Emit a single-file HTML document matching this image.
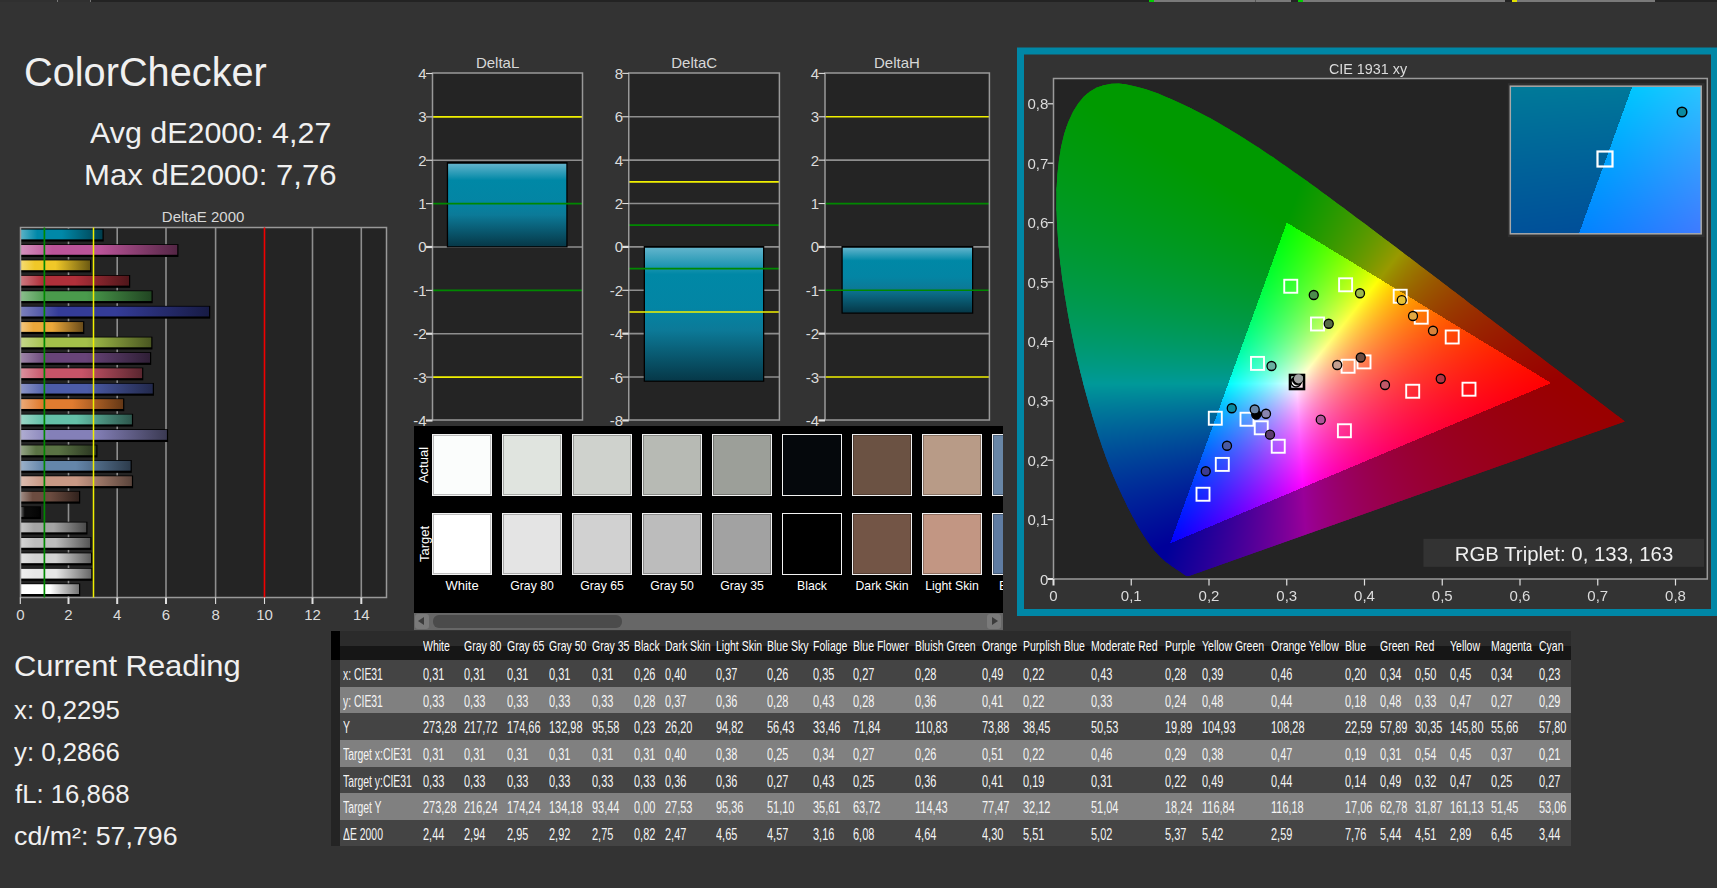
<!DOCTYPE html><html><head><meta charset="utf-8"><style>
html,body{margin:0;padding:0;}body{width:1717px;height:888px;background:#333333;position:relative;overflow:hidden;font-family:"Liberation Sans", sans-serif;}
.t{position:absolute;white-space:nowrap;}
svg{position:absolute;left:0;top:0;}
</style></head><body>
<div style="position:absolute;left:0;top:0;width:1717px;height:2px;background:#232323"></div>
<div style="position:absolute;left:0;top:0;width:90px;height:2px;background:#303030"></div>
<div style="position:absolute;left:57px;top:0;width:1px;height:2px;background:#777"></div>
<div style="position:absolute;left:90px;top:0;width:1px;height:2px;background:#777"></div>
<div style="position:absolute;left:1149px;top:0;width:142px;height:2px;background:#7a7a7a"></div>
<div style="position:absolute;left:1149px;top:0;width:5px;height:2px;background:#00d000"></div>
<div style="position:absolute;left:1255px;top:0;width:1px;height:2px;background:#555"></div>
<div style="position:absolute;left:1298px;top:0;width:207px;height:2px;background:#7a7a7a"></div>
<div style="position:absolute;left:1298px;top:0;width:5px;height:2px;background:#00d000"></div>
<div style="position:absolute;left:1512px;top:0;width:143px;height:2px;background:#7a7a7a"></div>
<div style="position:absolute;left:1512px;top:0;width:5px;height:2px;background:#e0e000"></div>
<div class="t" style="left:23.60px;top:51.80px;font-size:40px;line-height:40px;color:#f0f0f0;transform:scaleX(0.993);transform-origin:left 0;">ColorChecker</div>
<div class="t" style="left:89.70px;top:118.35px;font-size:30px;line-height:30px;color:#f0f0f0;transform:scaleX(1.014);transform-origin:left 0;">Avg dE2000: 4,27</div>
<div class="t" style="left:84.20px;top:160.35px;font-size:30px;line-height:30px;color:#f0f0f0;transform:scaleX(1.037);transform-origin:left 0;">Max dE2000: 7,76</div>
<div class="t" style="left:161.80px;top:209.18px;font-size:15px;line-height:15px;color:#d8d8d8;">DeltaE 2000</div>
<svg width="1717" height="888"><defs><linearGradient id="eb0" x1="0" y1="0" x2="1" y2="0"><stop offset="0" stop-color="#59b2c6"/><stop offset="0.2" stop-color="#0088a8"/><stop offset="0.5" stop-color="#0088a8"/><stop offset="1" stop-color="#003d4c"/></linearGradient><linearGradient id="eb1" x1="0" y1="0" x2="1" y2="0"><stop offset="0" stop-color="#d390bd"/><stop offset="0.2" stop-color="#bb5499"/><stop offset="0.5" stop-color="#bb5499"/><stop offset="1" stop-color="#542645"/></linearGradient><linearGradient id="eb2" x1="0" y1="0" x2="1" y2="0"><stop offset="0" stop-color="#f5db73"/><stop offset="0.2" stop-color="#f0c828"/><stop offset="0.5" stop-color="#f0c828"/><stop offset="1" stop-color="#6c5a12"/></linearGradient><linearGradient id="eb3" x1="0" y1="0" x2="1" y2="0"><stop offset="0" stop-color="#cc787f"/><stop offset="0.2" stop-color="#b0303a"/><stop offset="0.5" stop-color="#b0303a"/><stop offset="1" stop-color="#4f161a"/></linearGradient><linearGradient id="eb4" x1="0" y1="0" x2="1" y2="0"><stop offset="0" stop-color="#89bd8b"/><stop offset="0.2" stop-color="#4a9a4c"/><stop offset="0.5" stop-color="#4a9a4c"/><stop offset="1" stop-color="#214522"/></linearGradient><linearGradient id="eb5" x1="0" y1="0" x2="1" y2="0"><stop offset="0" stop-color="#7b80bc"/><stop offset="0.2" stop-color="#343c98"/><stop offset="0.5" stop-color="#343c98"/><stop offset="1" stop-color="#171b44"/></linearGradient><linearGradient id="eb6" x1="0" y1="0" x2="1" y2="0"><stop offset="0" stop-color="#f2c67f"/><stop offset="0.2" stop-color="#eba83a"/><stop offset="0.5" stop-color="#eba83a"/><stop offset="1" stop-color="#6a4c1a"/></linearGradient><linearGradient id="eb7" x1="0" y1="0" x2="1" y2="0"><stop offset="0" stop-color="#c4d689"/><stop offset="0.2" stop-color="#a4c04a"/><stop offset="0.5" stop-color="#a4c04a"/><stop offset="1" stop-color="#4a5621"/></linearGradient><linearGradient id="eb8" x1="0" y1="0" x2="1" y2="0"><stop offset="0" stop-color="#9d85a7"/><stop offset="0.2" stop-color="#684478"/><stop offset="0.5" stop-color="#684478"/><stop offset="1" stop-color="#2f1f36"/></linearGradient><linearGradient id="eb9" x1="0" y1="0" x2="1" y2="0"><stop offset="0" stop-color="#db909d"/><stop offset="0.2" stop-color="#c85468"/><stop offset="0.5" stop-color="#c85468"/><stop offset="1" stop-color="#5a262f"/></linearGradient><linearGradient id="eb10" x1="0" y1="0" x2="1" y2="0"><stop offset="0" stop-color="#8b95c6"/><stop offset="0.2" stop-color="#4c5ca8"/><stop offset="0.5" stop-color="#4c5ca8"/><stop offset="1" stop-color="#22294c"/></linearGradient><linearGradient id="eb11" x1="0" y1="0" x2="1" y2="0"><stop offset="0" stop-color="#ebaa78"/><stop offset="0.2" stop-color="#e07c30"/><stop offset="0.5" stop-color="#e07c30"/><stop offset="1" stop-color="#653816"/></linearGradient><linearGradient id="eb12" x1="0" y1="0" x2="1" y2="0"><stop offset="0" stop-color="#9ad6c6"/><stop offset="0.2" stop-color="#64c0a8"/><stop offset="0.5" stop-color="#64c0a8"/><stop offset="1" stop-color="#2d564c"/></linearGradient><linearGradient id="eb13" x1="0" y1="0" x2="1" y2="0"><stop offset="0" stop-color="#afacd1"/><stop offset="0.2" stop-color="#8480b8"/><stop offset="0.5" stop-color="#8480b8"/><stop offset="1" stop-color="#3b3a53"/></linearGradient><linearGradient id="eb14" x1="0" y1="0" x2="1" y2="0"><stop offset="0" stop-color="#94a385"/><stop offset="0.2" stop-color="#5a7244"/><stop offset="0.5" stop-color="#5a7244"/><stop offset="1" stop-color="#28331f"/></linearGradient><linearGradient id="eb15" x1="0" y1="0" x2="1" y2="0"><stop offset="0" stop-color="#9ab0c8"/><stop offset="0.2" stop-color="#6486aa"/><stop offset="0.5" stop-color="#6486aa"/><stop offset="1" stop-color="#2d3c4c"/></linearGradient><linearGradient id="eb16" x1="0" y1="0" x2="1" y2="0"><stop offset="0" stop-color="#dbbcaf"/><stop offset="0.2" stop-color="#c89884"/><stop offset="0.5" stop-color="#c89884"/><stop offset="1" stop-color="#5a443b"/></linearGradient><linearGradient id="eb17" x1="0" y1="0" x2="1" y2="0"><stop offset="0" stop-color="#9f8b83"/><stop offset="0.2" stop-color="#6c4c40"/><stop offset="0.5" stop-color="#6c4c40"/><stop offset="1" stop-color="#31221d"/></linearGradient><linearGradient id="eb18" x1="0" y1="0" x2="1" y2="0"><stop offset="0" stop-color="#606060"/><stop offset="0.2" stop-color="#0a0a0a"/><stop offset="0.5" stop-color="#0a0a0a"/><stop offset="1" stop-color="#040404"/></linearGradient><linearGradient id="eb19" x1="0" y1="0" x2="1" y2="0"><stop offset="0" stop-color="#c4c4c4"/><stop offset="0.2" stop-color="#a4a4a4"/><stop offset="0.5" stop-color="#a4a4a4"/><stop offset="1" stop-color="#4a4a4a"/></linearGradient><linearGradient id="eb20" x1="0" y1="0" x2="1" y2="0"><stop offset="0" stop-color="#d4d4d4"/><stop offset="0.2" stop-color="#bdbdbd"/><stop offset="0.5" stop-color="#bdbdbd"/><stop offset="1" stop-color="#555555"/></linearGradient><linearGradient id="eb21" x1="0" y1="0" x2="1" y2="0"><stop offset="0" stop-color="#e2e2e2"/><stop offset="0.2" stop-color="#d2d2d2"/><stop offset="0.5" stop-color="#d2d2d2"/><stop offset="1" stop-color="#5e5e5e"/></linearGradient><linearGradient id="eb22" x1="0" y1="0" x2="1" y2="0"><stop offset="0" stop-color="#efefef"/><stop offset="0.2" stop-color="#e6e6e6"/><stop offset="0.5" stop-color="#e6e6e6"/><stop offset="1" stop-color="#676767"/></linearGradient><linearGradient id="eb23" x1="0" y1="0" x2="1" y2="0"><stop offset="0" stop-color="#ffffff"/><stop offset="0.2" stop-color="#ffffff"/><stop offset="0.5" stop-color="#ffffff"/><stop offset="1" stop-color="#737373"/></linearGradient><linearGradient id="db432" x1="0" y1="0" x2="0" y2="1"><stop offset="0" stop-color="#62b4cc"/><stop offset="0.2" stop-color="#0088a6"/><stop offset="0.45" stop-color="#0385a4"/><stop offset="0.62" stop-color="#0c7a98"/><stop offset="1" stop-color="#063848"/></linearGradient><linearGradient id="db628" x1="0" y1="0" x2="0" y2="1"><stop offset="0" stop-color="#62b4cc"/><stop offset="0.2" stop-color="#0088a6"/><stop offset="0.45" stop-color="#0385a4"/><stop offset="0.62" stop-color="#0c7a98"/><stop offset="1" stop-color="#063848"/></linearGradient><linearGradient id="db825" x1="0" y1="0" x2="0" y2="1"><stop offset="0" stop-color="#62b4cc"/><stop offset="0.2" stop-color="#0088a6"/><stop offset="0.45" stop-color="#0385a4"/><stop offset="0.62" stop-color="#0c7a98"/><stop offset="1" stop-color="#063848"/></linearGradient></defs><rect x="20.5" y="227.5" width="366.0" height="370.0" fill="#242424"/><line x1="68.50" y1="227.5" x2="68.50" y2="597.5" stroke="#8e8e8e" stroke-width="1.6"/><line x1="117.20" y1="227.5" x2="117.20" y2="597.5" stroke="#8e8e8e" stroke-width="1.6"/><line x1="166.00" y1="227.5" x2="166.00" y2="597.5" stroke="#8e8e8e" stroke-width="1.6"/><line x1="215.60" y1="227.5" x2="215.60" y2="597.5" stroke="#8e8e8e" stroke-width="1.6"/><line x1="312.50" y1="227.5" x2="312.50" y2="597.5" stroke="#8e8e8e" stroke-width="1.6"/><line x1="361.30" y1="227.5" x2="361.30" y2="597.5" stroke="#8e8e8e" stroke-width="1.6"/><rect x="21" y="228.75" width="82.70" height="12.8" fill="#000"/><rect x="21" y="229.55" width="81.50" height="9.8" fill="url(#eb0)"/><rect x="21" y="244.17" width="157.45" height="12.8" fill="#000"/><rect x="21" y="244.97" width="156.25" height="9.8" fill="url(#eb1)"/><rect x="21" y="259.59" width="70.20" height="12.8" fill="#000"/><rect x="21" y="260.39" width="69.00" height="9.8" fill="url(#eb2)"/><rect x="21" y="275.01" width="109.20" height="12.8" fill="#000"/><rect x="21" y="275.81" width="108.00" height="9.8" fill="url(#eb3)"/><rect x="21" y="290.43" width="131.70" height="12.8" fill="#000"/><rect x="21" y="291.23" width="130.50" height="9.8" fill="url(#eb4)"/><rect x="21" y="305.85" width="189.20" height="12.8" fill="#000"/><rect x="21" y="306.65" width="188.00" height="9.8" fill="url(#eb5)"/><rect x="21" y="321.27" width="63.30" height="12.8" fill="#000"/><rect x="21" y="322.07" width="62.10" height="9.8" fill="url(#eb6)"/><rect x="21" y="336.69" width="131.45" height="12.8" fill="#000"/><rect x="21" y="337.49" width="130.25" height="9.8" fill="url(#eb7)"/><rect x="21" y="352.11" width="130.20" height="12.8" fill="#000"/><rect x="21" y="352.91" width="129.00" height="9.8" fill="url(#eb8)"/><rect x="21" y="367.53" width="122.30" height="12.8" fill="#000"/><rect x="21" y="368.33" width="121.10" height="9.8" fill="url(#eb9)"/><rect x="21" y="382.95" width="132.95" height="12.8" fill="#000"/><rect x="21" y="383.75" width="131.75" height="9.8" fill="url(#eb10)"/><rect x="21" y="398.37" width="103.30" height="12.8" fill="#000"/><rect x="21" y="399.17" width="102.10" height="9.8" fill="url(#eb11)"/><rect x="21" y="413.79" width="112.10" height="12.8" fill="#000"/><rect x="21" y="414.59" width="110.90" height="9.8" fill="url(#eb12)"/><rect x="21" y="429.21" width="147.10" height="12.8" fill="#000"/><rect x="21" y="430.01" width="145.90" height="9.8" fill="url(#eb13)"/><rect x="21" y="444.63" width="76.45" height="12.8" fill="#000"/><rect x="21" y="445.43" width="75.25" height="9.8" fill="url(#eb14)"/><rect x="21" y="460.05" width="110.80" height="12.8" fill="#000"/><rect x="21" y="460.85" width="109.60" height="9.8" fill="url(#eb15)"/><rect x="21" y="475.47" width="112.10" height="12.8" fill="#000"/><rect x="21" y="476.27" width="110.90" height="9.8" fill="url(#eb16)"/><rect x="21" y="490.89" width="59.20" height="12.8" fill="#000"/><rect x="21" y="491.69" width="58.00" height="9.8" fill="url(#eb17)"/><rect x="21" y="506.31" width="19.95" height="12.8" fill="#000"/><rect x="21" y="507.11" width="18.75" height="9.8" fill="url(#eb18)"/><rect x="21" y="521.73" width="66.45" height="12.8" fill="#000"/><rect x="21" y="522.53" width="65.25" height="9.8" fill="url(#eb19)"/><rect x="21" y="537.15" width="70.45" height="12.8" fill="#000"/><rect x="21" y="537.95" width="69.25" height="9.8" fill="url(#eb20)"/><rect x="21" y="552.57" width="71.20" height="12.8" fill="#000"/><rect x="21" y="553.37" width="70.00" height="9.8" fill="url(#eb21)"/><rect x="21" y="567.99" width="71.45" height="12.8" fill="#000"/><rect x="21" y="568.79" width="70.25" height="9.8" fill="url(#eb22)"/><rect x="21" y="583.41" width="59.20" height="12.8" fill="#000"/><rect x="21" y="584.21" width="58.00" height="9.8" fill="url(#eb23)"/><rect x="20.5" y="227.5" width="366.0" height="370.0" fill="none" stroke="#999" stroke-width="1.5"/><line x1="44.4" y1="227.5" x2="44.4" y2="597.5" stroke="#008800" stroke-width="1.7"/><line x1="93.5" y1="227.5" x2="93.5" y2="597.5" stroke="#f0f000" stroke-width="1.5"/><line x1="264.5" y1="227.5" x2="264.5" y2="597.5" stroke="#f00000" stroke-width="1.6"/><line x1="20.30" y1="597.5" x2="20.30" y2="604" stroke="#e0e0e0" stroke-width="1.1"/><line x1="68.50" y1="597.5" x2="68.50" y2="604" stroke="#e0e0e0" stroke-width="2.0"/><line x1="117.20" y1="597.5" x2="117.20" y2="604" stroke="#e0e0e0" stroke-width="2.0"/><line x1="166.00" y1="597.5" x2="166.00" y2="604" stroke="#e0e0e0" stroke-width="2.0"/><line x1="215.60" y1="597.5" x2="215.60" y2="604" stroke="#e0e0e0" stroke-width="1.1"/><line x1="264.50" y1="597.5" x2="264.50" y2="604" stroke="#e0e0e0" stroke-width="1.1"/><line x1="312.50" y1="597.5" x2="312.50" y2="604" stroke="#e0e0e0" stroke-width="2.0"/><line x1="361.30" y1="597.5" x2="361.30" y2="604" stroke="#e0e0e0" stroke-width="2.0"/><rect x="432.5" y="73.0" width="150.0" height="347.0" fill="#242424"/><line x1="432.5" y1="160.25" x2="582.5" y2="160.25" stroke="#8e8e8e" stroke-width="1.6"/><line x1="432.5" y1="247.00" x2="582.5" y2="247.00" stroke="#8e8e8e" stroke-width="1.6"/><line x1="432.5" y1="333.75" x2="582.5" y2="333.75" stroke="#8e8e8e" stroke-width="1.6"/><rect x="446.80" y="161.95" width="120.80" height="85.50" fill="#000"/><rect x="448.10" y="163.75" width="118.20" height="82.50" fill="url(#db432)"/><line x1="432.5" y1="116.88" x2="582.5" y2="116.88" stroke="#f0f000" stroke-width="1.6"/><line x1="432.5" y1="377.12" x2="582.5" y2="377.12" stroke="#f0f000" stroke-width="1.6"/><line x1="432.5" y1="203.62" x2="582.5" y2="203.62" stroke="#008800" stroke-width="1.7"/><line x1="432.5" y1="290.38" x2="582.5" y2="290.38" stroke="#008800" stroke-width="1.7"/><rect x="432.5" y="73.0" width="150.0" height="347.0" fill="none" stroke="#999" stroke-width="1.5"/><line x1="426.00" y1="73.50" x2="432.5" y2="73.50" stroke="#e0e0e0" stroke-width="1.1"/><line x1="426.00" y1="116.88" x2="432.5" y2="116.88" stroke="#e0e0e0" stroke-width="1.1"/><line x1="426.00" y1="160.25" x2="432.5" y2="160.25" stroke="#e0e0e0" stroke-width="1.1"/><line x1="426.00" y1="203.62" x2="432.5" y2="203.62" stroke="#e0e0e0" stroke-width="1.1"/><line x1="426.00" y1="247.00" x2="432.5" y2="247.00" stroke="#e0e0e0" stroke-width="2.2"/><line x1="426.00" y1="290.38" x2="432.5" y2="290.38" stroke="#e0e0e0" stroke-width="1.1"/><line x1="426.00" y1="333.75" x2="432.5" y2="333.75" stroke="#e0e0e0" stroke-width="2.2"/><line x1="426.00" y1="377.12" x2="432.5" y2="377.12" stroke="#e0e0e0" stroke-width="1.1"/><line x1="426.00" y1="420.50" x2="432.5" y2="420.50" stroke="#e0e0e0" stroke-width="2.2"/><rect x="628.75" y="73.0" width="150.64999999999998" height="347.0" fill="#242424"/><line x1="628.75" y1="116.76" x2="779.4" y2="116.76" stroke="#8e8e8e" stroke-width="1.6"/><line x1="628.75" y1="160.14" x2="779.4" y2="160.14" stroke="#8e8e8e" stroke-width="1.6"/><line x1="628.75" y1="203.52" x2="779.4" y2="203.52" stroke="#8e8e8e" stroke-width="1.6"/><line x1="628.75" y1="246.90" x2="779.4" y2="246.90" stroke="#8e8e8e" stroke-width="1.6"/><line x1="628.75" y1="290.28" x2="779.4" y2="290.28" stroke="#8e8e8e" stroke-width="1.6"/><line x1="628.75" y1="333.66" x2="779.4" y2="333.66" stroke="#8e8e8e" stroke-width="1.6"/><line x1="628.75" y1="377.04" x2="779.4" y2="377.04" stroke="#8e8e8e" stroke-width="1.6"/><rect x="643.70" y="245.95" width="120.60" height="135.85" fill="#000"/><rect x="645.00" y="247.75" width="118.00" height="132.85" fill="url(#db628)"/><line x1="628.75" y1="181.83" x2="779.4" y2="181.83" stroke="#f0f000" stroke-width="1.6"/><line x1="628.75" y1="311.97" x2="779.4" y2="311.97" stroke="#f0f000" stroke-width="1.6"/><line x1="628.75" y1="225.21" x2="779.4" y2="225.21" stroke="#008800" stroke-width="1.7"/><line x1="628.75" y1="268.59" x2="779.4" y2="268.59" stroke="#008800" stroke-width="1.7"/><rect x="628.75" y="73.0" width="150.64999999999998" height="347.0" fill="none" stroke="#999" stroke-width="1.5"/><line x1="622.25" y1="73.38" x2="628.75" y2="73.38" stroke="#e0e0e0" stroke-width="1.1"/><line x1="622.25" y1="116.76" x2="628.75" y2="116.76" stroke="#e0e0e0" stroke-width="1.1"/><line x1="622.25" y1="160.14" x2="628.75" y2="160.14" stroke="#e0e0e0" stroke-width="1.1"/><line x1="622.25" y1="203.52" x2="628.75" y2="203.52" stroke="#e0e0e0" stroke-width="1.1"/><line x1="622.25" y1="246.90" x2="628.75" y2="246.90" stroke="#e0e0e0" stroke-width="2.2"/><line x1="622.25" y1="290.28" x2="628.75" y2="290.28" stroke="#e0e0e0" stroke-width="1.1"/><line x1="622.25" y1="333.66" x2="628.75" y2="333.66" stroke="#e0e0e0" stroke-width="2.2"/><line x1="622.25" y1="377.04" x2="628.75" y2="377.04" stroke="#e0e0e0" stroke-width="1.1"/><line x1="622.25" y1="420.42" x2="628.75" y2="420.42" stroke="#e0e0e0" stroke-width="2.2"/><rect x="825.0" y="73.0" width="164.39999999999998" height="347.0" fill="#242424"/><line x1="825.0" y1="160.15" x2="989.4" y2="160.15" stroke="#8e8e8e" stroke-width="1.6"/><line x1="825.0" y1="246.90" x2="989.4" y2="246.90" stroke="#8e8e8e" stroke-width="1.6"/><line x1="825.0" y1="333.65" x2="989.4" y2="333.65" stroke="#8e8e8e" stroke-width="1.6"/><rect x="841.45" y="245.95" width="131.85" height="67.75" fill="#000"/><rect x="842.75" y="247.75" width="129.25" height="64.75" fill="url(#db825)"/><line x1="825.0" y1="116.78" x2="989.4" y2="116.78" stroke="#f0f000" stroke-width="1.6"/><line x1="825.0" y1="377.02" x2="989.4" y2="377.02" stroke="#f0f000" stroke-width="1.6"/><line x1="825.0" y1="203.53" x2="989.4" y2="203.53" stroke="#008800" stroke-width="1.7"/><line x1="825.0" y1="290.27" x2="989.4" y2="290.27" stroke="#008800" stroke-width="1.7"/><rect x="825.0" y="73.0" width="164.39999999999998" height="347.0" fill="none" stroke="#999" stroke-width="1.5"/><line x1="818.50" y1="73.40" x2="825.0" y2="73.40" stroke="#e0e0e0" stroke-width="1.1"/><line x1="818.50" y1="116.78" x2="825.0" y2="116.78" stroke="#e0e0e0" stroke-width="1.1"/><line x1="818.50" y1="160.15" x2="825.0" y2="160.15" stroke="#e0e0e0" stroke-width="1.1"/><line x1="818.50" y1="203.53" x2="825.0" y2="203.53" stroke="#e0e0e0" stroke-width="1.1"/><line x1="818.50" y1="246.90" x2="825.0" y2="246.90" stroke="#e0e0e0" stroke-width="2.2"/><line x1="818.50" y1="290.27" x2="825.0" y2="290.27" stroke="#e0e0e0" stroke-width="1.1"/><line x1="818.50" y1="333.65" x2="825.0" y2="333.65" stroke="#e0e0e0" stroke-width="2.2"/><line x1="818.50" y1="377.02" x2="825.0" y2="377.02" stroke="#e0e0e0" stroke-width="1.1"/><line x1="818.50" y1="420.40" x2="825.0" y2="420.40" stroke="#e0e0e0" stroke-width="2.2"/><rect x="1020.5" y="51" width="694" height="561.5" fill="none" stroke="#0087a6" stroke-width="7"/><rect x="1053.5" y="78.5" width="653.8" height="500.5" fill="#242424"/></svg>
<div class="t" style="left:475.90px;top:55.27px;font-size:15px;line-height:15px;color:#d8d8d8;">DeltaL</div>
<div class="t" style="left:671.25px;top:55.27px;font-size:15px;line-height:15px;color:#d8d8d8;">DeltaC</div>
<div class="t" style="left:874.00px;top:55.27px;font-size:15px;line-height:15px;color:#d8d8d8;">DeltaH</div>
<div class="t" style="left:20.30px;top:607.17px;font-size:15px;line-height:15px;color:#dcdcdc;transform:translateX(-50%) ;transform-origin:center 0;">0</div>
<div class="t" style="left:68.50px;top:607.17px;font-size:15px;line-height:15px;color:#dcdcdc;transform:translateX(-50%) ;transform-origin:center 0;">2</div>
<div class="t" style="left:117.20px;top:607.17px;font-size:15px;line-height:15px;color:#dcdcdc;transform:translateX(-50%) ;transform-origin:center 0;">4</div>
<div class="t" style="left:166.00px;top:607.17px;font-size:15px;line-height:15px;color:#dcdcdc;transform:translateX(-50%) ;transform-origin:center 0;">6</div>
<div class="t" style="left:215.60px;top:607.17px;font-size:15px;line-height:15px;color:#dcdcdc;transform:translateX(-50%) ;transform-origin:center 0;">8</div>
<div class="t" style="left:264.50px;top:607.17px;font-size:15px;line-height:15px;color:#dcdcdc;transform:translateX(-50%) ;transform-origin:center 0;">10</div>
<div class="t" style="left:312.50px;top:607.17px;font-size:15px;line-height:15px;color:#dcdcdc;transform:translateX(-50%) ;transform-origin:center 0;">12</div>
<div class="t" style="left:361.30px;top:607.17px;font-size:15px;line-height:15px;color:#dcdcdc;transform:translateX(-50%) ;transform-origin:center 0;">14</div>
<div class="t" style="left:426.50px;top:65.97px;font-size:15px;line-height:15px;color:#dcdcdc;transform:translateX(-100%) ;transform-origin:right 0;">4</div>
<div class="t" style="left:426.50px;top:109.35px;font-size:15px;line-height:15px;color:#dcdcdc;transform:translateX(-100%) ;transform-origin:right 0;">3</div>
<div class="t" style="left:426.50px;top:152.73px;font-size:15px;line-height:15px;color:#dcdcdc;transform:translateX(-100%) ;transform-origin:right 0;">2</div>
<div class="t" style="left:426.50px;top:196.10px;font-size:15px;line-height:15px;color:#dcdcdc;transform:translateX(-100%) ;transform-origin:right 0;">1</div>
<div class="t" style="left:426.50px;top:239.48px;font-size:15px;line-height:15px;color:#dcdcdc;transform:translateX(-100%) ;transform-origin:right 0;">0</div>
<div class="t" style="left:426.50px;top:282.85px;font-size:15px;line-height:15px;color:#dcdcdc;transform:translateX(-100%) ;transform-origin:right 0;">-1</div>
<div class="t" style="left:426.50px;top:326.23px;font-size:15px;line-height:15px;color:#dcdcdc;transform:translateX(-100%) ;transform-origin:right 0;">-2</div>
<div class="t" style="left:426.50px;top:369.60px;font-size:15px;line-height:15px;color:#dcdcdc;transform:translateX(-100%) ;transform-origin:right 0;">-3</div>
<div class="t" style="left:426.50px;top:412.98px;font-size:15px;line-height:15px;color:#dcdcdc;transform:translateX(-100%) ;transform-origin:right 0;">-4</div>
<div class="t" style="left:623.00px;top:65.85px;font-size:15px;line-height:15px;color:#dcdcdc;transform:translateX(-100%) ;transform-origin:right 0;">8</div>
<div class="t" style="left:623.00px;top:109.23px;font-size:15px;line-height:15px;color:#dcdcdc;transform:translateX(-100%) ;transform-origin:right 0;">6</div>
<div class="t" style="left:623.00px;top:152.62px;font-size:15px;line-height:15px;color:#dcdcdc;transform:translateX(-100%) ;transform-origin:right 0;">4</div>
<div class="t" style="left:623.00px;top:196.00px;font-size:15px;line-height:15px;color:#dcdcdc;transform:translateX(-100%) ;transform-origin:right 0;">2</div>
<div class="t" style="left:623.00px;top:239.38px;font-size:15px;line-height:15px;color:#dcdcdc;transform:translateX(-100%) ;transform-origin:right 0;">0</div>
<div class="t" style="left:623.00px;top:282.76px;font-size:15px;line-height:15px;color:#dcdcdc;transform:translateX(-100%) ;transform-origin:right 0;">-2</div>
<div class="t" style="left:623.00px;top:326.14px;font-size:15px;line-height:15px;color:#dcdcdc;transform:translateX(-100%) ;transform-origin:right 0;">-4</div>
<div class="t" style="left:623.00px;top:369.52px;font-size:15px;line-height:15px;color:#dcdcdc;transform:translateX(-100%) ;transform-origin:right 0;">-6</div>
<div class="t" style="left:623.00px;top:412.90px;font-size:15px;line-height:15px;color:#dcdcdc;transform:translateX(-100%) ;transform-origin:right 0;">-8</div>
<div class="t" style="left:819.00px;top:65.88px;font-size:15px;line-height:15px;color:#dcdcdc;transform:translateX(-100%) ;transform-origin:right 0;">4</div>
<div class="t" style="left:819.00px;top:109.25px;font-size:15px;line-height:15px;color:#dcdcdc;transform:translateX(-100%) ;transform-origin:right 0;">3</div>
<div class="t" style="left:819.00px;top:152.63px;font-size:15px;line-height:15px;color:#dcdcdc;transform:translateX(-100%) ;transform-origin:right 0;">2</div>
<div class="t" style="left:819.00px;top:196.00px;font-size:15px;line-height:15px;color:#dcdcdc;transform:translateX(-100%) ;transform-origin:right 0;">1</div>
<div class="t" style="left:819.00px;top:239.38px;font-size:15px;line-height:15px;color:#dcdcdc;transform:translateX(-100%) ;transform-origin:right 0;">0</div>
<div class="t" style="left:819.00px;top:282.75px;font-size:15px;line-height:15px;color:#dcdcdc;transform:translateX(-100%) ;transform-origin:right 0;">-1</div>
<div class="t" style="left:819.00px;top:326.12px;font-size:15px;line-height:15px;color:#dcdcdc;transform:translateX(-100%) ;transform-origin:right 0;">-2</div>
<div class="t" style="left:819.00px;top:369.50px;font-size:15px;line-height:15px;color:#dcdcdc;transform:translateX(-100%) ;transform-origin:right 0;">-3</div>
<div class="t" style="left:819.00px;top:412.88px;font-size:15px;line-height:15px;color:#dcdcdc;transform:translateX(-100%) ;transform-origin:right 0;">-4</div>
<div style="position:absolute;left:414px;top:426px;width:589px;height:187px;background:#000;overflow:hidden">
<div style="position:absolute;left:18px;top:8px;width:58px;height:60px;border:1px solid #f2f2f2;box-shadow:inset 0 0 0 1px rgba(0,0,0,0.25);background:#fbfdfc"></div>
<div style="position:absolute;left:18px;top:87px;width:58px;height:60px;border:1px solid #f2f2f2;box-shadow:inset 0 0 0 1px rgba(0,0,0,0.25);background:#ffffff"></div>
<div style="position:absolute;left:88px;top:8px;width:58px;height:60px;border:1px solid #f2f2f2;box-shadow:inset 0 0 0 1px rgba(0,0,0,0.25);background:#e0e4df"></div>
<div style="position:absolute;left:88px;top:87px;width:58px;height:60px;border:1px solid #f2f2f2;box-shadow:inset 0 0 0 1px rgba(0,0,0,0.25);background:#e4e4e4"></div>
<div style="position:absolute;left:158px;top:8px;width:58px;height:60px;border:1px solid #f2f2f2;box-shadow:inset 0 0 0 1px rgba(0,0,0,0.25);background:#cfd2cd"></div>
<div style="position:absolute;left:158px;top:87px;width:58px;height:60px;border:1px solid #f2f2f2;box-shadow:inset 0 0 0 1px rgba(0,0,0,0.25);background:#d1d1d1"></div>
<div style="position:absolute;left:228px;top:8px;width:58px;height:60px;border:1px solid #f2f2f2;box-shadow:inset 0 0 0 1px rgba(0,0,0,0.25);background:#b7bab4"></div>
<div style="position:absolute;left:228px;top:87px;width:58px;height:60px;border:1px solid #f2f2f2;box-shadow:inset 0 0 0 1px rgba(0,0,0,0.25);background:#bcbcbc"></div>
<div style="position:absolute;left:298px;top:8px;width:58px;height:60px;border:1px solid #f2f2f2;box-shadow:inset 0 0 0 1px rgba(0,0,0,0.25);background:#9c9f99"></div>
<div style="position:absolute;left:298px;top:87px;width:58px;height:60px;border:1px solid #f2f2f2;box-shadow:inset 0 0 0 1px rgba(0,0,0,0.25);background:#a2a2a2"></div>
<div style="position:absolute;left:368px;top:8px;width:58px;height:60px;border:1px solid #f2f2f2;box-shadow:inset 0 0 0 1px rgba(0,0,0,0.25);background:#05080c"></div>
<div style="position:absolute;left:368px;top:87px;width:58px;height:60px;border:1px solid #f2f2f2;box-shadow:inset 0 0 0 1px rgba(0,0,0,0.25);background:#000000"></div>
<div style="position:absolute;left:438px;top:8px;width:58px;height:60px;border:1px solid #f2f2f2;box-shadow:inset 0 0 0 1px rgba(0,0,0,0.25);background:#6b5243"></div>
<div style="position:absolute;left:438px;top:87px;width:58px;height:60px;border:1px solid #f2f2f2;box-shadow:inset 0 0 0 1px rgba(0,0,0,0.25);background:#735546"></div>
<div style="position:absolute;left:508px;top:8px;width:58px;height:60px;border:1px solid #f2f2f2;box-shadow:inset 0 0 0 1px rgba(0,0,0,0.25);background:#b89b87"></div>
<div style="position:absolute;left:508px;top:87px;width:58px;height:60px;border:1px solid #f2f2f2;box-shadow:inset 0 0 0 1px rgba(0,0,0,0.25);background:#c29683"></div>
<div style="position:absolute;left:578px;top:8px;width:58px;height:60px;border:1px solid #f2f2f2;box-shadow:inset 0 0 0 1px rgba(0,0,0,0.25);background:#6886a6"></div>
<div style="position:absolute;left:578px;top:87px;width:58px;height:60px;border:1px solid #f2f2f2;box-shadow:inset 0 0 0 1px rgba(0,0,0,0.25);background:#5f7ca2"></div>
</div>
<div class="t" style="left:462.00px;top:578.63px;font-size:13px;line-height:13px;color:#ffffff;transform:translateX(-50%) ;transform-origin:center 0;">White</div>
<div class="t" style="left:532.00px;top:578.63px;font-size:13px;line-height:13px;color:#ffffff;transform:translateX(-50%) scaleX(0.94);transform-origin:center 0;">Gray 80</div>
<div class="t" style="left:602.00px;top:578.63px;font-size:13px;line-height:13px;color:#ffffff;transform:translateX(-50%) scaleX(0.94);transform-origin:center 0;">Gray 65</div>
<div class="t" style="left:672.00px;top:578.63px;font-size:13px;line-height:13px;color:#ffffff;transform:translateX(-50%) scaleX(0.94);transform-origin:center 0;">Gray 50</div>
<div class="t" style="left:742.00px;top:578.63px;font-size:13px;line-height:13px;color:#ffffff;transform:translateX(-50%) scaleX(0.94);transform-origin:center 0;">Gray 35</div>
<div class="t" style="left:812.00px;top:578.63px;font-size:13px;line-height:13px;color:#ffffff;transform:translateX(-50%) scaleX(0.94);transform-origin:center 0;">Black</div>
<div class="t" style="left:882.00px;top:578.63px;font-size:13px;line-height:13px;color:#ffffff;transform:translateX(-50%) scaleX(0.94);transform-origin:center 0;">Dark Skin</div>
<div class="t" style="left:952.00px;top:578.63px;font-size:13px;line-height:13px;color:#ffffff;transform:translateX(-50%) scaleX(0.94);transform-origin:center 0;">Light Skin</div>
<div style="position:absolute;left:992px;top:570px;width:11px;height:30px;overflow:hidden"><div class="t" style="left:7px;top:8.9px;font-size:13px;line-height:13px;color:#fff">Blue Sky</div></div>
<div class="t" style="left:423px;top:465px;font-size:13px;line-height:13px;color:#fff;transform:translate(-50%,-50%) rotate(-90deg)">Actual</div>
<div class="t" style="left:424px;top:544px;font-size:13px;line-height:13px;color:#fff;transform:translate(-50%,-50%) rotate(-90deg)">Target</div>
<div style="position:absolute;left:414px;top:613px;width:589px;height:17px;background:#676767"></div>
<div style="position:absolute;left:415px;top:614px;width:14px;height:15px;background:#7a7a7a;border-radius:3px"></div>
<div style="position:absolute;left:418px;top:617px;width:0;height:0;border-top:4.5px solid transparent;border-bottom:4.5px solid transparent;border-right:6px solid #3c3c3c"></div>
<div style="position:absolute;left:433px;top:615px;width:189px;height:13px;background:#4b4b4b;border-radius:6px"></div>
<div style="position:absolute;left:987px;top:614px;width:14px;height:15px;background:#7a7a7a;border-radius:3px"></div>
<div style="position:absolute;left:992px;top:617px;width:0;height:0;border-top:4.5px solid transparent;border-bottom:4.5px solid transparent;border-left:6px solid #3c3c3c"></div>
<div style="position:absolute;left:331px;top:631px;width:1240px;height:15px;background:#2b2b2b"></div>
<div style="position:absolute;left:331px;top:646px;width:1240px;height:14px;background:#161616"></div>
<div style="position:absolute;left:331px;top:631px;width:9px;height:29px;background:#000"></div>
<div style="position:absolute;left:340px;top:660px;width:1231px;height:27px;background:#444444"></div>
<div style="position:absolute;left:331px;top:660px;width:9px;height:27px;background:#242424"></div>
<div style="position:absolute;left:340px;top:687px;width:1231px;height:26px;background:#808080"></div>
<div style="position:absolute;left:331px;top:687px;width:9px;height:26px;background:#242424"></div>
<div style="position:absolute;left:340px;top:713px;width:1231px;height:27px;background:#444444"></div>
<div style="position:absolute;left:331px;top:713px;width:9px;height:27px;background:#242424"></div>
<div style="position:absolute;left:340px;top:740px;width:1231px;height:27px;background:#808080"></div>
<div style="position:absolute;left:331px;top:740px;width:9px;height:27px;background:#242424"></div>
<div style="position:absolute;left:340px;top:767px;width:1231px;height:26px;background:#444444"></div>
<div style="position:absolute;left:331px;top:767px;width:9px;height:26px;background:#242424"></div>
<div style="position:absolute;left:340px;top:793px;width:1231px;height:27px;background:#808080"></div>
<div style="position:absolute;left:331px;top:793px;width:9px;height:27px;background:#242424"></div>
<div style="position:absolute;left:340px;top:820px;width:1231px;height:26px;background:#444444"></div>
<div style="position:absolute;left:331px;top:820px;width:9px;height:26px;background:#242424"></div>
<div class="t" style="left:422.70px;top:637.77px;font-size:15px;line-height:15px;color:#ffffff;transform:scaleX(0.7);transform-origin:left 0;">White</div>
<div class="t" style="left:464.00px;top:637.77px;font-size:15px;line-height:15px;color:#ffffff;transform:scaleX(0.7);transform-origin:left 0;">Gray 80</div>
<div class="t" style="left:506.60px;top:637.77px;font-size:15px;line-height:15px;color:#ffffff;transform:scaleX(0.7);transform-origin:left 0;">Gray 65</div>
<div class="t" style="left:549.10px;top:637.77px;font-size:15px;line-height:15px;color:#ffffff;transform:scaleX(0.7);transform-origin:left 0;">Gray 50</div>
<div class="t" style="left:591.70px;top:637.77px;font-size:15px;line-height:15px;color:#ffffff;transform:scaleX(0.7);transform-origin:left 0;">Gray 35</div>
<div class="t" style="left:634.30px;top:637.77px;font-size:15px;line-height:15px;color:#ffffff;transform:scaleX(0.7);transform-origin:left 0;">Black</div>
<div class="t" style="left:665.10px;top:637.77px;font-size:15px;line-height:15px;color:#ffffff;transform:scaleX(0.7);transform-origin:left 0;">Dark Skin</div>
<div class="t" style="left:715.60px;top:637.77px;font-size:15px;line-height:15px;color:#ffffff;transform:scaleX(0.7);transform-origin:left 0;">Light Skin</div>
<div class="t" style="left:767.10px;top:637.77px;font-size:15px;line-height:15px;color:#ffffff;transform:scaleX(0.7);transform-origin:left 0;">Blue Sky</div>
<div class="t" style="left:813.20px;top:637.77px;font-size:15px;line-height:15px;color:#ffffff;transform:scaleX(0.7);transform-origin:left 0;">Foliage</div>
<div class="t" style="left:852.80px;top:637.77px;font-size:15px;line-height:15px;color:#ffffff;transform:scaleX(0.7);transform-origin:left 0;">Blue Flower</div>
<div class="t" style="left:915.40px;top:637.77px;font-size:15px;line-height:15px;color:#ffffff;transform:scaleX(0.7);transform-origin:left 0;">Bluish Green</div>
<div class="t" style="left:981.70px;top:637.77px;font-size:15px;line-height:15px;color:#ffffff;transform:scaleX(0.7);transform-origin:left 0;">Orange</div>
<div class="t" style="left:1022.60px;top:637.77px;font-size:15px;line-height:15px;color:#ffffff;transform:scaleX(0.7);transform-origin:left 0;">Purplish Blue</div>
<div class="t" style="left:1091.20px;top:637.77px;font-size:15px;line-height:15px;color:#ffffff;transform:scaleX(0.7);transform-origin:left 0;">Moderate Red</div>
<div class="t" style="left:1164.90px;top:637.77px;font-size:15px;line-height:15px;color:#ffffff;transform:scaleX(0.7);transform-origin:left 0;">Purple</div>
<div class="t" style="left:1202.00px;top:637.77px;font-size:15px;line-height:15px;color:#ffffff;transform:scaleX(0.7);transform-origin:left 0;">Yellow Green</div>
<div class="t" style="left:1270.70px;top:637.77px;font-size:15px;line-height:15px;color:#ffffff;transform:scaleX(0.7);transform-origin:left 0;">Orange Yellow</div>
<div class="t" style="left:1344.90px;top:637.77px;font-size:15px;line-height:15px;color:#ffffff;transform:scaleX(0.7);transform-origin:left 0;">Blue</div>
<div class="t" style="left:1379.50px;top:637.77px;font-size:15px;line-height:15px;color:#ffffff;transform:scaleX(0.7);transform-origin:left 0;">Green</div>
<div class="t" style="left:1414.90px;top:637.77px;font-size:15px;line-height:15px;color:#ffffff;transform:scaleX(0.7);transform-origin:left 0;">Red</div>
<div class="t" style="left:1449.70px;top:637.77px;font-size:15px;line-height:15px;color:#ffffff;transform:scaleX(0.7);transform-origin:left 0;">Yellow</div>
<div class="t" style="left:1490.80px;top:637.77px;font-size:15px;line-height:15px;color:#ffffff;transform:scaleX(0.7);transform-origin:left 0;">Magenta</div>
<div class="t" style="left:1539.30px;top:637.77px;font-size:15px;line-height:15px;color:#ffffff;transform:scaleX(0.7);transform-origin:left 0;">Cyan</div>
<div class="t" style="left:343.00px;top:666.92px;font-size:16px;line-height:16px;color:#f4f4f4;transform:scaleX(0.65);transform-origin:left 0;">x: CIE31</div>
<div class="t" style="left:422.70px;top:666.92px;font-size:16px;line-height:16px;color:#f4f4f4;transform:scaleX(0.685);transform-origin:left 0;">0,31</div>
<div class="t" style="left:464.00px;top:666.92px;font-size:16px;line-height:16px;color:#f4f4f4;transform:scaleX(0.685);transform-origin:left 0;">0,31</div>
<div class="t" style="left:506.60px;top:666.92px;font-size:16px;line-height:16px;color:#f4f4f4;transform:scaleX(0.685);transform-origin:left 0;">0,31</div>
<div class="t" style="left:549.10px;top:666.92px;font-size:16px;line-height:16px;color:#f4f4f4;transform:scaleX(0.685);transform-origin:left 0;">0,31</div>
<div class="t" style="left:591.70px;top:666.92px;font-size:16px;line-height:16px;color:#f4f4f4;transform:scaleX(0.685);transform-origin:left 0;">0,31</div>
<div class="t" style="left:634.30px;top:666.92px;font-size:16px;line-height:16px;color:#f4f4f4;transform:scaleX(0.685);transform-origin:left 0;">0,26</div>
<div class="t" style="left:665.10px;top:666.92px;font-size:16px;line-height:16px;color:#f4f4f4;transform:scaleX(0.685);transform-origin:left 0;">0,40</div>
<div class="t" style="left:715.60px;top:666.92px;font-size:16px;line-height:16px;color:#f4f4f4;transform:scaleX(0.685);transform-origin:left 0;">0,37</div>
<div class="t" style="left:767.10px;top:666.92px;font-size:16px;line-height:16px;color:#f4f4f4;transform:scaleX(0.685);transform-origin:left 0;">0,26</div>
<div class="t" style="left:813.20px;top:666.92px;font-size:16px;line-height:16px;color:#f4f4f4;transform:scaleX(0.685);transform-origin:left 0;">0,35</div>
<div class="t" style="left:852.80px;top:666.92px;font-size:16px;line-height:16px;color:#f4f4f4;transform:scaleX(0.685);transform-origin:left 0;">0,27</div>
<div class="t" style="left:915.40px;top:666.92px;font-size:16px;line-height:16px;color:#f4f4f4;transform:scaleX(0.685);transform-origin:left 0;">0,28</div>
<div class="t" style="left:981.70px;top:666.92px;font-size:16px;line-height:16px;color:#f4f4f4;transform:scaleX(0.685);transform-origin:left 0;">0,49</div>
<div class="t" style="left:1022.60px;top:666.92px;font-size:16px;line-height:16px;color:#f4f4f4;transform:scaleX(0.685);transform-origin:left 0;">0,22</div>
<div class="t" style="left:1091.20px;top:666.92px;font-size:16px;line-height:16px;color:#f4f4f4;transform:scaleX(0.685);transform-origin:left 0;">0,43</div>
<div class="t" style="left:1164.90px;top:666.92px;font-size:16px;line-height:16px;color:#f4f4f4;transform:scaleX(0.685);transform-origin:left 0;">0,28</div>
<div class="t" style="left:1202.00px;top:666.92px;font-size:16px;line-height:16px;color:#f4f4f4;transform:scaleX(0.685);transform-origin:left 0;">0,39</div>
<div class="t" style="left:1270.70px;top:666.92px;font-size:16px;line-height:16px;color:#f4f4f4;transform:scaleX(0.685);transform-origin:left 0;">0,46</div>
<div class="t" style="left:1344.90px;top:666.92px;font-size:16px;line-height:16px;color:#f4f4f4;transform:scaleX(0.685);transform-origin:left 0;">0,20</div>
<div class="t" style="left:1379.50px;top:666.92px;font-size:16px;line-height:16px;color:#f4f4f4;transform:scaleX(0.685);transform-origin:left 0;">0,34</div>
<div class="t" style="left:1414.90px;top:666.92px;font-size:16px;line-height:16px;color:#f4f4f4;transform:scaleX(0.685);transform-origin:left 0;">0,50</div>
<div class="t" style="left:1449.70px;top:666.92px;font-size:16px;line-height:16px;color:#f4f4f4;transform:scaleX(0.685);transform-origin:left 0;">0,45</div>
<div class="t" style="left:1490.80px;top:666.92px;font-size:16px;line-height:16px;color:#f4f4f4;transform:scaleX(0.685);transform-origin:left 0;">0,34</div>
<div class="t" style="left:1539.30px;top:666.92px;font-size:16px;line-height:16px;color:#f4f4f4;transform:scaleX(0.685);transform-origin:left 0;">0,23</div>
<div class="t" style="left:343.00px;top:693.92px;font-size:16px;line-height:16px;color:#f4f4f4;transform:scaleX(0.65);transform-origin:left 0;">y: CIE31</div>
<div class="t" style="left:422.70px;top:693.92px;font-size:16px;line-height:16px;color:#f4f4f4;transform:scaleX(0.685);transform-origin:left 0;">0,33</div>
<div class="t" style="left:464.00px;top:693.92px;font-size:16px;line-height:16px;color:#f4f4f4;transform:scaleX(0.685);transform-origin:left 0;">0,33</div>
<div class="t" style="left:506.60px;top:693.92px;font-size:16px;line-height:16px;color:#f4f4f4;transform:scaleX(0.685);transform-origin:left 0;">0,33</div>
<div class="t" style="left:549.10px;top:693.92px;font-size:16px;line-height:16px;color:#f4f4f4;transform:scaleX(0.685);transform-origin:left 0;">0,33</div>
<div class="t" style="left:591.70px;top:693.92px;font-size:16px;line-height:16px;color:#f4f4f4;transform:scaleX(0.685);transform-origin:left 0;">0,33</div>
<div class="t" style="left:634.30px;top:693.92px;font-size:16px;line-height:16px;color:#f4f4f4;transform:scaleX(0.685);transform-origin:left 0;">0,28</div>
<div class="t" style="left:665.10px;top:693.92px;font-size:16px;line-height:16px;color:#f4f4f4;transform:scaleX(0.685);transform-origin:left 0;">0,37</div>
<div class="t" style="left:715.60px;top:693.92px;font-size:16px;line-height:16px;color:#f4f4f4;transform:scaleX(0.685);transform-origin:left 0;">0,36</div>
<div class="t" style="left:767.10px;top:693.92px;font-size:16px;line-height:16px;color:#f4f4f4;transform:scaleX(0.685);transform-origin:left 0;">0,28</div>
<div class="t" style="left:813.20px;top:693.92px;font-size:16px;line-height:16px;color:#f4f4f4;transform:scaleX(0.685);transform-origin:left 0;">0,43</div>
<div class="t" style="left:852.80px;top:693.92px;font-size:16px;line-height:16px;color:#f4f4f4;transform:scaleX(0.685);transform-origin:left 0;">0,28</div>
<div class="t" style="left:915.40px;top:693.92px;font-size:16px;line-height:16px;color:#f4f4f4;transform:scaleX(0.685);transform-origin:left 0;">0,36</div>
<div class="t" style="left:981.70px;top:693.92px;font-size:16px;line-height:16px;color:#f4f4f4;transform:scaleX(0.685);transform-origin:left 0;">0,41</div>
<div class="t" style="left:1022.60px;top:693.92px;font-size:16px;line-height:16px;color:#f4f4f4;transform:scaleX(0.685);transform-origin:left 0;">0,22</div>
<div class="t" style="left:1091.20px;top:693.92px;font-size:16px;line-height:16px;color:#f4f4f4;transform:scaleX(0.685);transform-origin:left 0;">0,33</div>
<div class="t" style="left:1164.90px;top:693.92px;font-size:16px;line-height:16px;color:#f4f4f4;transform:scaleX(0.685);transform-origin:left 0;">0,24</div>
<div class="t" style="left:1202.00px;top:693.92px;font-size:16px;line-height:16px;color:#f4f4f4;transform:scaleX(0.685);transform-origin:left 0;">0,48</div>
<div class="t" style="left:1270.70px;top:693.92px;font-size:16px;line-height:16px;color:#f4f4f4;transform:scaleX(0.685);transform-origin:left 0;">0,44</div>
<div class="t" style="left:1344.90px;top:693.92px;font-size:16px;line-height:16px;color:#f4f4f4;transform:scaleX(0.685);transform-origin:left 0;">0,18</div>
<div class="t" style="left:1379.50px;top:693.92px;font-size:16px;line-height:16px;color:#f4f4f4;transform:scaleX(0.685);transform-origin:left 0;">0,48</div>
<div class="t" style="left:1414.90px;top:693.92px;font-size:16px;line-height:16px;color:#f4f4f4;transform:scaleX(0.685);transform-origin:left 0;">0,33</div>
<div class="t" style="left:1449.70px;top:693.92px;font-size:16px;line-height:16px;color:#f4f4f4;transform:scaleX(0.685);transform-origin:left 0;">0,47</div>
<div class="t" style="left:1490.80px;top:693.92px;font-size:16px;line-height:16px;color:#f4f4f4;transform:scaleX(0.685);transform-origin:left 0;">0,27</div>
<div class="t" style="left:1539.30px;top:693.92px;font-size:16px;line-height:16px;color:#f4f4f4;transform:scaleX(0.685);transform-origin:left 0;">0,29</div>
<div class="t" style="left:343.00px;top:719.92px;font-size:16px;line-height:16px;color:#f4f4f4;transform:scaleX(0.65);transform-origin:left 0;">Y</div>
<div class="t" style="left:422.70px;top:719.92px;font-size:16px;line-height:16px;color:#f4f4f4;transform:scaleX(0.685);transform-origin:left 0;">273,28</div>
<div class="t" style="left:464.00px;top:719.92px;font-size:16px;line-height:16px;color:#f4f4f4;transform:scaleX(0.685);transform-origin:left 0;">217,72</div>
<div class="t" style="left:506.60px;top:719.92px;font-size:16px;line-height:16px;color:#f4f4f4;transform:scaleX(0.685);transform-origin:left 0;">174,66</div>
<div class="t" style="left:549.10px;top:719.92px;font-size:16px;line-height:16px;color:#f4f4f4;transform:scaleX(0.685);transform-origin:left 0;">132,98</div>
<div class="t" style="left:591.70px;top:719.92px;font-size:16px;line-height:16px;color:#f4f4f4;transform:scaleX(0.685);transform-origin:left 0;">95,58</div>
<div class="t" style="left:634.30px;top:719.92px;font-size:16px;line-height:16px;color:#f4f4f4;transform:scaleX(0.685);transform-origin:left 0;">0,23</div>
<div class="t" style="left:665.10px;top:719.92px;font-size:16px;line-height:16px;color:#f4f4f4;transform:scaleX(0.685);transform-origin:left 0;">26,20</div>
<div class="t" style="left:715.60px;top:719.92px;font-size:16px;line-height:16px;color:#f4f4f4;transform:scaleX(0.685);transform-origin:left 0;">94,82</div>
<div class="t" style="left:767.10px;top:719.92px;font-size:16px;line-height:16px;color:#f4f4f4;transform:scaleX(0.685);transform-origin:left 0;">56,43</div>
<div class="t" style="left:813.20px;top:719.92px;font-size:16px;line-height:16px;color:#f4f4f4;transform:scaleX(0.685);transform-origin:left 0;">33,46</div>
<div class="t" style="left:852.80px;top:719.92px;font-size:16px;line-height:16px;color:#f4f4f4;transform:scaleX(0.685);transform-origin:left 0;">71,84</div>
<div class="t" style="left:915.40px;top:719.92px;font-size:16px;line-height:16px;color:#f4f4f4;transform:scaleX(0.685);transform-origin:left 0;">110,83</div>
<div class="t" style="left:981.70px;top:719.92px;font-size:16px;line-height:16px;color:#f4f4f4;transform:scaleX(0.685);transform-origin:left 0;">73,88</div>
<div class="t" style="left:1022.60px;top:719.92px;font-size:16px;line-height:16px;color:#f4f4f4;transform:scaleX(0.685);transform-origin:left 0;">38,45</div>
<div class="t" style="left:1091.20px;top:719.92px;font-size:16px;line-height:16px;color:#f4f4f4;transform:scaleX(0.685);transform-origin:left 0;">50,53</div>
<div class="t" style="left:1164.90px;top:719.92px;font-size:16px;line-height:16px;color:#f4f4f4;transform:scaleX(0.685);transform-origin:left 0;">19,89</div>
<div class="t" style="left:1202.00px;top:719.92px;font-size:16px;line-height:16px;color:#f4f4f4;transform:scaleX(0.685);transform-origin:left 0;">104,93</div>
<div class="t" style="left:1270.70px;top:719.92px;font-size:16px;line-height:16px;color:#f4f4f4;transform:scaleX(0.685);transform-origin:left 0;">108,28</div>
<div class="t" style="left:1344.90px;top:719.92px;font-size:16px;line-height:16px;color:#f4f4f4;transform:scaleX(0.685);transform-origin:left 0;">22,59</div>
<div class="t" style="left:1379.50px;top:719.92px;font-size:16px;line-height:16px;color:#f4f4f4;transform:scaleX(0.685);transform-origin:left 0;">57,89</div>
<div class="t" style="left:1414.90px;top:719.92px;font-size:16px;line-height:16px;color:#f4f4f4;transform:scaleX(0.685);transform-origin:left 0;">30,35</div>
<div class="t" style="left:1449.70px;top:719.92px;font-size:16px;line-height:16px;color:#f4f4f4;transform:scaleX(0.685);transform-origin:left 0;">145,80</div>
<div class="t" style="left:1490.80px;top:719.92px;font-size:16px;line-height:16px;color:#f4f4f4;transform:scaleX(0.685);transform-origin:left 0;">55,66</div>
<div class="t" style="left:1539.30px;top:719.92px;font-size:16px;line-height:16px;color:#f4f4f4;transform:scaleX(0.685);transform-origin:left 0;">57,80</div>
<div class="t" style="left:343.00px;top:746.92px;font-size:16px;line-height:16px;color:#f4f4f4;transform:scaleX(0.65);transform-origin:left 0;">Target x:CIE31</div>
<div class="t" style="left:422.70px;top:746.92px;font-size:16px;line-height:16px;color:#f4f4f4;transform:scaleX(0.685);transform-origin:left 0;">0,31</div>
<div class="t" style="left:464.00px;top:746.92px;font-size:16px;line-height:16px;color:#f4f4f4;transform:scaleX(0.685);transform-origin:left 0;">0,31</div>
<div class="t" style="left:506.60px;top:746.92px;font-size:16px;line-height:16px;color:#f4f4f4;transform:scaleX(0.685);transform-origin:left 0;">0,31</div>
<div class="t" style="left:549.10px;top:746.92px;font-size:16px;line-height:16px;color:#f4f4f4;transform:scaleX(0.685);transform-origin:left 0;">0,31</div>
<div class="t" style="left:591.70px;top:746.92px;font-size:16px;line-height:16px;color:#f4f4f4;transform:scaleX(0.685);transform-origin:left 0;">0,31</div>
<div class="t" style="left:634.30px;top:746.92px;font-size:16px;line-height:16px;color:#f4f4f4;transform:scaleX(0.685);transform-origin:left 0;">0,31</div>
<div class="t" style="left:665.10px;top:746.92px;font-size:16px;line-height:16px;color:#f4f4f4;transform:scaleX(0.685);transform-origin:left 0;">0,40</div>
<div class="t" style="left:715.60px;top:746.92px;font-size:16px;line-height:16px;color:#f4f4f4;transform:scaleX(0.685);transform-origin:left 0;">0,38</div>
<div class="t" style="left:767.10px;top:746.92px;font-size:16px;line-height:16px;color:#f4f4f4;transform:scaleX(0.685);transform-origin:left 0;">0,25</div>
<div class="t" style="left:813.20px;top:746.92px;font-size:16px;line-height:16px;color:#f4f4f4;transform:scaleX(0.685);transform-origin:left 0;">0,34</div>
<div class="t" style="left:852.80px;top:746.92px;font-size:16px;line-height:16px;color:#f4f4f4;transform:scaleX(0.685);transform-origin:left 0;">0,27</div>
<div class="t" style="left:915.40px;top:746.92px;font-size:16px;line-height:16px;color:#f4f4f4;transform:scaleX(0.685);transform-origin:left 0;">0,26</div>
<div class="t" style="left:981.70px;top:746.92px;font-size:16px;line-height:16px;color:#f4f4f4;transform:scaleX(0.685);transform-origin:left 0;">0,51</div>
<div class="t" style="left:1022.60px;top:746.92px;font-size:16px;line-height:16px;color:#f4f4f4;transform:scaleX(0.685);transform-origin:left 0;">0,22</div>
<div class="t" style="left:1091.20px;top:746.92px;font-size:16px;line-height:16px;color:#f4f4f4;transform:scaleX(0.685);transform-origin:left 0;">0,46</div>
<div class="t" style="left:1164.90px;top:746.92px;font-size:16px;line-height:16px;color:#f4f4f4;transform:scaleX(0.685);transform-origin:left 0;">0,29</div>
<div class="t" style="left:1202.00px;top:746.92px;font-size:16px;line-height:16px;color:#f4f4f4;transform:scaleX(0.685);transform-origin:left 0;">0,38</div>
<div class="t" style="left:1270.70px;top:746.92px;font-size:16px;line-height:16px;color:#f4f4f4;transform:scaleX(0.685);transform-origin:left 0;">0,47</div>
<div class="t" style="left:1344.90px;top:746.92px;font-size:16px;line-height:16px;color:#f4f4f4;transform:scaleX(0.685);transform-origin:left 0;">0,19</div>
<div class="t" style="left:1379.50px;top:746.92px;font-size:16px;line-height:16px;color:#f4f4f4;transform:scaleX(0.685);transform-origin:left 0;">0,31</div>
<div class="t" style="left:1414.90px;top:746.92px;font-size:16px;line-height:16px;color:#f4f4f4;transform:scaleX(0.685);transform-origin:left 0;">0,54</div>
<div class="t" style="left:1449.70px;top:746.92px;font-size:16px;line-height:16px;color:#f4f4f4;transform:scaleX(0.685);transform-origin:left 0;">0,45</div>
<div class="t" style="left:1490.80px;top:746.92px;font-size:16px;line-height:16px;color:#f4f4f4;transform:scaleX(0.685);transform-origin:left 0;">0,37</div>
<div class="t" style="left:1539.30px;top:746.92px;font-size:16px;line-height:16px;color:#f4f4f4;transform:scaleX(0.685);transform-origin:left 0;">0,21</div>
<div class="t" style="left:343.00px;top:773.92px;font-size:16px;line-height:16px;color:#f4f4f4;transform:scaleX(0.65);transform-origin:left 0;">Target y:CIE31</div>
<div class="t" style="left:422.70px;top:773.92px;font-size:16px;line-height:16px;color:#f4f4f4;transform:scaleX(0.685);transform-origin:left 0;">0,33</div>
<div class="t" style="left:464.00px;top:773.92px;font-size:16px;line-height:16px;color:#f4f4f4;transform:scaleX(0.685);transform-origin:left 0;">0,33</div>
<div class="t" style="left:506.60px;top:773.92px;font-size:16px;line-height:16px;color:#f4f4f4;transform:scaleX(0.685);transform-origin:left 0;">0,33</div>
<div class="t" style="left:549.10px;top:773.92px;font-size:16px;line-height:16px;color:#f4f4f4;transform:scaleX(0.685);transform-origin:left 0;">0,33</div>
<div class="t" style="left:591.70px;top:773.92px;font-size:16px;line-height:16px;color:#f4f4f4;transform:scaleX(0.685);transform-origin:left 0;">0,33</div>
<div class="t" style="left:634.30px;top:773.92px;font-size:16px;line-height:16px;color:#f4f4f4;transform:scaleX(0.685);transform-origin:left 0;">0,33</div>
<div class="t" style="left:665.10px;top:773.92px;font-size:16px;line-height:16px;color:#f4f4f4;transform:scaleX(0.685);transform-origin:left 0;">0,36</div>
<div class="t" style="left:715.60px;top:773.92px;font-size:16px;line-height:16px;color:#f4f4f4;transform:scaleX(0.685);transform-origin:left 0;">0,36</div>
<div class="t" style="left:767.10px;top:773.92px;font-size:16px;line-height:16px;color:#f4f4f4;transform:scaleX(0.685);transform-origin:left 0;">0,27</div>
<div class="t" style="left:813.20px;top:773.92px;font-size:16px;line-height:16px;color:#f4f4f4;transform:scaleX(0.685);transform-origin:left 0;">0,43</div>
<div class="t" style="left:852.80px;top:773.92px;font-size:16px;line-height:16px;color:#f4f4f4;transform:scaleX(0.685);transform-origin:left 0;">0,25</div>
<div class="t" style="left:915.40px;top:773.92px;font-size:16px;line-height:16px;color:#f4f4f4;transform:scaleX(0.685);transform-origin:left 0;">0,36</div>
<div class="t" style="left:981.70px;top:773.92px;font-size:16px;line-height:16px;color:#f4f4f4;transform:scaleX(0.685);transform-origin:left 0;">0,41</div>
<div class="t" style="left:1022.60px;top:773.92px;font-size:16px;line-height:16px;color:#f4f4f4;transform:scaleX(0.685);transform-origin:left 0;">0,19</div>
<div class="t" style="left:1091.20px;top:773.92px;font-size:16px;line-height:16px;color:#f4f4f4;transform:scaleX(0.685);transform-origin:left 0;">0,31</div>
<div class="t" style="left:1164.90px;top:773.92px;font-size:16px;line-height:16px;color:#f4f4f4;transform:scaleX(0.685);transform-origin:left 0;">0,22</div>
<div class="t" style="left:1202.00px;top:773.92px;font-size:16px;line-height:16px;color:#f4f4f4;transform:scaleX(0.685);transform-origin:left 0;">0,49</div>
<div class="t" style="left:1270.70px;top:773.92px;font-size:16px;line-height:16px;color:#f4f4f4;transform:scaleX(0.685);transform-origin:left 0;">0,44</div>
<div class="t" style="left:1344.90px;top:773.92px;font-size:16px;line-height:16px;color:#f4f4f4;transform:scaleX(0.685);transform-origin:left 0;">0,14</div>
<div class="t" style="left:1379.50px;top:773.92px;font-size:16px;line-height:16px;color:#f4f4f4;transform:scaleX(0.685);transform-origin:left 0;">0,49</div>
<div class="t" style="left:1414.90px;top:773.92px;font-size:16px;line-height:16px;color:#f4f4f4;transform:scaleX(0.685);transform-origin:left 0;">0,32</div>
<div class="t" style="left:1449.70px;top:773.92px;font-size:16px;line-height:16px;color:#f4f4f4;transform:scaleX(0.685);transform-origin:left 0;">0,47</div>
<div class="t" style="left:1490.80px;top:773.92px;font-size:16px;line-height:16px;color:#f4f4f4;transform:scaleX(0.685);transform-origin:left 0;">0,25</div>
<div class="t" style="left:1539.30px;top:773.92px;font-size:16px;line-height:16px;color:#f4f4f4;transform:scaleX(0.685);transform-origin:left 0;">0,27</div>
<div class="t" style="left:343.00px;top:799.92px;font-size:16px;line-height:16px;color:#f4f4f4;transform:scaleX(0.65);transform-origin:left 0;">Target Y</div>
<div class="t" style="left:422.70px;top:799.92px;font-size:16px;line-height:16px;color:#f4f4f4;transform:scaleX(0.685);transform-origin:left 0;">273,28</div>
<div class="t" style="left:464.00px;top:799.92px;font-size:16px;line-height:16px;color:#f4f4f4;transform:scaleX(0.685);transform-origin:left 0;">216,24</div>
<div class="t" style="left:506.60px;top:799.92px;font-size:16px;line-height:16px;color:#f4f4f4;transform:scaleX(0.685);transform-origin:left 0;">174,24</div>
<div class="t" style="left:549.10px;top:799.92px;font-size:16px;line-height:16px;color:#f4f4f4;transform:scaleX(0.685);transform-origin:left 0;">134,18</div>
<div class="t" style="left:591.70px;top:799.92px;font-size:16px;line-height:16px;color:#f4f4f4;transform:scaleX(0.685);transform-origin:left 0;">93,44</div>
<div class="t" style="left:634.30px;top:799.92px;font-size:16px;line-height:16px;color:#f4f4f4;transform:scaleX(0.685);transform-origin:left 0;">0,00</div>
<div class="t" style="left:665.10px;top:799.92px;font-size:16px;line-height:16px;color:#f4f4f4;transform:scaleX(0.685);transform-origin:left 0;">27,53</div>
<div class="t" style="left:715.60px;top:799.92px;font-size:16px;line-height:16px;color:#f4f4f4;transform:scaleX(0.685);transform-origin:left 0;">95,36</div>
<div class="t" style="left:767.10px;top:799.92px;font-size:16px;line-height:16px;color:#f4f4f4;transform:scaleX(0.685);transform-origin:left 0;">51,10</div>
<div class="t" style="left:813.20px;top:799.92px;font-size:16px;line-height:16px;color:#f4f4f4;transform:scaleX(0.685);transform-origin:left 0;">35,61</div>
<div class="t" style="left:852.80px;top:799.92px;font-size:16px;line-height:16px;color:#f4f4f4;transform:scaleX(0.685);transform-origin:left 0;">63,72</div>
<div class="t" style="left:915.40px;top:799.92px;font-size:16px;line-height:16px;color:#f4f4f4;transform:scaleX(0.685);transform-origin:left 0;">114,43</div>
<div class="t" style="left:981.70px;top:799.92px;font-size:16px;line-height:16px;color:#f4f4f4;transform:scaleX(0.685);transform-origin:left 0;">77,47</div>
<div class="t" style="left:1022.60px;top:799.92px;font-size:16px;line-height:16px;color:#f4f4f4;transform:scaleX(0.685);transform-origin:left 0;">32,12</div>
<div class="t" style="left:1091.20px;top:799.92px;font-size:16px;line-height:16px;color:#f4f4f4;transform:scaleX(0.685);transform-origin:left 0;">51,04</div>
<div class="t" style="left:1164.90px;top:799.92px;font-size:16px;line-height:16px;color:#f4f4f4;transform:scaleX(0.685);transform-origin:left 0;">18,24</div>
<div class="t" style="left:1202.00px;top:799.92px;font-size:16px;line-height:16px;color:#f4f4f4;transform:scaleX(0.685);transform-origin:left 0;">116,84</div>
<div class="t" style="left:1270.70px;top:799.92px;font-size:16px;line-height:16px;color:#f4f4f4;transform:scaleX(0.685);transform-origin:left 0;">116,18</div>
<div class="t" style="left:1344.90px;top:799.92px;font-size:16px;line-height:16px;color:#f4f4f4;transform:scaleX(0.685);transform-origin:left 0;">17,06</div>
<div class="t" style="left:1379.50px;top:799.92px;font-size:16px;line-height:16px;color:#f4f4f4;transform:scaleX(0.685);transform-origin:left 0;">62,78</div>
<div class="t" style="left:1414.90px;top:799.92px;font-size:16px;line-height:16px;color:#f4f4f4;transform:scaleX(0.685);transform-origin:left 0;">31,87</div>
<div class="t" style="left:1449.70px;top:799.92px;font-size:16px;line-height:16px;color:#f4f4f4;transform:scaleX(0.685);transform-origin:left 0;">161,13</div>
<div class="t" style="left:1490.80px;top:799.92px;font-size:16px;line-height:16px;color:#f4f4f4;transform:scaleX(0.685);transform-origin:left 0;">51,45</div>
<div class="t" style="left:1539.30px;top:799.92px;font-size:16px;line-height:16px;color:#f4f4f4;transform:scaleX(0.685);transform-origin:left 0;">53,06</div>
<div class="t" style="left:343.00px;top:826.92px;font-size:16px;line-height:16px;color:#f4f4f4;transform:scaleX(0.65);transform-origin:left 0;">ΔE 2000</div>
<div class="t" style="left:422.70px;top:826.92px;font-size:16px;line-height:16px;color:#f4f4f4;transform:scaleX(0.685);transform-origin:left 0;">2,44</div>
<div class="t" style="left:464.00px;top:826.92px;font-size:16px;line-height:16px;color:#f4f4f4;transform:scaleX(0.685);transform-origin:left 0;">2,94</div>
<div class="t" style="left:506.60px;top:826.92px;font-size:16px;line-height:16px;color:#f4f4f4;transform:scaleX(0.685);transform-origin:left 0;">2,95</div>
<div class="t" style="left:549.10px;top:826.92px;font-size:16px;line-height:16px;color:#f4f4f4;transform:scaleX(0.685);transform-origin:left 0;">2,92</div>
<div class="t" style="left:591.70px;top:826.92px;font-size:16px;line-height:16px;color:#f4f4f4;transform:scaleX(0.685);transform-origin:left 0;">2,75</div>
<div class="t" style="left:634.30px;top:826.92px;font-size:16px;line-height:16px;color:#f4f4f4;transform:scaleX(0.685);transform-origin:left 0;">0,82</div>
<div class="t" style="left:665.10px;top:826.92px;font-size:16px;line-height:16px;color:#f4f4f4;transform:scaleX(0.685);transform-origin:left 0;">2,47</div>
<div class="t" style="left:715.60px;top:826.92px;font-size:16px;line-height:16px;color:#f4f4f4;transform:scaleX(0.685);transform-origin:left 0;">4,65</div>
<div class="t" style="left:767.10px;top:826.92px;font-size:16px;line-height:16px;color:#f4f4f4;transform:scaleX(0.685);transform-origin:left 0;">4,57</div>
<div class="t" style="left:813.20px;top:826.92px;font-size:16px;line-height:16px;color:#f4f4f4;transform:scaleX(0.685);transform-origin:left 0;">3,16</div>
<div class="t" style="left:852.80px;top:826.92px;font-size:16px;line-height:16px;color:#f4f4f4;transform:scaleX(0.685);transform-origin:left 0;">6,08</div>
<div class="t" style="left:915.40px;top:826.92px;font-size:16px;line-height:16px;color:#f4f4f4;transform:scaleX(0.685);transform-origin:left 0;">4,64</div>
<div class="t" style="left:981.70px;top:826.92px;font-size:16px;line-height:16px;color:#f4f4f4;transform:scaleX(0.685);transform-origin:left 0;">4,30</div>
<div class="t" style="left:1022.60px;top:826.92px;font-size:16px;line-height:16px;color:#f4f4f4;transform:scaleX(0.685);transform-origin:left 0;">5,51</div>
<div class="t" style="left:1091.20px;top:826.92px;font-size:16px;line-height:16px;color:#f4f4f4;transform:scaleX(0.685);transform-origin:left 0;">5,02</div>
<div class="t" style="left:1164.90px;top:826.92px;font-size:16px;line-height:16px;color:#f4f4f4;transform:scaleX(0.685);transform-origin:left 0;">5,37</div>
<div class="t" style="left:1202.00px;top:826.92px;font-size:16px;line-height:16px;color:#f4f4f4;transform:scaleX(0.685);transform-origin:left 0;">5,42</div>
<div class="t" style="left:1270.70px;top:826.92px;font-size:16px;line-height:16px;color:#f4f4f4;transform:scaleX(0.685);transform-origin:left 0;">2,59</div>
<div class="t" style="left:1344.90px;top:826.92px;font-size:16px;line-height:16px;color:#f4f4f4;transform:scaleX(0.685);transform-origin:left 0;">7,76</div>
<div class="t" style="left:1379.50px;top:826.92px;font-size:16px;line-height:16px;color:#f4f4f4;transform:scaleX(0.685);transform-origin:left 0;">5,44</div>
<div class="t" style="left:1414.90px;top:826.92px;font-size:16px;line-height:16px;color:#f4f4f4;transform:scaleX(0.685);transform-origin:left 0;">4,51</div>
<div class="t" style="left:1449.70px;top:826.92px;font-size:16px;line-height:16px;color:#f4f4f4;transform:scaleX(0.685);transform-origin:left 0;">2,89</div>
<div class="t" style="left:1490.80px;top:826.92px;font-size:16px;line-height:16px;color:#f4f4f4;transform:scaleX(0.685);transform-origin:left 0;">6,45</div>
<div class="t" style="left:1539.30px;top:826.92px;font-size:16px;line-height:16px;color:#f4f4f4;transform:scaleX(0.685);transform-origin:left 0;">3,44</div>
<div class="t" style="left:14.30px;top:651.05px;font-size:30px;line-height:30px;color:#f0f0f0;transform:scaleX(1.03);transform-origin:left 0;">Current Reading</div>
<div class="t" style="left:14.00px;top:698.42px;font-size:25px;line-height:25px;color:#f0f0f0;transform:scaleX(1.03);transform-origin:left 0;">x: 0,2295</div>
<div class="t" style="left:14.00px;top:740.02px;font-size:25px;line-height:25px;color:#f0f0f0;transform:scaleX(1.03);transform-origin:left 0;">y: 0,2866</div>
<div class="t" style="left:15.00px;top:782.12px;font-size:25px;line-height:25px;color:#f0f0f0;transform:scaleX(1.03);transform-origin:left 0;">fL: 16,868</div>
<div class="t" style="left:14.00px;top:824.23px;font-size:25px;line-height:25px;color:#f0f0f0;transform:scaleX(1.07);transform-origin:left 0;">cd/m²: 57,796</div>
<svg width="1717" height="888"><defs><clipPath id="loc"><polygon points="1188.9,576.0 1188.9,576.0 1188.8,576.0 1188.8,576.0 1188.8,576.0 1188.8,576.0 1188.7,576.1 1188.7,576.1 1188.6,576.1 1188.6,576.1 1188.6,576.1 1188.5,576.1 1188.5,576.1 1188.4,576.1 1188.4,576.1 1188.3,576.1 1188.2,576.1 1188.2,576.2 1188.1,576.2 1188.1,576.2 1188.0,576.1 1187.9,576.1 1187.9,576.1 1187.8,576.1 1187.7,576.1 1187.6,576.2 1187.5,576.2 1187.4,576.2 1187.3,576.1 1187.2,576.1 1187.1,576.1 1186.9,576.0 1186.8,576.0 1186.6,575.9 1186.4,575.8 1186.1,575.7 1185.9,575.6 1185.7,575.4 1185.4,575.3 1185.1,575.1 1184.8,574.9 1184.5,574.7 1184.1,574.4 1183.7,574.2 1183.3,573.9 1182.8,573.6 1182.4,573.3 1181.9,572.9 1181.3,572.5 1180.7,572.1 1180.1,571.7 1179.5,571.3 1178.8,570.8 1178.0,570.3 1177.1,569.7 1176.2,569.1 1175.3,568.5 1174.3,567.8 1173.2,567.1 1172.1,566.4 1170.9,565.5 1169.6,564.6 1168.3,563.6 1166.9,562.6 1165.5,561.4 1163.9,560.1 1162.4,558.7 1160.7,557.2 1158.9,555.3 1156.9,553.1 1154.7,550.7 1152.4,547.9 1150.0,544.7 1147.4,541.1 1144.7,537.1 1141.8,532.6 1138.7,527.4 1135.4,521.6 1132.0,515.3 1128.3,508.2 1124.5,500.2 1120.3,491.4 1115.9,481.8 1111.4,471.3 1106.9,459.8 1102.4,447.2 1097.8,433.6 1093.3,419.1 1088.8,403.8 1084.3,387.4 1079.9,370.0 1075.6,352.0 1071.8,333.9 1068.2,315.4 1065.0,296.5 1062.1,277.6 1059.9,259.2 1058.2,241.2 1057.0,223.5 1056.4,206.3 1056.5,190.0 1057.4,174.5 1059.0,159.7 1061.3,145.9 1064.3,133.4 1068.2,122.2 1072.8,112.3 1078.0,103.7 1083.7,96.7 1090.0,91.4 1096.8,87.6 1104.0,85.2 1111.3,83.7 1118.8,83.4 1126.5,84.4 1134.4,86.2 1142.3,88.2 1150.2,90.7 1158.1,93.6 1166.0,96.9 1173.8,100.3 1181.4,103.7 1188.8,107.3 1196.2,110.9 1203.5,114.7 1210.7,118.6 1217.8,122.6 1224.9,126.7 1232.0,130.9 1239.1,135.3 1246.1,139.7 1253.2,144.2 1260.2,148.8 1267.1,153.4 1274.1,158.1 1281.0,162.9 1288.0,167.8 1294.9,172.7 1301.9,177.6 1308.8,182.6 1315.8,187.6 1322.7,192.7 1329.7,197.8 1336.6,202.9 1343.6,208.0 1350.5,213.2 1357.4,218.4 1364.4,223.6 1371.3,228.8 1378.2,234.0 1385.1,239.2 1391.9,244.3 1398.8,249.5 1405.6,254.7 1412.4,259.8 1419.1,264.9 1425.8,270.0 1432.4,275.0 1439.0,280.1 1445.5,285.0 1452.0,290.0 1458.4,294.8 1464.7,299.6 1470.9,304.4 1477.1,309.1 1483.1,313.7 1489.1,318.2 1495.0,322.7 1500.7,327.0 1506.3,331.3 1511.8,335.5 1517.1,339.6 1522.3,343.5 1527.2,347.2 1531.9,350.9 1536.5,354.3 1541.0,357.7 1545.3,361.0 1549.5,364.2 1553.6,367.3 1557.5,370.3 1561.2,373.0 1564.7,375.7 1568.0,378.2 1571.2,380.6 1574.2,382.9 1577.0,385.1 1579.7,387.1 1582.3,389.1 1584.7,390.9 1587.0,392.7 1589.1,394.3 1591.1,395.9 1593.1,397.3 1594.9,398.7 1596.6,400.0 1598.2,401.2 1599.8,402.4 1601.2,403.5 1602.6,404.5 1603.9,405.6 1605.2,406.5 1606.4,407.4 1607.5,408.3 1608.6,409.2 1609.7,410.0 1610.7,410.7 1611.6,411.5 1612.5,412.1 1613.4,412.8 1614.2,413.4 1614.9,413.9 1615.6,414.5 1616.3,414.9 1616.8,415.3 1617.3,415.8 1618.0,416.2 1618.7,416.8 1619.5,417.4 1620.3,418.0 1621.1,418.6 1621.8,419.2 1622.5,419.7 1623.2,420.2 1623.7,420.6 1624.1,420.9 1624.4,421.2 1624.6,421.3 1624.7,421.4"/></clipPath><radialGradient id="i0" gradientUnits="userSpaceOnUse" cx="1296.6" cy="383.6" r="380"><stop offset="0.0008" stop-color="#fffefe"/><stop offset="0.0753" stop-color="#ff9ea0"/><stop offset="0.1882" stop-color="#ff575b"/><stop offset="0.3137" stop-color="#ff2e33"/><stop offset="0.4706" stop-color="#ff1217"/><stop offset="0.6274" stop-color="#ff0006"/></radialGradient><radialGradient id="o0" gradientUnits="userSpaceOnUse" cx="1296.6" cy="383.6" r="380"><stop offset="0.6275" stop-color="#990004"/><stop offset="0.6722" stop-color="#990001"/><stop offset="0.7392" stop-color="#990000"/><stop offset="0.8324" stop-color="#990000"/><stop offset="1.0000" stop-color="#990000"/></radialGradient><radialGradient id="i1" gradientUnits="userSpaceOnUse" cx="1296.6" cy="383.6" r="380"><stop offset="0.0008" stop-color="#fffefe"/><stop offset="0.0676" stop-color="#ffa2a8"/><stop offset="0.1689" stop-color="#ff5b66"/><stop offset="0.2815" stop-color="#ff313e"/><stop offset="0.4223" stop-color="#ff1322"/><stop offset="0.5630" stop-color="#ff0011"/></radialGradient><radialGradient id="o1" gradientUnits="userSpaceOnUse" cx="1296.6" cy="383.6" r="380"><stop offset="0.5631" stop-color="#99000a"/><stop offset="0.6155" stop-color="#990007"/><stop offset="0.6941" stop-color="#990003"/><stop offset="0.8034" stop-color="#990000"/><stop offset="1.0000" stop-color="#990000"/></radialGradient><radialGradient id="i2" gradientUnits="userSpaceOnUse" cx="1296.6" cy="383.6" r="380"><stop offset="0.0008" stop-color="#fffefe"/><stop offset="0.0614" stop-color="#ffa6af"/><stop offset="0.1536" stop-color="#ff5f6f"/><stop offset="0.2559" stop-color="#ff3349"/><stop offset="0.3839" stop-color="#ff142c"/><stop offset="0.5118" stop-color="#ff001a"/></radialGradient><radialGradient id="o2" gradientUnits="userSpaceOnUse" cx="1296.6" cy="383.6" r="380"><stop offset="0.5119" stop-color="#990010"/><stop offset="0.5705" stop-color="#99000c"/><stop offset="0.6583" stop-color="#990008"/><stop offset="0.7804" stop-color="#990003"/><stop offset="1.0000" stop-color="#990000"/></radialGradient><radialGradient id="i3" gradientUnits="userSpaceOnUse" cx="1296.6" cy="383.6" r="380"><stop offset="0.0008" stop-color="#fffdfe"/><stop offset="0.0565" stop-color="#ffa9b5"/><stop offset="0.1411" stop-color="#ff6278"/><stop offset="0.2352" stop-color="#ff3652"/><stop offset="0.3528" stop-color="#ff1536"/><stop offset="0.4704" stop-color="#ff0024"/></radialGradient><radialGradient id="o3" gradientUnits="userSpaceOnUse" cx="1296.6" cy="383.6" r="380"><stop offset="0.4705" stop-color="#990015"/><stop offset="0.5340" stop-color="#990011"/><stop offset="0.6293" stop-color="#99000c"/><stop offset="0.7617" stop-color="#990006"/><stop offset="1.0000" stop-color="#990000"/></radialGradient><radialGradient id="i4" gradientUnits="userSpaceOnUse" cx="1296.6" cy="383.6" r="380"><stop offset="0.0008" stop-color="#fffdfe"/><stop offset="0.0524" stop-color="#ffacba"/><stop offset="0.1309" stop-color="#ff6580"/><stop offset="0.2182" stop-color="#ff385a"/><stop offset="0.3272" stop-color="#ff163e"/><stop offset="0.4363" stop-color="#ff002c"/></radialGradient><radialGradient id="o4" gradientUnits="userSpaceOnUse" cx="1296.6" cy="383.6" r="380"><stop offset="0.4364" stop-color="#99001b"/><stop offset="0.5040" stop-color="#990016"/><stop offset="0.6054" stop-color="#990010"/><stop offset="0.7463" stop-color="#99000a"/><stop offset="1.0000" stop-color="#990003"/></radialGradient><radialGradient id="i5" gradientUnits="userSpaceOnUse" cx="1296.6" cy="383.6" r="380"><stop offset="0.0008" stop-color="#fffdfe"/><stop offset="0.0489" stop-color="#ffaebf"/><stop offset="0.1224" stop-color="#ff6887"/><stop offset="0.2039" stop-color="#ff3a63"/><stop offset="0.3059" stop-color="#ff1747"/><stop offset="0.4078" stop-color="#ff0035"/></radialGradient><radialGradient id="o5" gradientUnits="userSpaceOnUse" cx="1296.6" cy="383.6" r="380"><stop offset="0.4079" stop-color="#990020"/><stop offset="0.4789" stop-color="#99001a"/><stop offset="0.5855" stop-color="#990014"/><stop offset="0.7335" stop-color="#99000d"/><stop offset="1.0000" stop-color="#990006"/></radialGradient><radialGradient id="i6" gradientUnits="userSpaceOnUse" cx="1296.6" cy="383.6" r="380"><stop offset="0.0008" stop-color="#fffdfe"/><stop offset="0.0461" stop-color="#ffb0c3"/><stop offset="0.1152" stop-color="#ff6a8e"/><stop offset="0.1919" stop-color="#ff3c6a"/><stop offset="0.2879" stop-color="#ff184f"/><stop offset="0.3838" stop-color="#ff003d"/></radialGradient><radialGradient id="o6" gradientUnits="userSpaceOnUse" cx="1296.6" cy="383.6" r="380"><stop offset="0.3839" stop-color="#990024"/><stop offset="0.4578" stop-color="#99001e"/><stop offset="0.5687" stop-color="#990017"/><stop offset="0.7227" stop-color="#990011"/><stop offset="1.0000" stop-color="#990009"/></radialGradient><radialGradient id="i7" gradientUnits="userSpaceOnUse" cx="1296.6" cy="383.6" r="380"><stop offset="0.0008" stop-color="#fffdfe"/><stop offset="0.0436" stop-color="#ffb2c7"/><stop offset="0.1090" stop-color="#ff6d94"/><stop offset="0.1817" stop-color="#ff3e71"/><stop offset="0.2726" stop-color="#ff1856"/><stop offset="0.3634" stop-color="#ff0044"/></radialGradient><radialGradient id="o7" gradientUnits="userSpaceOnUse" cx="1296.6" cy="383.6" r="380"><stop offset="0.3635" stop-color="#990029"/><stop offset="0.4398" stop-color="#990022"/><stop offset="0.5544" stop-color="#99001b"/><stop offset="0.7136" stop-color="#990014"/><stop offset="1.0000" stop-color="#99000d"/></radialGradient><radialGradient id="i8" gradientUnits="userSpaceOnUse" cx="1296.6" cy="383.6" r="380"><stop offset="0.0008" stop-color="#fffdfe"/><stop offset="0.0415" stop-color="#ffb4cb"/><stop offset="0.1038" stop-color="#ff6f9a"/><stop offset="0.1730" stop-color="#ff3f78"/><stop offset="0.2595" stop-color="#ff195d"/><stop offset="0.3460" stop-color="#ff004c"/></radialGradient><radialGradient id="o8" gradientUnits="userSpaceOnUse" cx="1296.6" cy="383.6" r="380"><stop offset="0.3461" stop-color="#99002d"/><stop offset="0.4245" stop-color="#990026"/><stop offset="0.5422" stop-color="#99001f"/><stop offset="0.7057" stop-color="#990018"/><stop offset="1.0000" stop-color="#990010"/></radialGradient><radialGradient id="i9" gradientUnits="userSpaceOnUse" cx="1296.6" cy="383.6" r="380"><stop offset="0.0008" stop-color="#fffdfe"/><stop offset="0.0397" stop-color="#ffb6ce"/><stop offset="0.0993" stop-color="#ff719f"/><stop offset="0.1655" stop-color="#ff417f"/><stop offset="0.2483" stop-color="#ff1a64"/><stop offset="0.3310" stop-color="#ff0053"/></radialGradient><radialGradient id="o9" gradientUnits="userSpaceOnUse" cx="1296.6" cy="383.6" r="380"><stop offset="0.3311" stop-color="#990032"/><stop offset="0.4113" stop-color="#99002a"/><stop offset="0.5317" stop-color="#990023"/><stop offset="0.6990" stop-color="#99001b"/><stop offset="1.0000" stop-color="#990013"/></radialGradient><radialGradient id="i10" gradientUnits="userSpaceOnUse" cx="1296.6" cy="383.6" r="380"><stop offset="0.0008" stop-color="#fffdfe"/><stop offset="0.0382" stop-color="#ffb8d1"/><stop offset="0.0954" stop-color="#ff73a4"/><stop offset="0.1591" stop-color="#ff4285"/><stop offset="0.2386" stop-color="#ff1b6b"/><stop offset="0.3181" stop-color="#ff005a"/></radialGradient><radialGradient id="o10" gradientUnits="userSpaceOnUse" cx="1296.6" cy="383.6" r="380"><stop offset="0.3182" stop-color="#990036"/><stop offset="0.4000" stop-color="#99002e"/><stop offset="0.5227" stop-color="#990026"/><stop offset="0.6932" stop-color="#99001f"/><stop offset="1.0000" stop-color="#990016"/></radialGradient><radialGradient id="i11" gradientUnits="userSpaceOnUse" cx="1296.6" cy="383.6" r="380"><stop offset="0.0008" stop-color="#fffdfe"/><stop offset="0.0368" stop-color="#ffb9d4"/><stop offset="0.0921" stop-color="#ff75aa"/><stop offset="0.1535" stop-color="#ff448b"/><stop offset="0.2303" stop-color="#ff1c72"/><stop offset="0.3070" stop-color="#ff0061"/></radialGradient><radialGradient id="o11" gradientUnits="userSpaceOnUse" cx="1296.6" cy="383.6" r="380"><stop offset="0.3071" stop-color="#99003a"/><stop offset="0.3902" stop-color="#990032"/><stop offset="0.5149" stop-color="#99002a"/><stop offset="0.6882" stop-color="#990022"/><stop offset="1.0000" stop-color="#990018"/></radialGradient><radialGradient id="i12" gradientUnits="userSpaceOnUse" cx="1296.6" cy="383.6" r="380"><stop offset="0.0008" stop-color="#fffdfe"/><stop offset="0.0357" stop-color="#ffbbd7"/><stop offset="0.0892" stop-color="#ff77ae"/><stop offset="0.1487" stop-color="#ff4591"/><stop offset="0.2231" stop-color="#ff1c79"/><stop offset="0.2974" stop-color="#ff0068"/></radialGradient><radialGradient id="o12" gradientUnits="userSpaceOnUse" cx="1296.6" cy="383.6" r="380"><stop offset="0.2975" stop-color="#99003e"/><stop offset="0.3818" stop-color="#990036"/><stop offset="0.5082" stop-color="#99002e"/><stop offset="0.6839" stop-color="#990026"/><stop offset="1.0000" stop-color="#99001a"/></radialGradient><radialGradient id="i13" gradientUnits="userSpaceOnUse" cx="1296.6" cy="383.6" r="380"><stop offset="0.0008" stop-color="#fffdfe"/><stop offset="0.0347" stop-color="#ffbcd9"/><stop offset="0.0868" stop-color="#ff79b3"/><stop offset="0.1446" stop-color="#ff4797"/><stop offset="0.2169" stop-color="#ff1d7f"/><stop offset="0.2892" stop-color="#ff006f"/></radialGradient><radialGradient id="o13" gradientUnits="userSpaceOnUse" cx="1296.6" cy="383.6" r="380"><stop offset="0.2893" stop-color="#990043"/><stop offset="0.3745" stop-color="#99003a"/><stop offset="0.5025" stop-color="#990032"/><stop offset="0.6802" stop-color="#99002a"/><stop offset="1.0000" stop-color="#99001c"/></radialGradient><radialGradient id="i14" gradientUnits="userSpaceOnUse" cx="1296.6" cy="383.6" r="380"><stop offset="0.0008" stop-color="#fffdfe"/><stop offset="0.0339" stop-color="#ffbedc"/><stop offset="0.0847" stop-color="#ff7ab8"/><stop offset="0.1411" stop-color="#ff489d"/><stop offset="0.2116" stop-color="#ff1e86"/><stop offset="0.2821" stop-color="#ff0076"/></radialGradient><radialGradient id="o14" gradientUnits="userSpaceOnUse" cx="1296.6" cy="383.6" r="380"><stop offset="0.2823" stop-color="#990047"/><stop offset="0.3683" stop-color="#99003f"/><stop offset="0.4975" stop-color="#990036"/><stop offset="0.6770" stop-color="#99002e"/><stop offset="1.0000" stop-color="#99001e"/></radialGradient><radialGradient id="i15" gradientUnits="userSpaceOnUse" cx="1296.6" cy="383.6" r="380"><stop offset="0.0008" stop-color="#fffdfe"/><stop offset="0.0331" stop-color="#ffbfde"/><stop offset="0.0829" stop-color="#ff7cbc"/><stop offset="0.1381" stop-color="#ff4aa3"/><stop offset="0.2072" stop-color="#ff1e8d"/><stop offset="0.2762" stop-color="#ff007d"/></radialGradient><radialGradient id="o15" gradientUnits="userSpaceOnUse" cx="1296.6" cy="383.6" r="380"><stop offset="0.2763" stop-color="#99004b"/><stop offset="0.3631" stop-color="#990043"/><stop offset="0.4934" stop-color="#99003a"/><stop offset="0.6743" stop-color="#990033"/><stop offset="1.0000" stop-color="#990020"/></radialGradient><radialGradient id="i16" gradientUnits="userSpaceOnUse" cx="1296.6" cy="383.6" r="380"><stop offset="0.0008" stop-color="#fffdfe"/><stop offset="0.0326" stop-color="#ffc0e1"/><stop offset="0.0814" stop-color="#ff7ec1"/><stop offset="0.1356" stop-color="#ff4ba9"/><stop offset="0.2034" stop-color="#ff1f93"/><stop offset="0.2712" stop-color="#ff0084"/></radialGradient><radialGradient id="o16" gradientUnits="userSpaceOnUse" cx="1296.6" cy="383.6" r="380"><stop offset="0.2713" stop-color="#99004f"/><stop offset="0.3587" stop-color="#990047"/><stop offset="0.4899" stop-color="#99003f"/><stop offset="0.6721" stop-color="#990037"/><stop offset="1.0000" stop-color="#990023"/></radialGradient><radialGradient id="i17" gradientUnits="userSpaceOnUse" cx="1296.6" cy="383.6" r="380"><stop offset="0.0008" stop-color="#fffdfe"/><stop offset="0.0321" stop-color="#ffc2e3"/><stop offset="0.0801" stop-color="#ff80c5"/><stop offset="0.1336" stop-color="#ff4dae"/><stop offset="0.2004" stop-color="#ff209a"/><stop offset="0.2671" stop-color="#ff008c"/></radialGradient><radialGradient id="o17" gradientUnits="userSpaceOnUse" cx="1296.6" cy="383.6" r="380"><stop offset="0.2672" stop-color="#990054"/><stop offset="0.3551" stop-color="#99004c"/><stop offset="0.4870" stop-color="#990043"/><stop offset="0.6702" stop-color="#99003b"/><stop offset="1.0000" stop-color="#990026"/></radialGradient><radialGradient id="i18" gradientUnits="userSpaceOnUse" cx="1296.6" cy="383.6" r="380"><stop offset="0.0008" stop-color="#fffdfe"/><stop offset="0.0317" stop-color="#ffc3e6"/><stop offset="0.0792" stop-color="#ff81ca"/><stop offset="0.1320" stop-color="#ff4eb4"/><stop offset="0.1979" stop-color="#ff21a1"/><stop offset="0.2639" stop-color="#ff0093"/></radialGradient><radialGradient id="o18" gradientUnits="userSpaceOnUse" cx="1296.6" cy="383.6" r="380"><stop offset="0.2640" stop-color="#990058"/><stop offset="0.3522" stop-color="#990050"/><stop offset="0.4847" stop-color="#990048"/><stop offset="0.6688" stop-color="#99003f"/><stop offset="1.0000" stop-color="#99002a"/></radialGradient><radialGradient id="i19" gradientUnits="userSpaceOnUse" cx="1296.6" cy="383.6" r="380"><stop offset="0.0008" stop-color="#fffdfe"/><stop offset="0.0314" stop-color="#ffc4e8"/><stop offset="0.0784" stop-color="#ff83ce"/><stop offset="0.1307" stop-color="#ff4fba"/><stop offset="0.1961" stop-color="#ff21a8"/><stop offset="0.2614" stop-color="#ff009b"/></radialGradient><radialGradient id="o19" gradientUnits="userSpaceOnUse" cx="1296.6" cy="383.6" r="380"><stop offset="0.2615" stop-color="#99005d"/><stop offset="0.3501" stop-color="#990055"/><stop offset="0.4830" stop-color="#99004d"/><stop offset="0.6676" stop-color="#990043"/><stop offset="1.0000" stop-color="#99002e"/></radialGradient><radialGradient id="i20" gradientUnits="userSpaceOnUse" cx="1296.6" cy="383.6" r="380"><stop offset="0.0008" stop-color="#fffdfe"/><stop offset="0.0312" stop-color="#ffc5ea"/><stop offset="0.0779" stop-color="#ff85d3"/><stop offset="0.1299" stop-color="#ff51c0"/><stop offset="0.1948" stop-color="#ff22b0"/><stop offset="0.2597" stop-color="#ff00a3"/></radialGradient><radialGradient id="o20" gradientUnits="userSpaceOnUse" cx="1296.6" cy="383.6" r="380"><stop offset="0.2598" stop-color="#990062"/><stop offset="0.3486" stop-color="#99005a"/><stop offset="0.4818" stop-color="#990053"/><stop offset="0.6669" stop-color="#990048"/><stop offset="1.0000" stop-color="#990033"/></radialGradient><radialGradient id="i21" gradientUnits="userSpaceOnUse" cx="1296.6" cy="383.6" r="380"><stop offset="0.0008" stop-color="#fffdff"/><stop offset="0.0310" stop-color="#ffc6ed"/><stop offset="0.0776" stop-color="#ff87d8"/><stop offset="0.1294" stop-color="#ff53c7"/><stop offset="0.1940" stop-color="#ff23b7"/><stop offset="0.2587" stop-color="#ff00ac"/></radialGradient><radialGradient id="o21" gradientUnits="userSpaceOnUse" cx="1296.6" cy="383.6" r="380"><stop offset="0.2588" stop-color="#990067"/><stop offset="0.3477" stop-color="#990060"/><stop offset="0.4811" stop-color="#990059"/><stop offset="0.6664" stop-color="#99004d"/><stop offset="1.0000" stop-color="#990038"/></radialGradient><radialGradient id="i22" gradientUnits="userSpaceOnUse" cx="1296.6" cy="383.6" r="380"><stop offset="0.0008" stop-color="#fffdff"/><stop offset="0.0310" stop-color="#ffc8ef"/><stop offset="0.0775" stop-color="#ff88dc"/><stop offset="0.1292" stop-color="#ff54cd"/><stop offset="0.1938" stop-color="#ff24bf"/><stop offset="0.2584" stop-color="#ff00b5"/></radialGradient><radialGradient id="o22" gradientUnits="userSpaceOnUse" cx="1296.6" cy="383.6" r="380"><stop offset="0.2585" stop-color="#99006c"/><stop offset="0.3474" stop-color="#990066"/><stop offset="0.4809" stop-color="#99005f"/><stop offset="0.6663" stop-color="#990053"/><stop offset="1.0000" stop-color="#99003e"/></radialGradient><radialGradient id="i23" gradientUnits="userSpaceOnUse" cx="1296.6" cy="383.6" r="380"><stop offset="0.0008" stop-color="#fffeff"/><stop offset="0.0311" stop-color="#ffc9f1"/><stop offset="0.0777" stop-color="#ff8ae1"/><stop offset="0.1294" stop-color="#ff56d4"/><stop offset="0.1942" stop-color="#ff25c7"/><stop offset="0.2588" stop-color="#ff00be"/></radialGradient><radialGradient id="o23" gradientUnits="userSpaceOnUse" cx="1296.6" cy="383.6" r="380"><stop offset="0.2589" stop-color="#990072"/><stop offset="0.3478" stop-color="#99006c"/><stop offset="0.4812" stop-color="#990066"/><stop offset="0.6665" stop-color="#99005a"/><stop offset="1.0000" stop-color="#990045"/></radialGradient><radialGradient id="i24" gradientUnits="userSpaceOnUse" cx="1296.6" cy="383.6" r="380"><stop offset="0.0008" stop-color="#fffeff"/><stop offset="0.0312" stop-color="#ffcaf4"/><stop offset="0.0780" stop-color="#ff8ce6"/><stop offset="0.1300" stop-color="#ff58db"/><stop offset="0.1950" stop-color="#ff26d0"/><stop offset="0.2600" stop-color="#ff00c8"/></radialGradient><radialGradient id="o24" gradientUnits="userSpaceOnUse" cx="1296.6" cy="383.6" r="380"><stop offset="0.2601" stop-color="#990078"/><stop offset="0.3488" stop-color="#990073"/><stop offset="0.4820" stop-color="#99006e"/><stop offset="0.6670" stop-color="#990062"/><stop offset="1.0000" stop-color="#99004e"/></radialGradient><radialGradient id="i25" gradientUnits="userSpaceOnUse" cx="1296.6" cy="383.6" r="380"><stop offset="0.0008" stop-color="#fffeff"/><stop offset="0.0314" stop-color="#ffccf6"/><stop offset="0.0786" stop-color="#ff8eec"/><stop offset="0.1310" stop-color="#ff59e2"/><stop offset="0.1964" stop-color="#ff27da"/><stop offset="0.2618" stop-color="#ff00d3"/></radialGradient><radialGradient id="o25" gradientUnits="userSpaceOnUse" cx="1296.6" cy="383.6" r="380"><stop offset="0.2620" stop-color="#99007f"/><stop offset="0.3505" stop-color="#99007a"/><stop offset="0.4833" stop-color="#990076"/><stop offset="0.6679" stop-color="#99006b"/><stop offset="1.0000" stop-color="#990058"/></radialGradient><radialGradient id="i26" gradientUnits="userSpaceOnUse" cx="1296.6" cy="383.6" r="380"><stop offset="0.0008" stop-color="#fffeff"/><stop offset="0.0317" stop-color="#ffcdf9"/><stop offset="0.0794" stop-color="#ff90f1"/><stop offset="0.1323" stop-color="#ff5bea"/><stop offset="0.1984" stop-color="#ff28e4"/><stop offset="0.2645" stop-color="#ff00df"/></radialGradient><radialGradient id="o26" gradientUnits="userSpaceOnUse" cx="1296.6" cy="383.6" r="380"><stop offset="0.2646" stop-color="#990086"/><stop offset="0.3528" stop-color="#990083"/><stop offset="0.4852" stop-color="#99007f"/><stop offset="0.6690" stop-color="#990075"/><stop offset="1.0000" stop-color="#990064"/></radialGradient><radialGradient id="i27" gradientUnits="userSpaceOnUse" cx="1296.6" cy="383.6" r="380"><stop offset="0.0008" stop-color="#fffeff"/><stop offset="0.0322" stop-color="#ffcefb"/><stop offset="0.0804" stop-color="#ff92f7"/><stop offset="0.1340" stop-color="#ff5df3"/><stop offset="0.2010" stop-color="#ff29ef"/><stop offset="0.2679" stop-color="#ff00ec"/></radialGradient><radialGradient id="o27" gradientUnits="userSpaceOnUse" cx="1296.6" cy="383.6" r="380"><stop offset="0.2680" stop-color="#99008d"/><stop offset="0.3558" stop-color="#99008b"/><stop offset="0.4876" stop-color="#990089"/><stop offset="0.6706" stop-color="#990081"/><stop offset="1.0000" stop-color="#990072"/></radialGradient><radialGradient id="i28" gradientUnits="userSpaceOnUse" cx="1296.6" cy="383.6" r="380"><stop offset="0.0008" stop-color="#fffeff"/><stop offset="0.0327" stop-color="#ffd0fe"/><stop offset="0.0817" stop-color="#ff95fd"/><stop offset="0.1361" stop-color="#ff60fc"/><stop offset="0.2042" stop-color="#ff2bfb"/><stop offset="0.2722" stop-color="#ff00fa"/></radialGradient><radialGradient id="o28" gradientUnits="userSpaceOnUse" cx="1296.6" cy="383.6" r="380"><stop offset="0.2723" stop-color="#990096"/><stop offset="0.3596" stop-color="#990095"/><stop offset="0.4906" stop-color="#990095"/><stop offset="0.6725" stop-color="#99008f"/><stop offset="1.0000" stop-color="#990085"/></radialGradient><radialGradient id="i29" gradientUnits="userSpaceOnUse" cx="1296.6" cy="383.6" r="380"><stop offset="0.0008" stop-color="#fffeff"/><stop offset="0.0333" stop-color="#fdd0ff"/><stop offset="0.0832" stop-color="#fb95ff"/><stop offset="0.1387" stop-color="#f860ff"/><stop offset="0.2081" stop-color="#f62aff"/><stop offset="0.2774" stop-color="#f400ff"/></radialGradient><radialGradient id="o29" gradientUnits="userSpaceOnUse" cx="1296.6" cy="383.6" r="380"><stop offset="0.2775" stop-color="#930099"/><stop offset="0.3641" stop-color="#920099"/><stop offset="0.4942" stop-color="#900099"/><stop offset="0.6748" stop-color="#920099"/><stop offset="1.0000" stop-color="#960099"/></radialGradient><radialGradient id="i30" gradientUnits="userSpaceOnUse" cx="1296.6" cy="383.6" r="380"><stop offset="0.0008" stop-color="#fffeff"/><stop offset="0.0340" stop-color="#facfff"/><stop offset="0.0851" stop-color="#f493ff"/><stop offset="0.1418" stop-color="#ee5eff"/><stop offset="0.2127" stop-color="#e92aff"/><stop offset="0.2836" stop-color="#e500ff"/></radialGradient><radialGradient id="o30" gradientUnits="userSpaceOnUse" cx="1296.6" cy="383.6" r="380"><stop offset="0.2837" stop-color="#890099"/><stop offset="0.3696" stop-color="#870099"/><stop offset="0.4985" stop-color="#840099"/><stop offset="0.6776" stop-color="#820099"/><stop offset="1.0000" stop-color="#7e0099"/></radialGradient><radialGradient id="i31" gradientUnits="userSpaceOnUse" cx="1296.6" cy="383.6" r="380"><stop offset="0.0008" stop-color="#fffeff"/><stop offset="0.0349" stop-color="#f7ceff"/><stop offset="0.0873" stop-color="#ed92ff"/><stop offset="0.1454" stop-color="#e45dff"/><stop offset="0.2182" stop-color="#dc29ff"/><stop offset="0.2908" stop-color="#d500ff"/></radialGradient><radialGradient id="o31" gradientUnits="userSpaceOnUse" cx="1296.6" cy="383.6" r="380"><stop offset="0.2910" stop-color="#800099"/><stop offset="0.3760" stop-color="#7c0099"/><stop offset="0.5036" stop-color="#780099"/><stop offset="0.6809" stop-color="#720099"/><stop offset="1.0000" stop-color="#670099"/></radialGradient><radialGradient id="i32" gradientUnits="userSpaceOnUse" cx="1296.6" cy="383.6" r="380"><stop offset="0.0008" stop-color="#fffeff"/><stop offset="0.0359" stop-color="#f4cdff"/><stop offset="0.0898" stop-color="#e690ff"/><stop offset="0.1497" stop-color="#da5cff"/><stop offset="0.2246" stop-color="#ce28ff"/><stop offset="0.2994" stop-color="#c500ff"/></radialGradient><radialGradient id="o32" gradientUnits="userSpaceOnUse" cx="1296.6" cy="383.6" r="380"><stop offset="0.2995" stop-color="#760099"/><stop offset="0.3835" stop-color="#720099"/><stop offset="0.5096" stop-color="#6c0099"/><stop offset="0.6847" stop-color="#630099"/><stop offset="1.0000" stop-color="#520099"/></radialGradient><radialGradient id="i33" gradientUnits="userSpaceOnUse" cx="1296.6" cy="383.6" r="380"><stop offset="0.0008" stop-color="#fffeff"/><stop offset="0.0371" stop-color="#f0ccff"/><stop offset="0.0928" stop-color="#df8fff"/><stop offset="0.1546" stop-color="#cf5aff"/><stop offset="0.2320" stop-color="#c127ff"/><stop offset="0.3092" stop-color="#b500ff"/></radialGradient><radialGradient id="o33" gradientUnits="userSpaceOnUse" cx="1296.6" cy="383.6" r="380"><stop offset="0.3093" stop-color="#6d0099"/><stop offset="0.3922" stop-color="#670099"/><stop offset="0.5165" stop-color="#600099"/><stop offset="0.6892" stop-color="#540099"/><stop offset="1.0000" stop-color="#3e0099"/></radialGradient><radialGradient id="i34" gradientUnits="userSpaceOnUse" cx="1296.6" cy="383.6" r="380"><stop offset="0.0008" stop-color="#fffeff"/><stop offset="0.0385" stop-color="#edcbff"/><stop offset="0.0962" stop-color="#d78dff"/><stop offset="0.1604" stop-color="#c459ff"/><stop offset="0.2406" stop-color="#b326ff"/><stop offset="0.3207" stop-color="#a500ff"/></radialGradient><radialGradient id="o34" gradientUnits="userSpaceOnUse" cx="1296.6" cy="383.6" r="380"><stop offset="0.3208" stop-color="#630099"/><stop offset="0.4023" stop-color="#5c0099"/><stop offset="0.5245" stop-color="#550099"/><stop offset="0.6943" stop-color="#460099"/><stop offset="1.0000" stop-color="#2b0099"/></radialGradient><radialGradient id="i35" gradientUnits="userSpaceOnUse" cx="1296.6" cy="383.6" r="380"><stop offset="0.0008" stop-color="#fefeff"/><stop offset="0.0401" stop-color="#e9caff"/><stop offset="0.1002" stop-color="#cf8cff"/><stop offset="0.1670" stop-color="#b957ff"/><stop offset="0.2506" stop-color="#a426ff"/><stop offset="0.3340" stop-color="#9400ff"/></radialGradient><radialGradient id="o35" gradientUnits="userSpaceOnUse" cx="1296.6" cy="383.6" r="380"><stop offset="0.3341" stop-color="#590099"/><stop offset="0.4140" stop-color="#520099"/><stop offset="0.5339" stop-color="#490099"/><stop offset="0.7003" stop-color="#380099"/><stop offset="1.0000" stop-color="#1a0099"/></radialGradient><radialGradient id="i36" gradientUnits="userSpaceOnUse" cx="1296.6" cy="383.6" r="380"><stop offset="0.0008" stop-color="#fefeff"/><stop offset="0.0419" stop-color="#e5c9ff"/><stop offset="0.1049" stop-color="#c68aff"/><stop offset="0.1748" stop-color="#ac56ff"/><stop offset="0.2622" stop-color="#9525ff"/><stop offset="0.3495" stop-color="#8300ff"/></radialGradient><radialGradient id="o36" gradientUnits="userSpaceOnUse" cx="1296.6" cy="383.6" r="380"><stop offset="0.3496" stop-color="#4f0099"/><stop offset="0.4276" stop-color="#470099"/><stop offset="0.5447" stop-color="#3e0099"/><stop offset="0.7073" stop-color="#2b0099"/><stop offset="1.0000" stop-color="#0a0099"/></radialGradient><radialGradient id="i37" gradientUnits="userSpaceOnUse" cx="1296.6" cy="383.6" r="380"><stop offset="0.0008" stop-color="#fefeff"/><stop offset="0.0441" stop-color="#e0c7ff"/><stop offset="0.1103" stop-color="#bd88ff"/><stop offset="0.1838" stop-color="#a054ff"/><stop offset="0.2757" stop-color="#8524ff"/><stop offset="0.3675" stop-color="#7100ff"/></radialGradient><radialGradient id="o37" gradientUnits="userSpaceOnUse" cx="1296.6" cy="383.6" r="380"><stop offset="0.3676" stop-color="#440099"/><stop offset="0.4435" stop-color="#3c0099"/><stop offset="0.5573" stop-color="#330099"/><stop offset="0.7154" stop-color="#1e0099"/><stop offset="1.0000" stop-color="#000099"/></radialGradient><radialGradient id="i38" gradientUnits="userSpaceOnUse" cx="1296.6" cy="383.6" r="380"><stop offset="0.0008" stop-color="#fefeff"/><stop offset="0.0466" stop-color="#dbc6ff"/><stop offset="0.1166" stop-color="#b386ff"/><stop offset="0.1943" stop-color="#9252ff"/><stop offset="0.2915" stop-color="#7423ff"/><stop offset="0.3886" stop-color="#5e00ff"/></radialGradient><radialGradient id="o38" gradientUnits="userSpaceOnUse" cx="1296.6" cy="383.6" r="380"><stop offset="0.3887" stop-color="#380099"/><stop offset="0.4620" stop-color="#310099"/><stop offset="0.5721" stop-color="#270099"/><stop offset="0.7249" stop-color="#110099"/><stop offset="1.0000" stop-color="#000099"/></radialGradient><radialGradient id="i39" gradientUnits="userSpaceOnUse" cx="1296.6" cy="383.6" r="380"><stop offset="0.0008" stop-color="#fefeff"/><stop offset="0.0496" stop-color="#d6c4ff"/><stop offset="0.1241" stop-color="#a884ff"/><stop offset="0.2068" stop-color="#8350ff"/><stop offset="0.3102" stop-color="#6222ff"/><stop offset="0.4135" stop-color="#4a00ff"/></radialGradient><radialGradient id="o39" gradientUnits="userSpaceOnUse" cx="1296.6" cy="383.6" r="380"><stop offset="0.4136" stop-color="#2d0099"/><stop offset="0.4839" stop-color="#250099"/><stop offset="0.5895" stop-color="#1b0099"/><stop offset="0.7361" stop-color="#050099"/><stop offset="1.0000" stop-color="#000099"/></radialGradient><radialGradient id="i40" gradientUnits="userSpaceOnUse" cx="1296.6" cy="383.6" r="380"><stop offset="0.0008" stop-color="#fefeff"/><stop offset="0.0532" stop-color="#cfc3ff"/><stop offset="0.1329" stop-color="#9c81ff"/><stop offset="0.2216" stop-color="#734eff"/><stop offset="0.3324" stop-color="#4f21ff"/><stop offset="0.4431" stop-color="#3600ff"/></radialGradient><radialGradient id="o40" gradientUnits="userSpaceOnUse" cx="1296.6" cy="383.6" r="380"><stop offset="0.4432" stop-color="#200099"/><stop offset="0.5100" stop-color="#190099"/><stop offset="0.6102" stop-color="#0f0099"/><stop offset="0.7494" stop-color="#000099"/><stop offset="1.0000" stop-color="#000099"/></radialGradient><radialGradient id="i41" gradientUnits="userSpaceOnUse" cx="1296.6" cy="383.6" r="380"><stop offset="0.0008" stop-color="#fefeff"/><stop offset="0.0574" stop-color="#c8c1ff"/><stop offset="0.1436" stop-color="#8e7eff"/><stop offset="0.2393" stop-color="#624cff"/><stop offset="0.3590" stop-color="#3b1fff"/><stop offset="0.4786" stop-color="#1f00ff"/></radialGradient><radialGradient id="o41" gradientUnits="userSpaceOnUse" cx="1296.6" cy="383.6" r="380"><stop offset="0.4787" stop-color="#130099"/><stop offset="0.5412" stop-color="#0c0099"/><stop offset="0.6351" stop-color="#020099"/><stop offset="0.7654" stop-color="#000099"/><stop offset="1.0000" stop-color="#000199"/></radialGradient><radialGradient id="i42" gradientUnits="userSpaceOnUse" cx="1296.6" cy="383.6" r="380"><stop offset="0.0008" stop-color="#fefeff"/><stop offset="0.0626" stop-color="#c0beff"/><stop offset="0.1566" stop-color="#7f7bff"/><stop offset="0.2610" stop-color="#4e49ff"/><stop offset="0.3915" stop-color="#251eff"/><stop offset="0.5219" stop-color="#0700ff"/></radialGradient><radialGradient id="o42" gradientUnits="userSpaceOnUse" cx="1296.6" cy="383.6" r="380"><stop offset="0.5220" stop-color="#040099"/><stop offset="0.5794" stop-color="#000099"/><stop offset="0.6654" stop-color="#000099"/><stop offset="0.7849" stop-color="#000099"/><stop offset="1.0000" stop-color="#000499"/></radialGradient><radialGradient id="i43" gradientUnits="userSpaceOnUse" cx="1296.6" cy="383.6" r="380"><stop offset="0.0008" stop-color="#fefeff"/><stop offset="0.0579" stop-color="#c1c5ff"/><stop offset="0.1448" stop-color="#7f87ff"/><stop offset="0.2413" stop-color="#4c58ff"/><stop offset="0.3619" stop-color="#1f2fff"/><stop offset="0.4825" stop-color="#0011ff"/></radialGradient><radialGradient id="o43" gradientUnits="userSpaceOnUse" cx="1296.6" cy="383.6" r="380"><stop offset="0.4826" stop-color="#000a99"/><stop offset="0.5447" stop-color="#000399"/><stop offset="0.6378" stop-color="#000099"/><stop offset="0.7672" stop-color="#000099"/><stop offset="1.0000" stop-color="#000799"/></radialGradient><radialGradient id="i44" gradientUnits="userSpaceOnUse" cx="1296.6" cy="383.6" r="380"><stop offset="0.0008" stop-color="#fefeff"/><stop offset="0.0509" stop-color="#c4ceff"/><stop offset="0.1272" stop-color="#8497ff"/><stop offset="0.2119" stop-color="#506bff"/><stop offset="0.3179" stop-color="#2244ff"/><stop offset="0.4238" stop-color="#0028ff"/></radialGradient><radialGradient id="o44" gradientUnits="userSpaceOnUse" cx="1296.6" cy="383.6" r="380"><stop offset="0.4239" stop-color="#001899"/><stop offset="0.4930" stop-color="#000f99"/><stop offset="0.5967" stop-color="#000499"/><stop offset="0.7408" stop-color="#000099"/><stop offset="1.0000" stop-color="#000999"/></radialGradient><radialGradient id="i45" gradientUnits="userSpaceOnUse" cx="1296.6" cy="383.6" r="380"><stop offset="0.0008" stop-color="#fefeff"/><stop offset="0.0455" stop-color="#c7d4ff"/><stop offset="0.1137" stop-color="#88a4ff"/><stop offset="0.1894" stop-color="#547cff"/><stop offset="0.2841" stop-color="#2457ff"/><stop offset="0.3788" stop-color="#003cff"/></radialGradient><radialGradient id="o45" gradientUnits="userSpaceOnUse" cx="1296.6" cy="383.6" r="380"><stop offset="0.3789" stop-color="#002499"/><stop offset="0.4534" stop-color="#001a99"/><stop offset="0.5652" stop-color="#000e99"/><stop offset="0.7205" stop-color="#000199"/><stop offset="1.0000" stop-color="#000c99"/></radialGradient><radialGradient id="i46" gradientUnits="userSpaceOnUse" cx="1296.6" cy="383.6" r="380"><stop offset="0.0008" stop-color="#fefeff"/><stop offset="0.0412" stop-color="#cadaff"/><stop offset="0.1030" stop-color="#8bafff"/><stop offset="0.1717" stop-color="#578bff"/><stop offset="0.2575" stop-color="#2569ff"/><stop offset="0.3433" stop-color="#004fff"/></radialGradient><radialGradient id="o46" gradientUnits="userSpaceOnUse" cx="1296.6" cy="383.6" r="380"><stop offset="0.3434" stop-color="#002f99"/><stop offset="0.4221" stop-color="#002499"/><stop offset="0.5403" stop-color="#001799"/><stop offset="0.7045" stop-color="#000999"/><stop offset="1.0000" stop-color="#000e99"/></radialGradient><radialGradient id="i47" gradientUnits="userSpaceOnUse" cx="1296.6" cy="383.6" r="380"><stop offset="0.0008" stop-color="#fefeff"/><stop offset="0.0378" stop-color="#ccdfff"/><stop offset="0.0944" stop-color="#8fb9ff"/><stop offset="0.1573" stop-color="#5a98ff"/><stop offset="0.2360" stop-color="#2778ff"/><stop offset="0.3146" stop-color="#0060ff"/></radialGradient><radialGradient id="o47" gradientUnits="userSpaceOnUse" cx="1296.6" cy="383.6" r="380"><stop offset="0.3147" stop-color="#003999"/><stop offset="0.3969" stop-color="#002d99"/><stop offset="0.5203" stop-color="#001f99"/><stop offset="0.6916" stop-color="#001199"/><stop offset="1.0000" stop-color="#001099"/></radialGradient><radialGradient id="i48" gradientUnits="userSpaceOnUse" cx="1296.6" cy="383.6" r="380"><stop offset="0.0008" stop-color="#fefeff"/><stop offset="0.0349" stop-color="#cee3ff"/><stop offset="0.0873" stop-color="#91c1ff"/><stop offset="0.1456" stop-color="#5ca4ff"/><stop offset="0.2184" stop-color="#2987ff"/><stop offset="0.2911" stop-color="#0070ff"/></radialGradient><radialGradient id="o48" gradientUnits="userSpaceOnUse" cx="1296.6" cy="383.6" r="380"><stop offset="0.2912" stop-color="#004399"/><stop offset="0.3762" stop-color="#003699"/><stop offset="0.5038" stop-color="#002899"/><stop offset="0.6810" stop-color="#001a99"/><stop offset="1.0000" stop-color="#001299"/></radialGradient><radialGradient id="i49" gradientUnits="userSpaceOnUse" cx="1296.6" cy="383.6" r="380"><stop offset="0.0008" stop-color="#fefeff"/><stop offset="0.0326" stop-color="#cfe7ff"/><stop offset="0.0815" stop-color="#94c9ff"/><stop offset="0.1358" stop-color="#5faeff"/><stop offset="0.2037" stop-color="#2a94ff"/><stop offset="0.2716" stop-color="#007fff"/></radialGradient><radialGradient id="o49" gradientUnits="userSpaceOnUse" cx="1296.6" cy="383.6" r="380"><stop offset="0.2717" stop-color="#004c99"/><stop offset="0.3590" stop-color="#003f99"/><stop offset="0.4901" stop-color="#003199"/><stop offset="0.6722" stop-color="#002299"/><stop offset="1.0000" stop-color="#001399"/></radialGradient><radialGradient id="i50" gradientUnits="userSpaceOnUse" cx="1296.6" cy="383.6" r="380"><stop offset="0.0008" stop-color="#fefeff"/><stop offset="0.0306" stop-color="#d1eaff"/><stop offset="0.0766" stop-color="#96d0ff"/><stop offset="0.1276" stop-color="#61b8ff"/><stop offset="0.1914" stop-color="#2ba0ff"/><stop offset="0.2551" stop-color="#008dff"/></radialGradient><radialGradient id="o50" gradientUnits="userSpaceOnUse" cx="1296.6" cy="383.6" r="380"><stop offset="0.2552" stop-color="#005599"/><stop offset="0.3446" stop-color="#004899"/><stop offset="0.4786" stop-color="#003999"/><stop offset="0.6648" stop-color="#002b99"/><stop offset="1.0000" stop-color="#001b99"/></radialGradient><radialGradient id="i51" gradientUnits="userSpaceOnUse" cx="1296.6" cy="383.6" r="380"><stop offset="0.0008" stop-color="#fefeff"/><stop offset="0.0290" stop-color="#d2edff"/><stop offset="0.0724" stop-color="#98d6ff"/><stop offset="0.1206" stop-color="#63c1ff"/><stop offset="0.1809" stop-color="#2cacff"/><stop offset="0.2412" stop-color="#009bff"/></radialGradient><radialGradient id="o51" gradientUnits="userSpaceOnUse" cx="1296.6" cy="383.6" r="380"><stop offset="0.2413" stop-color="#005d99"/><stop offset="0.3323" stop-color="#005099"/><stop offset="0.4689" stop-color="#004299"/><stop offset="0.6586" stop-color="#003499"/><stop offset="1.0000" stop-color="#002599"/></radialGradient><radialGradient id="i52" gradientUnits="userSpaceOnUse" cx="1296.6" cy="383.6" r="380"><stop offset="0.0008" stop-color="#feffff"/><stop offset="0.0275" stop-color="#d3f0ff"/><stop offset="0.0688" stop-color="#9adcff"/><stop offset="0.1147" stop-color="#65caff"/><stop offset="0.1720" stop-color="#2eb7ff"/><stop offset="0.2293" stop-color="#00a7ff"/></radialGradient><radialGradient id="o52" gradientUnits="userSpaceOnUse" cx="1296.6" cy="383.6" r="380"><stop offset="0.2294" stop-color="#006499"/><stop offset="0.3218" stop-color="#005899"/><stop offset="0.4606" stop-color="#004b99"/><stop offset="0.6532" stop-color="#003e99"/><stop offset="1.0000" stop-color="#002f99"/></radialGradient><radialGradient id="i53" gradientUnits="userSpaceOnUse" cx="1296.6" cy="383.6" r="380"><stop offset="0.0008" stop-color="#feffff"/><stop offset="0.0263" stop-color="#d4f2ff"/><stop offset="0.0657" stop-color="#9ce2ff"/><stop offset="0.1096" stop-color="#67d2ff"/><stop offset="0.1644" stop-color="#2fc2ff"/><stop offset="0.2191" stop-color="#00b4ff"/></radialGradient><radialGradient id="o53" gradientUnits="userSpaceOnUse" cx="1296.6" cy="383.6" r="380"><stop offset="0.2192" stop-color="#006c99"/><stop offset="0.3129" stop-color="#006199"/><stop offset="0.4534" stop-color="#005499"/><stop offset="0.6486" stop-color="#004899"/><stop offset="1.0000" stop-color="#003a99"/></radialGradient><radialGradient id="i54" gradientUnits="userSpaceOnUse" cx="1296.6" cy="383.6" r="380"><stop offset="0.0008" stop-color="#feffff"/><stop offset="0.0252" stop-color="#d5f5ff"/><stop offset="0.0631" stop-color="#9de7ff"/><stop offset="0.1052" stop-color="#68daff"/><stop offset="0.1578" stop-color="#30ccff"/><stop offset="0.2103" stop-color="#00c0ff"/></radialGradient><radialGradient id="o54" gradientUnits="userSpaceOnUse" cx="1296.6" cy="383.6" r="380"><stop offset="0.2104" stop-color="#007399"/><stop offset="0.3051" stop-color="#006999"/><stop offset="0.4473" stop-color="#005d99"/><stop offset="0.6447" stop-color="#005299"/><stop offset="1.0000" stop-color="#004699"/></radialGradient><radialGradient id="i55" gradientUnits="userSpaceOnUse" cx="1296.6" cy="383.6" r="380"><stop offset="0.0008" stop-color="#feffff"/><stop offset="0.0243" stop-color="#d6f7ff"/><stop offset="0.0608" stop-color="#9fecff"/><stop offset="0.1014" stop-color="#6ae1ff"/><stop offset="0.1521" stop-color="#31d6ff"/><stop offset="0.2028" stop-color="#00ccff"/></radialGradient><radialGradient id="o55" gradientUnits="userSpaceOnUse" cx="1296.6" cy="383.6" r="380"><stop offset="0.2029" stop-color="#007a99"/><stop offset="0.2985" stop-color="#007199"/><stop offset="0.4420" stop-color="#006799"/><stop offset="0.6413" stop-color="#005d99"/><stop offset="1.0000" stop-color="#005299"/></radialGradient><radialGradient id="i56" gradientUnits="userSpaceOnUse" cx="1296.6" cy="383.6" r="380"><stop offset="0.0008" stop-color="#feffff"/><stop offset="0.0236" stop-color="#d7f9ff"/><stop offset="0.0589" stop-color="#a0f0ff"/><stop offset="0.0981" stop-color="#6be8ff"/><stop offset="0.1472" stop-color="#32dfff"/><stop offset="0.1962" stop-color="#00d8ff"/></radialGradient><radialGradient id="o56" gradientUnits="userSpaceOnUse" cx="1296.6" cy="383.6" r="380"><stop offset="0.1963" stop-color="#008199"/><stop offset="0.2927" stop-color="#007a99"/><stop offset="0.4374" stop-color="#007199"/><stop offset="0.6383" stop-color="#006999"/><stop offset="1.0000" stop-color="#006099"/></radialGradient><radialGradient id="i57" gradientUnits="userSpaceOnUse" cx="1296.6" cy="383.6" r="380"><stop offset="0.0008" stop-color="#feffff"/><stop offset="0.0229" stop-color="#d7fbff"/><stop offset="0.0572" stop-color="#a2f5ff"/><stop offset="0.0953" stop-color="#6defff"/><stop offset="0.1430" stop-color="#33e9ff"/><stop offset="0.1906" stop-color="#00e3ff"/></radialGradient><radialGradient id="o57" gradientUnits="userSpaceOnUse" cx="1296.6" cy="383.6" r="380"><stop offset="0.1907" stop-color="#008899"/><stop offset="0.2878" stop-color="#008399"/><stop offset="0.4335" stop-color="#007c99"/><stop offset="0.6358" stop-color="#007699"/><stop offset="1.0000" stop-color="#006f99"/></radialGradient><radialGradient id="i58" gradientUnits="userSpaceOnUse" cx="1296.6" cy="383.6" r="380"><stop offset="0.0008" stop-color="#feffff"/><stop offset="0.0223" stop-color="#d8fcff"/><stop offset="0.0558" stop-color="#a3f9ff"/><stop offset="0.0929" stop-color="#6ef6ff"/><stop offset="0.1394" stop-color="#34f2ff"/><stop offset="0.1858" stop-color="#00eeff"/></radialGradient><radialGradient id="o58" gradientUnits="userSpaceOnUse" cx="1296.6" cy="383.6" r="380"><stop offset="0.1859" stop-color="#008f99"/><stop offset="0.2836" stop-color="#008c99"/><stop offset="0.4301" stop-color="#008799"/><stop offset="0.6336" stop-color="#008399"/><stop offset="1.0000" stop-color="#007f99"/></radialGradient><radialGradient id="i59" gradientUnits="userSpaceOnUse" cx="1296.6" cy="383.6" r="380"><stop offset="0.0008" stop-color="#feffff"/><stop offset="0.0218" stop-color="#d9feff"/><stop offset="0.0545" stop-color="#a5fdff"/><stop offset="0.0909" stop-color="#70fcff"/><stop offset="0.1363" stop-color="#35fbff"/><stop offset="0.1817" stop-color="#00faff"/></radialGradient><radialGradient id="o59" gradientUnits="userSpaceOnUse" cx="1296.6" cy="383.6" r="380"><stop offset="0.1818" stop-color="#009699"/><stop offset="0.2800" stop-color="#009599"/><stop offset="0.4273" stop-color="#009399"/><stop offset="0.6318" stop-color="#009299"/><stop offset="1.0000" stop-color="#009099"/></radialGradient><radialGradient id="i60" gradientUnits="userSpaceOnUse" cx="1296.6" cy="383.6" r="380"><stop offset="0.0008" stop-color="#fdffff"/><stop offset="0.0214" stop-color="#d9fffe"/><stop offset="0.0535" stop-color="#a4fffd"/><stop offset="0.0892" stop-color="#70fffc"/><stop offset="0.1338" stop-color="#35fffa"/><stop offset="0.1783" stop-color="#00fff9"/></radialGradient><radialGradient id="o60" gradientUnits="userSpaceOnUse" cx="1296.6" cy="383.6" r="380"><stop offset="0.1784" stop-color="#009995"/><stop offset="0.2770" stop-color="#009994"/><stop offset="0.4249" stop-color="#009992"/><stop offset="0.6303" stop-color="#009991"/><stop offset="1.0000" stop-color="#00998f"/></radialGradient><radialGradient id="i61" gradientUnits="userSpaceOnUse" cx="1296.6" cy="383.6" r="380"><stop offset="0.0008" stop-color="#fdffff"/><stop offset="0.0211" stop-color="#d8fffc"/><stop offset="0.0527" stop-color="#a3fff9"/><stop offset="0.0878" stop-color="#6efff6"/><stop offset="0.1316" stop-color="#34fff2"/><stop offset="0.1755" stop-color="#00ffee"/></radialGradient><radialGradient id="o61" gradientUnits="userSpaceOnUse" cx="1296.6" cy="383.6" r="380"><stop offset="0.1756" stop-color="#00998f"/><stop offset="0.2745" stop-color="#00998b"/><stop offset="0.4229" stop-color="#009987"/><stop offset="0.6290" stop-color="#009983"/><stop offset="1.0000" stop-color="#00997e"/></radialGradient><radialGradient id="i62" gradientUnits="userSpaceOnUse" cx="1296.6" cy="383.6" r="380"><stop offset="0.0008" stop-color="#fdffff"/><stop offset="0.0208" stop-color="#d8fffb"/><stop offset="0.0520" stop-color="#a2fff5"/><stop offset="0.0866" stop-color="#6dfff0"/><stop offset="0.1299" stop-color="#33ffea"/><stop offset="0.1732" stop-color="#00ffe5"/></radialGradient><radialGradient id="o62" gradientUnits="userSpaceOnUse" cx="1296.6" cy="383.6" r="380"><stop offset="0.1733" stop-color="#009989"/><stop offset="0.2725" stop-color="#009983"/><stop offset="0.4213" stop-color="#00997d"/><stop offset="0.6280" stop-color="#009977"/><stop offset="1.0000" stop-color="#009970"/></radialGradient><radialGradient id="i63" gradientUnits="userSpaceOnUse" cx="1296.6" cy="383.6" r="380"><stop offset="0.0008" stop-color="#fdffff"/><stop offset="0.0206" stop-color="#d7fff9"/><stop offset="0.0515" stop-color="#a1fff2"/><stop offset="0.0858" stop-color="#6cffea"/><stop offset="0.1286" stop-color="#32ffe2"/><stop offset="0.1715" stop-color="#00ffdb"/></radialGradient><radialGradient id="o63" gradientUnits="userSpaceOnUse" cx="1296.6" cy="383.6" r="380"><stop offset="0.1716" stop-color="#009984"/><stop offset="0.2709" stop-color="#00997c"/><stop offset="0.4201" stop-color="#009973"/><stop offset="0.6272" stop-color="#00996b"/><stop offset="1.0000" stop-color="#009963"/></radialGradient><radialGradient id="i64" gradientUnits="userSpaceOnUse" cx="1296.6" cy="383.6" r="380"><stop offset="0.0008" stop-color="#fdffff"/><stop offset="0.0204" stop-color="#d6fff8"/><stop offset="0.0511" stop-color="#a0ffee"/><stop offset="0.0851" stop-color="#6bffe5"/><stop offset="0.1277" stop-color="#31ffdb"/><stop offset="0.1702" stop-color="#00ffd3"/></radialGradient><radialGradient id="o64" gradientUnits="userSpaceOnUse" cx="1296.6" cy="383.6" r="380"><stop offset="0.1703" stop-color="#00997e"/><stop offset="0.2698" stop-color="#009975"/><stop offset="0.4192" stop-color="#00996b"/><stop offset="0.6266" stop-color="#009961"/><stop offset="1.0000" stop-color="#009957"/></radialGradient><radialGradient id="i65" gradientUnits="userSpaceOnUse" cx="1296.6" cy="383.6" r="380"><stop offset="0.0008" stop-color="#fdffff"/><stop offset="0.0203" stop-color="#d6fff6"/><stop offset="0.0508" stop-color="#9fffeb"/><stop offset="0.0847" stop-color="#6affe0"/><stop offset="0.1271" stop-color="#31ffd4"/><stop offset="0.1694" stop-color="#00ffca"/></radialGradient><radialGradient id="o65" gradientUnits="userSpaceOnUse" cx="1296.6" cy="383.6" r="380"><stop offset="0.1695" stop-color="#009979"/><stop offset="0.2691" stop-color="#00996e"/><stop offset="0.4186" stop-color="#009963"/><stop offset="0.6263" stop-color="#009958"/><stop offset="1.0000" stop-color="#00994d"/></radialGradient><radialGradient id="i66" gradientUnits="userSpaceOnUse" cx="1296.6" cy="383.6" r="380"><stop offset="0.0008" stop-color="#fdffff"/><stop offset="0.0203" stop-color="#d5fff5"/><stop offset="0.0508" stop-color="#9effe8"/><stop offset="0.0846" stop-color="#68ffdb"/><stop offset="0.1269" stop-color="#30ffce"/><stop offset="0.1691" stop-color="#00ffc2"/></radialGradient><radialGradient id="o66" gradientUnits="userSpaceOnUse" cx="1296.6" cy="383.6" r="380"><stop offset="0.1692" stop-color="#009975"/><stop offset="0.2689" stop-color="#009968"/><stop offset="0.4184" stop-color="#00995b"/><stop offset="0.6261" stop-color="#00994f"/><stop offset="1.0000" stop-color="#009943"/></radialGradient><radialGradient id="i67" gradientUnits="userSpaceOnUse" cx="1296.6" cy="383.6" r="380"><stop offset="0.0008" stop-color="#fdffff"/><stop offset="0.0203" stop-color="#d4fff4"/><stop offset="0.0508" stop-color="#9dffe5"/><stop offset="0.0847" stop-color="#67ffd6"/><stop offset="0.1270" stop-color="#2fffc7"/><stop offset="0.1693" stop-color="#00ffbb"/></radialGradient><radialGradient id="o67" gradientUnits="userSpaceOnUse" cx="1296.6" cy="383.6" r="380"><stop offset="0.1694" stop-color="#009970"/><stop offset="0.2690" stop-color="#009962"/><stop offset="0.4185" stop-color="#009954"/><stop offset="0.6262" stop-color="#009948"/><stop offset="1.0000" stop-color="#00993b"/></radialGradient><radialGradient id="i68" gradientUnits="userSpaceOnUse" cx="1296.6" cy="383.6" r="380"><stop offset="0.0008" stop-color="#fdfffe"/><stop offset="0.0204" stop-color="#d4fff2"/><stop offset="0.0510" stop-color="#9cffe1"/><stop offset="0.0850" stop-color="#66ffd2"/><stop offset="0.1275" stop-color="#2fffc1"/><stop offset="0.1699" stop-color="#00ffb3"/></radialGradient><radialGradient id="o68" gradientUnits="userSpaceOnUse" cx="1296.6" cy="383.6" r="380"><stop offset="0.1700" stop-color="#00996c"/><stop offset="0.2696" stop-color="#00995d"/><stop offset="0.4190" stop-color="#00994e"/><stop offset="0.6265" stop-color="#009940"/><stop offset="1.0000" stop-color="#009933"/></radialGradient><radialGradient id="i69" gradientUnits="userSpaceOnUse" cx="1296.6" cy="383.6" r="380"><stop offset="0.0008" stop-color="#fdfffe"/><stop offset="0.0205" stop-color="#d3fff1"/><stop offset="0.0513" stop-color="#9bffde"/><stop offset="0.0855" stop-color="#65ffcd"/><stop offset="0.1283" stop-color="#2effbb"/><stop offset="0.1710" stop-color="#00ffac"/></radialGradient><radialGradient id="o69" gradientUnits="userSpaceOnUse" cx="1296.6" cy="383.6" r="380"><stop offset="0.1711" stop-color="#009967"/><stop offset="0.2705" stop-color="#009957"/><stop offset="0.4197" stop-color="#009947"/><stop offset="0.6270" stop-color="#009939"/><stop offset="1.0000" stop-color="#00992b"/></radialGradient><radialGradient id="i70" gradientUnits="userSpaceOnUse" cx="1296.6" cy="383.6" r="380"><stop offset="0.0008" stop-color="#fdfffe"/><stop offset="0.0207" stop-color="#d3ffef"/><stop offset="0.0518" stop-color="#99ffdb"/><stop offset="0.0863" stop-color="#64ffc8"/><stop offset="0.1295" stop-color="#2dffb5"/><stop offset="0.1726" stop-color="#00ffa5"/></radialGradient><radialGradient id="o70" gradientUnits="userSpaceOnUse" cx="1296.6" cy="383.6" r="380"><stop offset="0.1727" stop-color="#009963"/><stop offset="0.2719" stop-color="#009952"/><stop offset="0.4208" stop-color="#009942"/><stop offset="0.6277" stop-color="#009933"/><stop offset="1.0000" stop-color="#009924"/></radialGradient><radialGradient id="i71" gradientUnits="userSpaceOnUse" cx="1296.6" cy="383.6" r="380"><stop offset="0.0008" stop-color="#fdfffe"/><stop offset="0.0210" stop-color="#d2ffee"/><stop offset="0.0524" stop-color="#98ffd8"/><stop offset="0.0874" stop-color="#63ffc4"/><stop offset="0.1311" stop-color="#2dffaf"/><stop offset="0.1747" stop-color="#00ff9e"/></radialGradient><radialGradient id="o71" gradientUnits="userSpaceOnUse" cx="1296.6" cy="383.6" r="380"><stop offset="0.1748" stop-color="#00995f"/><stop offset="0.2738" stop-color="#00994d"/><stop offset="0.4223" stop-color="#00993c"/><stop offset="0.6286" stop-color="#00992d"/><stop offset="1.0000" stop-color="#00991e"/></radialGradient><radialGradient id="i72" gradientUnits="userSpaceOnUse" cx="1296.6" cy="383.6" r="380"><stop offset="0.0008" stop-color="#fdfffe"/><stop offset="0.0213" stop-color="#d1ffec"/><stop offset="0.0532" stop-color="#97ffd5"/><stop offset="0.0887" stop-color="#62ffbf"/><stop offset="0.1330" stop-color="#2cffa9"/><stop offset="0.1773" stop-color="#00ff97"/></radialGradient><radialGradient id="o72" gradientUnits="userSpaceOnUse" cx="1296.6" cy="383.6" r="380"><stop offset="0.1774" stop-color="#00995b"/><stop offset="0.2761" stop-color="#009948"/><stop offset="0.4242" stop-color="#009937"/><stop offset="0.6298" stop-color="#009927"/><stop offset="1.0000" stop-color="#009918"/></radialGradient><radialGradient id="i73" gradientUnits="userSpaceOnUse" cx="1296.6" cy="383.6" r="380"><stop offset="0.0008" stop-color="#fdfffe"/><stop offset="0.0217" stop-color="#d1ffeb"/><stop offset="0.0542" stop-color="#96ffd1"/><stop offset="0.0903" stop-color="#61ffba"/><stop offset="0.1355" stop-color="#2bffa3"/><stop offset="0.1806" stop-color="#00ff90"/></radialGradient><radialGradient id="o73" gradientUnits="userSpaceOnUse" cx="1296.6" cy="383.6" r="380"><stop offset="0.1807" stop-color="#009956"/><stop offset="0.2790" stop-color="#009944"/><stop offset="0.4264" stop-color="#009932"/><stop offset="0.6313" stop-color="#009922"/><stop offset="1.0000" stop-color="#009912"/></radialGradient><radialGradient id="i74" gradientUnits="userSpaceOnUse" cx="1296.6" cy="383.6" r="380"><stop offset="0.0008" stop-color="#fdfffe"/><stop offset="0.0221" stop-color="#d0ffe9"/><stop offset="0.0553" stop-color="#95ffce"/><stop offset="0.0922" stop-color="#60ffb5"/><stop offset="0.1384" stop-color="#2bff9d"/><stop offset="0.1844" stop-color="#00ff89"/></radialGradient><radialGradient id="o74" gradientUnits="userSpaceOnUse" cx="1296.6" cy="383.6" r="380"><stop offset="0.1845" stop-color="#009952"/><stop offset="0.2824" stop-color="#00993f"/><stop offset="0.4291" stop-color="#00992d"/><stop offset="0.6330" stop-color="#00991d"/><stop offset="1.0000" stop-color="#00990d"/></radialGradient><radialGradient id="i75" gradientUnits="userSpaceOnUse" cx="1296.6" cy="383.6" r="380"><stop offset="0.0008" stop-color="#fdfffe"/><stop offset="0.0227" stop-color="#cfffe8"/><stop offset="0.0567" stop-color="#94ffcb"/><stop offset="0.0945" stop-color="#5fffb0"/><stop offset="0.1418" stop-color="#2aff96"/><stop offset="0.1890" stop-color="#00ff82"/></radialGradient><radialGradient id="o75" gradientUnits="userSpaceOnUse" cx="1296.6" cy="383.6" r="380"><stop offset="0.1891" stop-color="#00994e"/><stop offset="0.2864" stop-color="#00993b"/><stop offset="0.4323" stop-color="#009928"/><stop offset="0.6351" stop-color="#009918"/><stop offset="1.0000" stop-color="#009908"/></radialGradient><radialGradient id="i76" gradientUnits="userSpaceOnUse" cx="1296.6" cy="383.6" r="380"><stop offset="0.0008" stop-color="#fdfffe"/><stop offset="0.0233" stop-color="#cfffe6"/><stop offset="0.0583" stop-color="#93ffc7"/><stop offset="0.0972" stop-color="#5effab"/><stop offset="0.1458" stop-color="#29ff90"/><stop offset="0.1943" stop-color="#00ff7b"/></radialGradient><radialGradient id="o76" gradientUnits="userSpaceOnUse" cx="1296.6" cy="383.6" r="380"><stop offset="0.1945" stop-color="#00994a"/><stop offset="0.2911" stop-color="#009937"/><stop offset="0.4361" stop-color="#009924"/><stop offset="0.6375" stop-color="#009914"/><stop offset="1.0000" stop-color="#009903"/></radialGradient><radialGradient id="i77" gradientUnits="userSpaceOnUse" cx="1296.6" cy="383.6" r="380"><stop offset="0.0008" stop-color="#fdfffe"/><stop offset="0.0241" stop-color="#ceffe4"/><stop offset="0.0602" stop-color="#92ffc3"/><stop offset="0.1003" stop-color="#5dffa6"/><stop offset="0.1505" stop-color="#29ff8a"/><stop offset="0.2006" stop-color="#00ff73"/></radialGradient><radialGradient id="o77" gradientUnits="userSpaceOnUse" cx="1296.6" cy="383.6" r="380"><stop offset="0.2007" stop-color="#009945"/><stop offset="0.2965" stop-color="#009932"/><stop offset="0.4404" stop-color="#00991f"/><stop offset="0.6403" stop-color="#00990f"/><stop offset="1.0000" stop-color="#009900"/></radialGradient><radialGradient id="i78" gradientUnits="userSpaceOnUse" cx="1296.6" cy="383.6" r="380"><stop offset="0.0008" stop-color="#fdfffe"/><stop offset="0.0249" stop-color="#cdffe2"/><stop offset="0.0624" stop-color="#90ffbf"/><stop offset="0.1039" stop-color="#5bffa1"/><stop offset="0.1559" stop-color="#28ff83"/><stop offset="0.2078" stop-color="#00ff6c"/></radialGradient><radialGradient id="o78" gradientUnits="userSpaceOnUse" cx="1296.6" cy="383.6" r="380"><stop offset="0.2079" stop-color="#009941"/><stop offset="0.3029" stop-color="#00992e"/><stop offset="0.4455" stop-color="#00991b"/><stop offset="0.6435" stop-color="#00990b"/><stop offset="1.0000" stop-color="#009900"/></radialGradient><radialGradient id="i79" gradientUnits="userSpaceOnUse" cx="1296.6" cy="383.6" r="380"><stop offset="0.0008" stop-color="#fdfffe"/><stop offset="0.0259" stop-color="#ccffe0"/><stop offset="0.0649" stop-color="#8fffbb"/><stop offset="0.1081" stop-color="#5aff9b"/><stop offset="0.1622" stop-color="#27ff7c"/><stop offset="0.2162" stop-color="#00ff64"/></radialGradient><radialGradient id="o79" gradientUnits="userSpaceOnUse" cx="1296.6" cy="383.6" r="380"><stop offset="0.2163" stop-color="#00993c"/><stop offset="0.3103" stop-color="#009929"/><stop offset="0.4514" stop-color="#009917"/><stop offset="0.6473" stop-color="#009907"/><stop offset="1.0000" stop-color="#009900"/></radialGradient><radialGradient id="i80" gradientUnits="userSpaceOnUse" cx="1296.6" cy="383.6" r="380"><stop offset="0.0008" stop-color="#fdfffe"/><stop offset="0.0271" stop-color="#cbffde"/><stop offset="0.0678" stop-color="#8effb6"/><stop offset="0.1130" stop-color="#59ff95"/><stop offset="0.1695" stop-color="#27ff75"/><stop offset="0.2259" stop-color="#00ff5c"/></radialGradient><radialGradient id="o80" gradientUnits="userSpaceOnUse" cx="1296.6" cy="383.6" r="380"><stop offset="0.2260" stop-color="#009937"/><stop offset="0.3188" stop-color="#009925"/><stop offset="0.4582" stop-color="#009913"/><stop offset="0.6517" stop-color="#009903"/><stop offset="1.0000" stop-color="#009900"/></radialGradient><radialGradient id="i81" gradientUnits="userSpaceOnUse" cx="1296.6" cy="383.6" r="380"><stop offset="0.0008" stop-color="#fdfffe"/><stop offset="0.0285" stop-color="#caffdb"/><stop offset="0.0712" stop-color="#8cffb2"/><stop offset="0.1186" stop-color="#57ff8e"/><stop offset="0.1779" stop-color="#26ff6d"/><stop offset="0.2372" stop-color="#00ff53"/></radialGradient><radialGradient id="o81" gradientUnits="userSpaceOnUse" cx="1296.6" cy="383.6" r="380"><stop offset="0.2373" stop-color="#009932"/><stop offset="0.3288" stop-color="#009921"/><stop offset="0.4661" stop-color="#00990f"/><stop offset="0.6568" stop-color="#009900"/><stop offset="1.0000" stop-color="#009900"/></radialGradient><radialGradient id="i82" gradientUnits="userSpaceOnUse" cx="1296.6" cy="383.6" r="380"><stop offset="0.0008" stop-color="#fdfffe"/><stop offset="0.0301" stop-color="#c9ffd9"/><stop offset="0.0751" stop-color="#8affac"/><stop offset="0.1252" stop-color="#56ff87"/><stop offset="0.1879" stop-color="#25ff65"/><stop offset="0.2504" stop-color="#00ff4a"/></radialGradient><radialGradient id="o82" gradientUnits="userSpaceOnUse" cx="1296.6" cy="383.6" r="380"><stop offset="0.2505" stop-color="#00992d"/><stop offset="0.3404" stop-color="#00991c"/><stop offset="0.4753" stop-color="#00990a"/><stop offset="0.6627" stop-color="#009900"/><stop offset="1.0000" stop-color="#009900"/></radialGradient><radialGradient id="i83" gradientUnits="userSpaceOnUse" cx="1296.6" cy="383.6" r="380"><stop offset="0.0008" stop-color="#fdfffe"/><stop offset="0.0319" stop-color="#c8ffd6"/><stop offset="0.0798" stop-color="#88ffa7"/><stop offset="0.1330" stop-color="#54ff80"/><stop offset="0.1995" stop-color="#24ff5c"/><stop offset="0.2660" stop-color="#00ff41"/></radialGradient><radialGradient id="o83" gradientUnits="userSpaceOnUse" cx="1296.6" cy="383.6" r="380"><stop offset="0.2661" stop-color="#009927"/><stop offset="0.3541" stop-color="#009917"/><stop offset="0.4862" stop-color="#009906"/><stop offset="0.6697" stop-color="#009900"/><stop offset="1.0000" stop-color="#009900"/></radialGradient><radialGradient id="i84" gradientUnits="userSpaceOnUse" cx="1296.6" cy="383.6" r="380"><stop offset="0.0008" stop-color="#fdfffe"/><stop offset="0.0341" stop-color="#c6ffd3"/><stop offset="0.0854" stop-color="#86ffa0"/><stop offset="0.1423" stop-color="#52ff78"/><stop offset="0.2134" stop-color="#23ff52"/><stop offset="0.2845" stop-color="#00ff37"/></radialGradient><radialGradient id="o84" gradientUnits="userSpaceOnUse" cx="1296.6" cy="383.6" r="380"><stop offset="0.2846" stop-color="#009921"/><stop offset="0.3704" stop-color="#009912"/><stop offset="0.4992" stop-color="#009902"/><stop offset="0.6780" stop-color="#009900"/><stop offset="1.0000" stop-color="#009900"/></radialGradient><radialGradient id="i85" gradientUnits="userSpaceOnUse" cx="1296.6" cy="383.6" r="380"><stop offset="0.0008" stop-color="#fefffe"/><stop offset="0.0368" stop-color="#c5ffcf"/><stop offset="0.0920" stop-color="#84ff99"/><stop offset="0.1533" stop-color="#50ff6f"/><stop offset="0.2300" stop-color="#22ff48"/><stop offset="0.3066" stop-color="#00ff2c"/></radialGradient><radialGradient id="o85" gradientUnits="userSpaceOnUse" cx="1296.6" cy="383.6" r="380"><stop offset="0.3067" stop-color="#00991a"/><stop offset="0.3899" stop-color="#00990d"/><stop offset="0.5147" stop-color="#009900"/><stop offset="0.6880" stop-color="#009900"/><stop offset="1.0000" stop-color="#009900"/></radialGradient><radialGradient id="i86" gradientUnits="userSpaceOnUse" cx="1296.6" cy="383.6" r="380"><stop offset="0.0008" stop-color="#fefffe"/><stop offset="0.0400" stop-color="#c3ffcb"/><stop offset="0.1001" stop-color="#81ff91"/><stop offset="0.1668" stop-color="#4eff65"/><stop offset="0.2501" stop-color="#21ff3d"/><stop offset="0.3335" stop-color="#00ff20"/></radialGradient><radialGradient id="o86" gradientUnits="userSpaceOnUse" cx="1296.6" cy="383.6" r="380"><stop offset="0.3336" stop-color="#009913"/><stop offset="0.4135" stop-color="#009907"/><stop offset="0.5335" stop-color="#009900"/><stop offset="0.7001" stop-color="#009900"/><stop offset="1.0000" stop-color="#009900"/></radialGradient><radialGradient id="i87" gradientUnits="userSpaceOnUse" cx="1296.6" cy="383.6" r="380"><stop offset="0.0008" stop-color="#fefffe"/><stop offset="0.0440" stop-color="#c1ffc5"/><stop offset="0.1100" stop-color="#7fff88"/><stop offset="0.1833" stop-color="#4cff59"/><stop offset="0.2750" stop-color="#1fff30"/><stop offset="0.3666" stop-color="#00ff13"/></radialGradient><radialGradient id="o87" gradientUnits="userSpaceOnUse" cx="1296.6" cy="383.6" r="380"><stop offset="0.3667" stop-color="#00990c"/><stop offset="0.4426" stop-color="#009901"/><stop offset="0.5566" stop-color="#009900"/><stop offset="0.7150" stop-color="#009900"/><stop offset="1.0000" stop-color="#009900"/></radialGradient><radialGradient id="i88" gradientUnits="userSpaceOnUse" cx="1296.6" cy="383.6" r="380"><stop offset="0.0008" stop-color="#fefffe"/><stop offset="0.0490" stop-color="#beffbf"/><stop offset="0.1225" stop-color="#7bff7e"/><stop offset="0.2041" stop-color="#49ff4c"/><stop offset="0.3062" stop-color="#1eff22"/><stop offset="0.4082" stop-color="#00ff05"/></radialGradient><radialGradient id="o88" gradientUnits="userSpaceOnUse" cx="1296.6" cy="383.6" r="380"><stop offset="0.4083" stop-color="#009903"/><stop offset="0.4793" stop-color="#009900"/><stop offset="0.5858" stop-color="#009900"/><stop offset="0.7337" stop-color="#009900"/><stop offset="1.0000" stop-color="#009900"/></radialGradient><radialGradient id="i89" gradientUnits="userSpaceOnUse" cx="1296.6" cy="383.6" r="380"><stop offset="0.0008" stop-color="#fefffe"/><stop offset="0.0498" stop-color="#c1ffbe"/><stop offset="0.1244" stop-color="#81ff7b"/><stop offset="0.2073" stop-color="#50ff49"/><stop offset="0.3109" stop-color="#27ff1e"/><stop offset="0.4145" stop-color="#0aff00"/></radialGradient><radialGradient id="o89" gradientUnits="userSpaceOnUse" cx="1296.6" cy="383.6" r="380"><stop offset="0.4146" stop-color="#069900"/><stop offset="0.4848" stop-color="#009900"/><stop offset="0.5902" stop-color="#009900"/><stop offset="0.7366" stop-color="#009900"/><stop offset="1.0000" stop-color="#009900"/></radialGradient><radialGradient id="i90" gradientUnits="userSpaceOnUse" cx="1296.6" cy="383.6" r="380"><stop offset="0.0008" stop-color="#fefffe"/><stop offset="0.0482" stop-color="#c6ffc0"/><stop offset="0.1205" stop-color="#8bff7d"/><stop offset="0.2008" stop-color="#5dff4b"/><stop offset="0.3012" stop-color="#36ff1f"/><stop offset="0.4016" stop-color="#1aff00"/></radialGradient><radialGradient id="o90" gradientUnits="userSpaceOnUse" cx="1296.6" cy="383.6" r="380"><stop offset="0.4017" stop-color="#109900"/><stop offset="0.4734" stop-color="#069900"/><stop offset="0.5811" stop-color="#009900"/><stop offset="0.7307" stop-color="#009900"/><stop offset="1.0000" stop-color="#009900"/></radialGradient><radialGradient id="i91" gradientUnits="userSpaceOnUse" cx="1296.6" cy="383.6" r="380"><stop offset="0.0008" stop-color="#fefffe"/><stop offset="0.0469" stop-color="#cbffc1"/><stop offset="0.1171" stop-color="#94ff7f"/><stop offset="0.1952" stop-color="#6aff4c"/><stop offset="0.2929" stop-color="#44ff20"/><stop offset="0.3904" stop-color="#2aff00"/></radialGradient><radialGradient id="o91" gradientUnits="userSpaceOnUse" cx="1296.6" cy="383.6" r="380"><stop offset="0.3905" stop-color="#199900"/><stop offset="0.4636" stop-color="#109900"/><stop offset="0.5733" stop-color="#059900"/><stop offset="0.7257" stop-color="#009900"/><stop offset="1.0000" stop-color="#009900"/></radialGradient><radialGradient id="i92" gradientUnits="userSpaceOnUse" cx="1296.6" cy="383.6" r="380"><stop offset="0.0008" stop-color="#fefffe"/><stop offset="0.0457" stop-color="#d0ffc3"/><stop offset="0.1143" stop-color="#9eff81"/><stop offset="0.1905" stop-color="#76ff4e"/><stop offset="0.2857" stop-color="#53ff21"/><stop offset="0.3809" stop-color="#3aff00"/></radialGradient><radialGradient id="o92" gradientUnits="userSpaceOnUse" cx="1296.6" cy="383.6" r="380"><stop offset="0.3810" stop-color="#239900"/><stop offset="0.4552" stop-color="#199900"/><stop offset="0.5667" stop-color="#0f9900"/><stop offset="0.7214" stop-color="#049900"/><stop offset="1.0000" stop-color="#009900"/></radialGradient><radialGradient id="i93" gradientUnits="userSpaceOnUse" cx="1296.6" cy="383.6" r="380"><stop offset="0.0008" stop-color="#fefffe"/><stop offset="0.0447" stop-color="#d5ffc4"/><stop offset="0.1119" stop-color="#a7ff83"/><stop offset="0.1864" stop-color="#82ff50"/><stop offset="0.2797" stop-color="#61ff21"/><stop offset="0.3728" stop-color="#4aff00"/></radialGradient><radialGradient id="o93" gradientUnits="userSpaceOnUse" cx="1296.6" cy="383.6" r="380"><stop offset="0.3729" stop-color="#2c9900"/><stop offset="0.4481" stop-color="#239900"/><stop offset="0.5610" stop-color="#199900"/><stop offset="0.7178" stop-color="#0e9900"/><stop offset="1.0000" stop-color="#019900"/></radialGradient><radialGradient id="i94" gradientUnits="userSpaceOnUse" cx="1296.6" cy="383.6" r="380"><stop offset="0.0008" stop-color="#fefffe"/><stop offset="0.0439" stop-color="#daffc5"/><stop offset="0.1098" stop-color="#b0ff85"/><stop offset="0.1831" stop-color="#8eff51"/><stop offset="0.2746" stop-color="#70ff22"/><stop offset="0.3661" stop-color="#5aff00"/></radialGradient><radialGradient id="o94" gradientUnits="userSpaceOnUse" cx="1296.6" cy="383.6" r="380"><stop offset="0.3662" stop-color="#369900"/><stop offset="0.4422" stop-color="#2d9900"/><stop offset="0.5563" stop-color="#239900"/><stop offset="0.7148" stop-color="#199900"/><stop offset="1.0000" stop-color="#0c9900"/></radialGradient><radialGradient id="i95" gradientUnits="userSpaceOnUse" cx="1296.6" cy="383.6" r="380"><stop offset="0.0008" stop-color="#fefffe"/><stop offset="0.0433" stop-color="#deffc7"/><stop offset="0.1082" stop-color="#b9ff87"/><stop offset="0.1803" stop-color="#9bff53"/><stop offset="0.2704" stop-color="#7fff23"/><stop offset="0.3605" stop-color="#6bff00"/></radialGradient><radialGradient id="o95" gradientUnits="userSpaceOnUse" cx="1296.6" cy="383.6" r="380"><stop offset="0.3606" stop-color="#409900"/><stop offset="0.4373" stop-color="#389900"/><stop offset="0.5524" stop-color="#2e9900"/><stop offset="0.7123" stop-color="#249900"/><stop offset="1.0000" stop-color="#199900"/></radialGradient><radialGradient id="i96" gradientUnits="userSpaceOnUse" cx="1296.6" cy="383.6" r="380"><stop offset="0.0008" stop-color="#fefffe"/><stop offset="0.0427" stop-color="#e3ffc8"/><stop offset="0.1069" stop-color="#c2ff89"/><stop offset="0.1781" stop-color="#a7ff54"/><stop offset="0.2671" stop-color="#8fff24"/><stop offset="0.3561" stop-color="#7cff00"/></radialGradient><radialGradient id="o96" gradientUnits="userSpaceOnUse" cx="1296.6" cy="383.6" r="380"><stop offset="0.3562" stop-color="#4a9900"/><stop offset="0.4334" stop-color="#439900"/><stop offset="0.5493" stop-color="#3a9900"/><stop offset="0.7103" stop-color="#319900"/><stop offset="1.0000" stop-color="#269900"/></radialGradient><radialGradient id="i97" gradientUnits="userSpaceOnUse" cx="1296.6" cy="383.6" r="380"><stop offset="0.0008" stop-color="#fefffe"/><stop offset="0.0423" stop-color="#e7ffc9"/><stop offset="0.1058" stop-color="#cbff8b"/><stop offset="0.1764" stop-color="#b4ff56"/><stop offset="0.2646" stop-color="#9eff25"/><stop offset="0.3528" stop-color="#8eff00"/></radialGradient><radialGradient id="o97" gradientUnits="userSpaceOnUse" cx="1296.6" cy="383.6" r="380"><stop offset="0.3529" stop-color="#559900"/><stop offset="0.4305" stop-color="#4e9900"/><stop offset="0.5470" stop-color="#469900"/><stop offset="0.7088" stop-color="#3e9900"/><stop offset="1.0000" stop-color="#349900"/></radialGradient><radialGradient id="i98" gradientUnits="userSpaceOnUse" cx="1296.6" cy="383.6" r="380"><stop offset="0.0008" stop-color="#fffffe"/><stop offset="0.0421" stop-color="#ecffca"/><stop offset="0.1051" stop-color="#d5ff8c"/><stop offset="0.1752" stop-color="#c1ff58"/><stop offset="0.2629" stop-color="#afff26"/><stop offset="0.3504" stop-color="#a1ff00"/></radialGradient><radialGradient id="o98" gradientUnits="userSpaceOnUse" cx="1296.6" cy="383.6" r="380"><stop offset="0.3505" stop-color="#609900"/><stop offset="0.4284" stop-color="#5a9900"/><stop offset="0.5453" stop-color="#539900"/><stop offset="0.7077" stop-color="#4c9900"/><stop offset="1.0000" stop-color="#439900"/></radialGradient><radialGradient id="i99" gradientUnits="userSpaceOnUse" cx="1296.6" cy="383.6" r="380"><stop offset="0.0008" stop-color="#fffffe"/><stop offset="0.0419" stop-color="#f0ffcc"/><stop offset="0.1047" stop-color="#deff8e"/><stop offset="0.1746" stop-color="#cfff5a"/><stop offset="0.2618" stop-color="#c0ff27"/><stop offset="0.3491" stop-color="#b5ff00"/></radialGradient><radialGradient id="o99" gradientUnits="userSpaceOnUse" cx="1296.6" cy="383.6" r="380"><stop offset="0.3492" stop-color="#6c9900"/><stop offset="0.4272" stop-color="#679900"/><stop offset="0.5444" stop-color="#629900"/><stop offset="0.7071" stop-color="#5b9900"/><stop offset="1.0000" stop-color="#549900"/></radialGradient><radialGradient id="i100" gradientUnits="userSpaceOnUse" cx="1296.6" cy="383.6" r="380"><stop offset="0.0008" stop-color="#fffffe"/><stop offset="0.0418" stop-color="#f4ffcd"/><stop offset="0.1046" stop-color="#e8ff90"/><stop offset="0.1744" stop-color="#ddff5b"/><stop offset="0.2615" stop-color="#d2ff28"/><stop offset="0.3487" stop-color="#c9ff00"/></radialGradient><radialGradient id="o100" gradientUnits="userSpaceOnUse" cx="1296.6" cy="383.6" r="380"><stop offset="0.3488" stop-color="#799900"/><stop offset="0.4269" stop-color="#759900"/><stop offset="0.5441" stop-color="#719900"/><stop offset="0.7069" stop-color="#6c9900"/><stop offset="1.0000" stop-color="#669900"/></radialGradient><radialGradient id="i101" gradientUnits="userSpaceOnUse" cx="1296.6" cy="383.6" r="380"><stop offset="0.0008" stop-color="#fffffe"/><stop offset="0.0419" stop-color="#f9ffce"/><stop offset="0.1048" stop-color="#f2ff92"/><stop offset="0.1746" stop-color="#ebff5d"/><stop offset="0.2620" stop-color="#e5ff29"/><stop offset="0.3492" stop-color="#e0ff00"/></radialGradient><radialGradient id="o101" gradientUnits="userSpaceOnUse" cx="1296.6" cy="383.6" r="380"><stop offset="0.3493" stop-color="#869900"/><stop offset="0.4274" stop-color="#849900"/><stop offset="0.5445" stop-color="#819900"/><stop offset="0.7072" stop-color="#7e9900"/><stop offset="1.0000" stop-color="#7b9900"/></radialGradient><radialGradient id="i102" gradientUnits="userSpaceOnUse" cx="1296.6" cy="383.6" r="380"><stop offset="0.0008" stop-color="#fffffe"/><stop offset="0.0421" stop-color="#feffd0"/><stop offset="0.1052" stop-color="#fcff95"/><stop offset="0.1754" stop-color="#faff5f"/><stop offset="0.2631" stop-color="#f9ff2a"/><stop offset="0.3508" stop-color="#f8ff00"/></radialGradient><radialGradient id="o102" gradientUnits="userSpaceOnUse" cx="1296.6" cy="383.6" r="380"><stop offset="0.3509" stop-color="#959900"/><stop offset="0.4287" stop-color="#949900"/><stop offset="0.5456" stop-color="#939900"/><stop offset="0.7079" stop-color="#939900"/><stop offset="1.0000" stop-color="#929900"/></radialGradient><radialGradient id="i103" gradientUnits="userSpaceOnUse" cx="1296.6" cy="383.6" r="380"><stop offset="0.0008" stop-color="#fffffe"/><stop offset="0.0424" stop-color="#fffcce"/><stop offset="0.1060" stop-color="#fff892"/><stop offset="0.1767" stop-color="#fff45d"/><stop offset="0.2650" stop-color="#fff029"/><stop offset="0.3533" stop-color="#ffee00"/></radialGradient><radialGradient id="o103" gradientUnits="userSpaceOnUse" cx="1296.6" cy="383.6" r="380"><stop offset="0.3534" stop-color="#998f00"/><stop offset="0.4309" stop-color="#998d00"/><stop offset="0.5473" stop-color="#998c00"/><stop offset="0.7090" stop-color="#998a00"/><stop offset="1.0000" stop-color="#998800"/></radialGradient><radialGradient id="i104" gradientUnits="userSpaceOnUse" cx="1296.6" cy="383.6" r="380"><stop offset="0.0008" stop-color="#fffffe"/><stop offset="0.0428" stop-color="#fff7cc"/><stop offset="0.1071" stop-color="#ffee8f"/><stop offset="0.1784" stop-color="#ffe55a"/><stop offset="0.2676" stop-color="#ffdd27"/><stop offset="0.3568" stop-color="#ffd700"/></radialGradient><radialGradient id="o104" gradientUnits="userSpaceOnUse" cx="1296.6" cy="383.6" r="380"><stop offset="0.3569" stop-color="#998100"/><stop offset="0.4340" stop-color="#997f00"/><stop offset="0.5498" stop-color="#997c00"/><stop offset="0.7106" stop-color="#997800"/><stop offset="1.0000" stop-color="#997400"/></radialGradient><radialGradient id="i105" gradientUnits="userSpaceOnUse" cx="1296.6" cy="383.6" r="380"><stop offset="0.0008" stop-color="#fffffe"/><stop offset="0.0434" stop-color="#fff2c9"/><stop offset="0.1084" stop-color="#ffe48b"/><stop offset="0.1807" stop-color="#ffd756"/><stop offset="0.2711" stop-color="#ffcc25"/><stop offset="0.3614" stop-color="#ffc300"/></radialGradient><radialGradient id="o105" gradientUnits="userSpaceOnUse" cx="1296.6" cy="383.6" r="380"><stop offset="0.3615" stop-color="#997500"/><stop offset="0.4381" stop-color="#997100"/><stop offset="0.5530" stop-color="#996d00"/><stop offset="0.7127" stop-color="#996900"/><stop offset="1.0000" stop-color="#996300"/></radialGradient><radialGradient id="i106" gradientUnits="userSpaceOnUse" cx="1296.6" cy="383.6" r="380"><stop offset="0.0008" stop-color="#fffffe"/><stop offset="0.0441" stop-color="#ffeec7"/><stop offset="0.1102" stop-color="#ffda87"/><stop offset="0.1836" stop-color="#ffca53"/><stop offset="0.2754" stop-color="#ffbb23"/><stop offset="0.3671" stop-color="#ffb000"/></radialGradient><radialGradient id="o106" gradientUnits="userSpaceOnUse" cx="1296.6" cy="383.6" r="380"><stop offset="0.3673" stop-color="#996a00"/><stop offset="0.4431" stop-color="#996600"/><stop offset="0.5570" stop-color="#996100"/><stop offset="0.7152" stop-color="#995b00"/><stop offset="1.0000" stop-color="#995500"/></radialGradient><radialGradient id="i107" gradientUnits="userSpaceOnUse" cx="1296.6" cy="383.6" r="380"><stop offset="0.0008" stop-color="#fffffe"/><stop offset="0.0449" stop-color="#ffe9c4"/><stop offset="0.1123" stop-color="#ffd184"/><stop offset="0.1871" stop-color="#ffbd50"/><stop offset="0.2806" stop-color="#ffac22"/><stop offset="0.3741" stop-color="#ff9f00"/></radialGradient><radialGradient id="o107" gradientUnits="userSpaceOnUse" cx="1296.6" cy="383.6" r="380"><stop offset="0.3742" stop-color="#996000"/><stop offset="0.4493" stop-color="#995b00"/><stop offset="0.5619" stop-color="#995500"/><stop offset="0.7184" stop-color="#994f00"/><stop offset="1.0000" stop-color="#994900"/></radialGradient><radialGradient id="i108" gradientUnits="userSpaceOnUse" cx="1296.6" cy="383.6" r="380"><stop offset="0.0008" stop-color="#fffffe"/><stop offset="0.0459" stop-color="#ffe4c2"/><stop offset="0.1147" stop-color="#ffc780"/><stop offset="0.1912" stop-color="#ffb14d"/><stop offset="0.2869" stop-color="#ff9d20"/><stop offset="0.3824" stop-color="#ff8f00"/></radialGradient><radialGradient id="o108" gradientUnits="userSpaceOnUse" cx="1296.6" cy="383.6" r="380"><stop offset="0.3825" stop-color="#995600"/><stop offset="0.4566" stop-color="#995100"/><stop offset="0.5677" stop-color="#994b00"/><stop offset="0.7221" stop-color="#994500"/><stop offset="1.0000" stop-color="#993e00"/></radialGradient><radialGradient id="i109" gradientUnits="userSpaceOnUse" cx="1296.6" cy="383.6" r="380"><stop offset="0.0008" stop-color="#fffefe"/><stop offset="0.0471" stop-color="#ffdfbf"/><stop offset="0.1177" stop-color="#ffbe7d"/><stop offset="0.1961" stop-color="#ffa54a"/><stop offset="0.2942" stop-color="#ff8f1f"/><stop offset="0.3922" stop-color="#ff8000"/></radialGradient><radialGradient id="o109" gradientUnits="userSpaceOnUse" cx="1296.6" cy="383.6" r="380"><stop offset="0.3923" stop-color="#994d00"/><stop offset="0.4652" stop-color="#994800"/><stop offset="0.5746" stop-color="#994200"/><stop offset="0.7265" stop-color="#993b00"/><stop offset="1.0000" stop-color="#993400"/></radialGradient><radialGradient id="i110" gradientUnits="userSpaceOnUse" cx="1296.6" cy="383.6" r="380"><stop offset="0.0008" stop-color="#fffefe"/><stop offset="0.0484" stop-color="#ffdabd"/><stop offset="0.1211" stop-color="#ffb579"/><stop offset="0.2019" stop-color="#ff9947"/><stop offset="0.3028" stop-color="#ff821d"/><stop offset="0.4037" stop-color="#ff7200"/></radialGradient><radialGradient id="o110" gradientUnits="userSpaceOnUse" cx="1296.6" cy="383.6" r="380"><stop offset="0.4038" stop-color="#994400"/><stop offset="0.4753" stop-color="#993f00"/><stop offset="0.5826" stop-color="#993900"/><stop offset="0.7317" stop-color="#993300"/><stop offset="1.0000" stop-color="#992b00"/></radialGradient><radialGradient id="i111" gradientUnits="userSpaceOnUse" cx="1296.6" cy="383.6" r="380"><stop offset="0.0008" stop-color="#fffefe"/><stop offset="0.0500" stop-color="#ffd5ba"/><stop offset="0.1251" stop-color="#ffac76"/><stop offset="0.2085" stop-color="#ff8e44"/><stop offset="0.3128" stop-color="#ff751c"/><stop offset="0.4170" stop-color="#ff6500"/></radialGradient><radialGradient id="o111" gradientUnits="userSpaceOnUse" cx="1296.6" cy="383.6" r="380"><stop offset="0.4171" stop-color="#993c00"/><stop offset="0.4870" stop-color="#993700"/><stop offset="0.5919" stop-color="#993100"/><stop offset="0.7377" stop-color="#992b00"/><stop offset="1.0000" stop-color="#992300"/></radialGradient><radialGradient id="i112" gradientUnits="userSpaceOnUse" cx="1296.6" cy="383.6" r="380"><stop offset="0.0008" stop-color="#fffefe"/><stop offset="0.0519" stop-color="#ffd0b7"/><stop offset="0.1297" stop-color="#ffa272"/><stop offset="0.2162" stop-color="#ff8342"/><stop offset="0.3243" stop-color="#ff691a"/><stop offset="0.4324" stop-color="#ff5800"/></radialGradient><radialGradient id="o112" gradientUnits="userSpaceOnUse" cx="1296.6" cy="383.6" r="380"><stop offset="0.4325" stop-color="#993500"/><stop offset="0.5006" stop-color="#993000"/><stop offset="0.6027" stop-color="#992a00"/><stop offset="0.7446" stop-color="#992300"/><stop offset="1.0000" stop-color="#991c00"/></radialGradient><radialGradient id="i113" gradientUnits="userSpaceOnUse" cx="1296.6" cy="383.6" r="380"><stop offset="0.0008" stop-color="#fffefe"/><stop offset="0.0540" stop-color="#ffcab4"/><stop offset="0.1351" stop-color="#ff996e"/><stop offset="0.2252" stop-color="#ff773f"/><stop offset="0.3378" stop-color="#ff5d19"/><stop offset="0.4503" stop-color="#ff4b00"/></radialGradient><radialGradient id="o113" gradientUnits="userSpaceOnUse" cx="1296.6" cy="383.6" r="380"><stop offset="0.4504" stop-color="#992d00"/><stop offset="0.5163" stop-color="#992800"/><stop offset="0.6152" stop-color="#992300"/><stop offset="0.7527" stop-color="#991d00"/><stop offset="1.0000" stop-color="#991500"/></radialGradient><radialGradient id="i114" gradientUnits="userSpaceOnUse" cx="1296.6" cy="383.6" r="380"><stop offset="0.0008" stop-color="#fffefe"/><stop offset="0.0565" stop-color="#ffc4b1"/><stop offset="0.1413" stop-color="#ff8f6b"/><stop offset="0.2356" stop-color="#ff6c3c"/><stop offset="0.3534" stop-color="#ff5118"/><stop offset="0.4711" stop-color="#ff3f00"/></radialGradient><radialGradient id="o114" gradientUnits="userSpaceOnUse" cx="1296.6" cy="383.6" r="380"><stop offset="0.4712" stop-color="#992600"/><stop offset="0.5346" stop-color="#992100"/><stop offset="0.6298" stop-color="#991c00"/><stop offset="0.7620" stop-color="#991600"/><stop offset="1.0000" stop-color="#990f00"/></radialGradient><radialGradient id="i115" gradientUnits="userSpaceOnUse" cx="1296.6" cy="383.6" r="380"><stop offset="0.0008" stop-color="#fffefe"/><stop offset="0.0594" stop-color="#ffbeae"/><stop offset="0.1486" stop-color="#ff8567"/><stop offset="0.2477" stop-color="#ff6139"/><stop offset="0.3715" stop-color="#ff4517"/><stop offset="0.4953" stop-color="#ff3300"/></radialGradient><radialGradient id="o115" gradientUnits="userSpaceOnUse" cx="1296.6" cy="383.6" r="380"><stop offset="0.4954" stop-color="#991f00"/><stop offset="0.5559" stop-color="#991b00"/><stop offset="0.6468" stop-color="#991600"/><stop offset="0.7729" stop-color="#991000"/><stop offset="1.0000" stop-color="#990a00"/></radialGradient><radialGradient id="i116" gradientUnits="userSpaceOnUse" cx="1296.6" cy="383.6" r="380"><stop offset="0.0008" stop-color="#fffefe"/><stop offset="0.0629" stop-color="#ffb7aa"/><stop offset="0.1571" stop-color="#ff7b63"/><stop offset="0.2619" stop-color="#ff5637"/><stop offset="0.3928" stop-color="#ff3915"/><stop offset="0.5237" stop-color="#ff2700"/></radialGradient><radialGradient id="o116" gradientUnits="userSpaceOnUse" cx="1296.6" cy="383.6" r="380"><stop offset="0.5238" stop-color="#991800"/><stop offset="0.5809" stop-color="#991400"/><stop offset="0.6666" stop-color="#991000"/><stop offset="0.7857" stop-color="#990b00"/><stop offset="1.0000" stop-color="#990400"/></radialGradient><radialGradient id="i117" gradientUnits="userSpaceOnUse" cx="1296.6" cy="383.6" r="380"><stop offset="0.0008" stop-color="#fffefe"/><stop offset="0.0669" stop-color="#ffb0a6"/><stop offset="0.1672" stop-color="#ff715f"/><stop offset="0.2786" stop-color="#ff4a34"/><stop offset="0.4179" stop-color="#ff2e14"/><stop offset="0.5572" stop-color="#ff1c00"/></radialGradient><radialGradient id="o117" gradientUnits="userSpaceOnUse" cx="1296.6" cy="383.6" r="380"><stop offset="0.5573" stop-color="#991100"/><stop offset="0.6103" stop-color="#990e00"/><stop offset="0.6900" stop-color="#990a00"/><stop offset="0.8007" stop-color="#990500"/><stop offset="1.0000" stop-color="#990000"/></radialGradient><radialGradient id="i118" gradientUnits="userSpaceOnUse" cx="1296.6" cy="383.6" r="380"><stop offset="0.0008" stop-color="#fffefe"/><stop offset="0.0716" stop-color="#ffa8a2"/><stop offset="0.1791" stop-color="#ff665b"/><stop offset="0.2985" stop-color="#ff3e31"/><stop offset="0.4477" stop-color="#ff2213"/><stop offset="0.5969" stop-color="#ff1100"/></radialGradient><radialGradient id="o118" gradientUnits="userSpaceOnUse" cx="1296.6" cy="383.6" r="380"><stop offset="0.5970" stop-color="#990a00"/><stop offset="0.6453" stop-color="#990700"/><stop offset="0.7179" stop-color="#990400"/><stop offset="0.8186" stop-color="#990000"/><stop offset="1.0000" stop-color="#990000"/></radialGradient><radialGradient id="i119" gradientUnits="userSpaceOnUse" cx="1296.6" cy="383.6" r="380"><stop offset="0.0008" stop-color="#fffefe"/><stop offset="0.0774" stop-color="#ff9f9d"/><stop offset="0.1934" stop-color="#ff5a57"/><stop offset="0.3224" stop-color="#ff322e"/><stop offset="0.4835" stop-color="#ff1611"/><stop offset="0.6447" stop-color="#ff0500"/></radialGradient><radialGradient id="o119" gradientUnits="userSpaceOnUse" cx="1296.6" cy="383.6" r="380"><stop offset="0.6448" stop-color="#990300"/><stop offset="0.6874" stop-color="#990100"/><stop offset="0.7513" stop-color="#990000"/><stop offset="0.8401" stop-color="#990000"/><stop offset="1.0000" stop-color="#990000"/></radialGradient><clipPath id="tri"><polygon points="1551.10,382.98 1286.75,222.60 1170.12,543.36"/></clipPath></defs><g clip-path="url(#loc)"><path d="M1296.6 383.6L1695.6 381.6L1695.0 406.4Z" fill="url(#o0)"/><path d="M1296.6 383.6L1695.2 402.5L1693.2 427.3Z" fill="url(#o1)"/><path d="M1296.6 383.6L1693.6 423.3L1690.4 448.0Z" fill="url(#o2)"/><path d="M1296.6 383.6L1691.0 444.0L1686.5 468.5Z" fill="url(#o3)"/><path d="M1296.6 383.6L1687.3 464.6L1681.5 488.8Z" fill="url(#o4)"/><path d="M1296.6 383.6L1682.5 484.9L1675.5 508.8Z" fill="url(#o5)"/><path d="M1296.6 383.6L1676.7 505.0L1668.4 528.4Z" fill="url(#o6)"/><path d="M1296.6 383.6L1669.8 524.7L1660.3 547.7Z" fill="url(#o7)"/><path d="M1296.6 383.6L1661.9 544.0L1651.2 566.5Z" fill="url(#o8)"/><path d="M1296.6 383.6L1653.0 562.9L1641.2 584.8Z" fill="url(#o9)"/><path d="M1296.6 383.6L1643.2 581.3L1630.2 602.6Z" fill="url(#o10)"/><path d="M1296.6 383.6L1632.3 599.2L1618.2 619.7Z" fill="url(#o11)"/><path d="M1296.6 383.6L1620.6 616.5L1605.4 636.2Z" fill="url(#o12)"/><path d="M1296.6 383.6L1608.0 633.1L1591.8 652.0Z" fill="url(#o13)"/><path d="M1296.6 383.6L1594.5 649.1L1577.3 667.1Z" fill="url(#o14)"/><path d="M1296.6 383.6L1580.2 664.3L1562.1 681.4Z" fill="url(#o15)"/><path d="M1296.6 383.6L1565.1 678.8L1546.2 694.9Z" fill="url(#o16)"/><path d="M1296.6 383.6L1549.3 692.4L1529.5 707.5Z" fill="url(#o17)"/><path d="M1296.6 383.6L1532.8 705.2L1512.3 719.3Z" fill="url(#o18)"/><path d="M1296.6 383.6L1515.6 717.1L1494.4 730.1Z" fill="url(#o19)"/><path d="M1296.6 383.6L1497.8 728.1L1476.0 740.0Z" fill="url(#o20)"/><path d="M1296.6 383.6L1479.5 738.2L1457.1 748.9Z" fill="url(#o21)"/><path d="M1296.6 383.6L1460.7 747.3L1437.7 756.8Z" fill="url(#o22)"/><path d="M1296.6 383.6L1441.5 755.4L1418.0 763.7Z" fill="url(#o23)"/><path d="M1296.6 383.6L1421.8 762.4L1398.0 769.5Z" fill="url(#o24)"/><path d="M1296.6 383.6L1401.8 768.5L1377.6 774.3Z" fill="url(#o25)"/><path d="M1296.6 383.6L1381.5 773.4L1357.1 778.0Z" fill="url(#o26)"/><path d="M1296.6 383.6L1361.0 777.3L1336.3 780.6Z" fill="url(#o27)"/><path d="M1296.6 383.6L1340.3 780.2L1315.5 782.1Z" fill="url(#o28)"/><path d="M1296.6 383.6L1319.5 781.9L1294.6 782.6Z" fill="url(#o29)"/><path d="M1296.6 383.6L1298.6 782.6L1273.8 781.9Z" fill="url(#o30)"/><path d="M1296.6 383.6L1277.7 782.1L1252.9 780.2Z" fill="url(#o31)"/><path d="M1296.6 383.6L1256.9 780.6L1232.2 777.3Z" fill="url(#o32)"/><path d="M1296.6 383.6L1236.2 778.0L1211.7 773.4Z" fill="url(#o33)"/><path d="M1296.6 383.6L1215.6 774.3L1191.4 768.5Z" fill="url(#o34)"/><path d="M1296.6 383.6L1195.3 769.5L1171.4 762.4Z" fill="url(#o35)"/><path d="M1296.6 383.6L1175.2 763.7L1151.8 755.4Z" fill="url(#o36)"/><path d="M1296.6 383.6L1155.5 756.8L1132.5 747.3Z" fill="url(#o37)"/><path d="M1296.6 383.6L1136.2 748.9L1113.7 738.2Z" fill="url(#o38)"/><path d="M1296.6 383.6L1117.3 740.0L1095.4 728.1Z" fill="url(#o39)"/><path d="M1296.6 383.6L1098.9 730.1L1077.6 717.1Z" fill="url(#o40)"/><path d="M1296.6 383.6L1081.0 719.3L1060.5 705.2Z" fill="url(#o41)"/><path d="M1296.6 383.6L1063.7 707.5L1044.0 692.4Z" fill="url(#o42)"/><path d="M1296.6 383.6L1047.1 694.9L1028.2 678.8Z" fill="url(#o43)"/><path d="M1296.6 383.6L1031.1 681.4L1013.1 664.3Z" fill="url(#o44)"/><path d="M1296.6 383.6L1015.9 667.1L998.8 649.1Z" fill="url(#o45)"/><path d="M1296.6 383.6L1001.4 652.0L985.3 633.1Z" fill="url(#o46)"/><path d="M1296.6 383.6L987.8 636.2L972.7 616.5Z" fill="url(#o47)"/><path d="M1296.6 383.6L975.0 619.7L960.9 599.2Z" fill="url(#o48)"/><path d="M1296.6 383.6L963.1 602.6L950.1 581.3Z" fill="url(#o49)"/><path d="M1296.6 383.6L952.1 584.8L940.2 562.9Z" fill="url(#o50)"/><path d="M1296.6 383.6L942.0 566.5L931.3 544.0Z" fill="url(#o51)"/><path d="M1296.6 383.6L932.9 547.7L923.4 524.7Z" fill="url(#o52)"/><path d="M1296.6 383.6L924.8 528.4L916.5 505.0Z" fill="url(#o53)"/><path d="M1296.6 383.6L917.8 508.8L910.7 484.9Z" fill="url(#o54)"/><path d="M1296.6 383.6L911.7 488.8L905.9 464.6Z" fill="url(#o55)"/><path d="M1296.6 383.6L906.8 468.5L902.2 444.0Z" fill="url(#o56)"/><path d="M1296.6 383.6L902.9 448.0L899.6 423.3Z" fill="url(#o57)"/><path d="M1296.6 383.6L900.0 427.3L898.1 402.5Z" fill="url(#o58)"/><path d="M1296.6 383.6L898.3 406.4L897.6 381.6Z" fill="url(#o59)"/><path d="M1296.6 383.6L897.6 385.6L898.3 360.7Z" fill="url(#o60)"/><path d="M1296.6 383.6L898.1 364.7L900.0 339.9Z" fill="url(#o61)"/><path d="M1296.6 383.6L899.6 343.9L902.9 319.2Z" fill="url(#o62)"/><path d="M1296.6 383.6L902.2 323.1L906.8 298.7Z" fill="url(#o63)"/><path d="M1296.6 383.6L905.9 302.6L911.7 278.4Z" fill="url(#o64)"/><path d="M1296.6 383.6L910.7 282.2L917.8 258.4Z" fill="url(#o65)"/><path d="M1296.6 383.6L916.5 262.2L924.8 238.7Z" fill="url(#o66)"/><path d="M1296.6 383.6L923.4 242.4L932.9 219.5Z" fill="url(#o67)"/><path d="M1296.6 383.6L931.3 223.1L942.0 200.7Z" fill="url(#o68)"/><path d="M1296.6 383.6L940.2 204.2L952.1 182.3Z" fill="url(#o69)"/><path d="M1296.6 383.6L950.1 185.8L963.1 164.6Z" fill="url(#o70)"/><path d="M1296.6 383.6L960.9 167.9L975.0 147.4Z" fill="url(#o71)"/><path d="M1296.6 383.6L972.7 150.7L987.8 130.9Z" fill="url(#o72)"/><path d="M1296.6 383.6L985.3 134.0L1001.4 115.1Z" fill="url(#o73)"/><path d="M1296.6 383.6L998.8 118.1L1015.9 100.0Z" fill="url(#o74)"/><path d="M1296.6 383.6L1013.1 102.9L1031.1 85.7Z" fill="url(#o75)"/><path d="M1296.6 383.6L1028.2 88.4L1047.1 72.2Z" fill="url(#o76)"/><path d="M1296.6 383.6L1044.0 74.8L1063.7 59.6Z" fill="url(#o77)"/><path d="M1296.6 383.6L1060.5 62.0L1081.0 47.9Z" fill="url(#o78)"/><path d="M1296.6 383.6L1077.6 50.0L1098.9 37.0Z" fill="url(#o79)"/><path d="M1296.6 383.6L1095.4 39.0L1117.3 27.2Z" fill="url(#o80)"/><path d="M1296.6 383.6L1113.7 29.0L1136.2 18.3Z" fill="url(#o81)"/><path d="M1296.6 383.6L1132.5 19.9L1155.5 10.4Z" fill="url(#o82)"/><path d="M1296.6 383.6L1151.8 11.8L1175.2 3.5Z" fill="url(#o83)"/><path d="M1296.6 383.6L1171.4 4.7L1195.3 -2.3Z" fill="url(#o84)"/><path d="M1296.6 383.6L1191.4 -1.3L1215.6 -7.1Z" fill="url(#o85)"/><path d="M1296.6 383.6L1211.7 -6.3L1236.2 -10.8Z" fill="url(#o86)"/><path d="M1296.6 383.6L1232.2 -10.2L1256.9 -13.4Z" fill="url(#o87)"/><path d="M1296.6 383.6L1252.9 -13.0L1277.7 -15.0Z" fill="url(#o88)"/><path d="M1296.6 383.6L1273.8 -14.8L1298.6 -15.4Z" fill="url(#o89)"/><path d="M1296.6 383.6L1294.6 -15.4L1319.5 -14.8Z" fill="url(#o90)"/><path d="M1296.6 383.6L1315.5 -15.0L1340.3 -13.0Z" fill="url(#o91)"/><path d="M1296.6 383.6L1336.3 -13.4L1361.0 -10.2Z" fill="url(#o92)"/><path d="M1296.6 383.6L1357.1 -10.8L1381.5 -6.3Z" fill="url(#o93)"/><path d="M1296.6 383.6L1377.6 -7.1L1401.8 -1.3Z" fill="url(#o94)"/><path d="M1296.6 383.6L1398.0 -2.3L1421.8 4.7Z" fill="url(#o95)"/><path d="M1296.6 383.6L1418.0 3.5L1441.5 11.8Z" fill="url(#o96)"/><path d="M1296.6 383.6L1437.7 10.4L1460.7 19.9Z" fill="url(#o97)"/><path d="M1296.6 383.6L1457.1 18.3L1479.5 29.0Z" fill="url(#o98)"/><path d="M1296.6 383.6L1476.0 27.2L1497.8 39.0Z" fill="url(#o99)"/><path d="M1296.6 383.6L1494.4 37.0L1515.6 50.0Z" fill="url(#o100)"/><path d="M1296.6 383.6L1512.3 47.9L1532.8 62.0Z" fill="url(#o101)"/><path d="M1296.6 383.6L1529.5 59.6L1549.3 74.8Z" fill="url(#o102)"/><path d="M1296.6 383.6L1546.2 72.2L1565.1 88.4Z" fill="url(#o103)"/><path d="M1296.6 383.6L1562.1 85.7L1580.2 102.9Z" fill="url(#o104)"/><path d="M1296.6 383.6L1577.3 100.0L1594.5 118.1Z" fill="url(#o105)"/><path d="M1296.6 383.6L1591.8 115.1L1608.0 134.0Z" fill="url(#o106)"/><path d="M1296.6 383.6L1605.4 130.9L1620.6 150.7Z" fill="url(#o107)"/><path d="M1296.6 383.6L1618.2 147.4L1632.3 167.9Z" fill="url(#o108)"/><path d="M1296.6 383.6L1630.2 164.6L1643.2 185.8Z" fill="url(#o109)"/><path d="M1296.6 383.6L1641.2 182.3L1653.0 204.2Z" fill="url(#o110)"/><path d="M1296.6 383.6L1651.2 200.7L1661.9 223.1Z" fill="url(#o111)"/><path d="M1296.6 383.6L1660.3 219.5L1669.8 242.4Z" fill="url(#o112)"/><path d="M1296.6 383.6L1668.4 238.7L1676.7 262.2Z" fill="url(#o113)"/><path d="M1296.6 383.6L1675.5 258.4L1682.5 282.2Z" fill="url(#o114)"/><path d="M1296.6 383.6L1681.5 278.4L1687.3 302.6Z" fill="url(#o115)"/><path d="M1296.6 383.6L1686.5 298.7L1691.0 323.1Z" fill="url(#o116)"/><path d="M1296.6 383.6L1690.4 319.2L1693.6 343.9Z" fill="url(#o117)"/><path d="M1296.6 383.6L1693.2 339.9L1695.2 364.7Z" fill="url(#o118)"/><path d="M1296.6 383.6L1695.0 360.7L1695.6 385.6Z" fill="url(#o119)"/></g><g clip-path="url(#tri)"><path d="M1296.6 383.6L1695.6 381.6L1695.0 406.4Z" fill="url(#i0)"/><path d="M1296.6 383.6L1695.2 402.5L1693.2 427.3Z" fill="url(#i1)"/><path d="M1296.6 383.6L1693.6 423.3L1690.4 448.0Z" fill="url(#i2)"/><path d="M1296.6 383.6L1691.0 444.0L1686.5 468.5Z" fill="url(#i3)"/><path d="M1296.6 383.6L1687.3 464.6L1681.5 488.8Z" fill="url(#i4)"/><path d="M1296.6 383.6L1682.5 484.9L1675.5 508.8Z" fill="url(#i5)"/><path d="M1296.6 383.6L1676.7 505.0L1668.4 528.4Z" fill="url(#i6)"/><path d="M1296.6 383.6L1669.8 524.7L1660.3 547.7Z" fill="url(#i7)"/><path d="M1296.6 383.6L1661.9 544.0L1651.2 566.5Z" fill="url(#i8)"/><path d="M1296.6 383.6L1653.0 562.9L1641.2 584.8Z" fill="url(#i9)"/><path d="M1296.6 383.6L1643.2 581.3L1630.2 602.6Z" fill="url(#i10)"/><path d="M1296.6 383.6L1632.3 599.2L1618.2 619.7Z" fill="url(#i11)"/><path d="M1296.6 383.6L1620.6 616.5L1605.4 636.2Z" fill="url(#i12)"/><path d="M1296.6 383.6L1608.0 633.1L1591.8 652.0Z" fill="url(#i13)"/><path d="M1296.6 383.6L1594.5 649.1L1577.3 667.1Z" fill="url(#i14)"/><path d="M1296.6 383.6L1580.2 664.3L1562.1 681.4Z" fill="url(#i15)"/><path d="M1296.6 383.6L1565.1 678.8L1546.2 694.9Z" fill="url(#i16)"/><path d="M1296.6 383.6L1549.3 692.4L1529.5 707.5Z" fill="url(#i17)"/><path d="M1296.6 383.6L1532.8 705.2L1512.3 719.3Z" fill="url(#i18)"/><path d="M1296.6 383.6L1515.6 717.1L1494.4 730.1Z" fill="url(#i19)"/><path d="M1296.6 383.6L1497.8 728.1L1476.0 740.0Z" fill="url(#i20)"/><path d="M1296.6 383.6L1479.5 738.2L1457.1 748.9Z" fill="url(#i21)"/><path d="M1296.6 383.6L1460.7 747.3L1437.7 756.8Z" fill="url(#i22)"/><path d="M1296.6 383.6L1441.5 755.4L1418.0 763.7Z" fill="url(#i23)"/><path d="M1296.6 383.6L1421.8 762.4L1398.0 769.5Z" fill="url(#i24)"/><path d="M1296.6 383.6L1401.8 768.5L1377.6 774.3Z" fill="url(#i25)"/><path d="M1296.6 383.6L1381.5 773.4L1357.1 778.0Z" fill="url(#i26)"/><path d="M1296.6 383.6L1361.0 777.3L1336.3 780.6Z" fill="url(#i27)"/><path d="M1296.6 383.6L1340.3 780.2L1315.5 782.1Z" fill="url(#i28)"/><path d="M1296.6 383.6L1319.5 781.9L1294.6 782.6Z" fill="url(#i29)"/><path d="M1296.6 383.6L1298.6 782.6L1273.8 781.9Z" fill="url(#i30)"/><path d="M1296.6 383.6L1277.7 782.1L1252.9 780.2Z" fill="url(#i31)"/><path d="M1296.6 383.6L1256.9 780.6L1232.2 777.3Z" fill="url(#i32)"/><path d="M1296.6 383.6L1236.2 778.0L1211.7 773.4Z" fill="url(#i33)"/><path d="M1296.6 383.6L1215.6 774.3L1191.4 768.5Z" fill="url(#i34)"/><path d="M1296.6 383.6L1195.3 769.5L1171.4 762.4Z" fill="url(#i35)"/><path d="M1296.6 383.6L1175.2 763.7L1151.8 755.4Z" fill="url(#i36)"/><path d="M1296.6 383.6L1155.5 756.8L1132.5 747.3Z" fill="url(#i37)"/><path d="M1296.6 383.6L1136.2 748.9L1113.7 738.2Z" fill="url(#i38)"/><path d="M1296.6 383.6L1117.3 740.0L1095.4 728.1Z" fill="url(#i39)"/><path d="M1296.6 383.6L1098.9 730.1L1077.6 717.1Z" fill="url(#i40)"/><path d="M1296.6 383.6L1081.0 719.3L1060.5 705.2Z" fill="url(#i41)"/><path d="M1296.6 383.6L1063.7 707.5L1044.0 692.4Z" fill="url(#i42)"/><path d="M1296.6 383.6L1047.1 694.9L1028.2 678.8Z" fill="url(#i43)"/><path d="M1296.6 383.6L1031.1 681.4L1013.1 664.3Z" fill="url(#i44)"/><path d="M1296.6 383.6L1015.9 667.1L998.8 649.1Z" fill="url(#i45)"/><path d="M1296.6 383.6L1001.4 652.0L985.3 633.1Z" fill="url(#i46)"/><path d="M1296.6 383.6L987.8 636.2L972.7 616.5Z" fill="url(#i47)"/><path d="M1296.6 383.6L975.0 619.7L960.9 599.2Z" fill="url(#i48)"/><path d="M1296.6 383.6L963.1 602.6L950.1 581.3Z" fill="url(#i49)"/><path d="M1296.6 383.6L952.1 584.8L940.2 562.9Z" fill="url(#i50)"/><path d="M1296.6 383.6L942.0 566.5L931.3 544.0Z" fill="url(#i51)"/><path d="M1296.6 383.6L932.9 547.7L923.4 524.7Z" fill="url(#i52)"/><path d="M1296.6 383.6L924.8 528.4L916.5 505.0Z" fill="url(#i53)"/><path d="M1296.6 383.6L917.8 508.8L910.7 484.9Z" fill="url(#i54)"/><path d="M1296.6 383.6L911.7 488.8L905.9 464.6Z" fill="url(#i55)"/><path d="M1296.6 383.6L906.8 468.5L902.2 444.0Z" fill="url(#i56)"/><path d="M1296.6 383.6L902.9 448.0L899.6 423.3Z" fill="url(#i57)"/><path d="M1296.6 383.6L900.0 427.3L898.1 402.5Z" fill="url(#i58)"/><path d="M1296.6 383.6L898.3 406.4L897.6 381.6Z" fill="url(#i59)"/><path d="M1296.6 383.6L897.6 385.6L898.3 360.7Z" fill="url(#i60)"/><path d="M1296.6 383.6L898.1 364.7L900.0 339.9Z" fill="url(#i61)"/><path d="M1296.6 383.6L899.6 343.9L902.9 319.2Z" fill="url(#i62)"/><path d="M1296.6 383.6L902.2 323.1L906.8 298.7Z" fill="url(#i63)"/><path d="M1296.6 383.6L905.9 302.6L911.7 278.4Z" fill="url(#i64)"/><path d="M1296.6 383.6L910.7 282.2L917.8 258.4Z" fill="url(#i65)"/><path d="M1296.6 383.6L916.5 262.2L924.8 238.7Z" fill="url(#i66)"/><path d="M1296.6 383.6L923.4 242.4L932.9 219.5Z" fill="url(#i67)"/><path d="M1296.6 383.6L931.3 223.1L942.0 200.7Z" fill="url(#i68)"/><path d="M1296.6 383.6L940.2 204.2L952.1 182.3Z" fill="url(#i69)"/><path d="M1296.6 383.6L950.1 185.8L963.1 164.6Z" fill="url(#i70)"/><path d="M1296.6 383.6L960.9 167.9L975.0 147.4Z" fill="url(#i71)"/><path d="M1296.6 383.6L972.7 150.7L987.8 130.9Z" fill="url(#i72)"/><path d="M1296.6 383.6L985.3 134.0L1001.4 115.1Z" fill="url(#i73)"/><path d="M1296.6 383.6L998.8 118.1L1015.9 100.0Z" fill="url(#i74)"/><path d="M1296.6 383.6L1013.1 102.9L1031.1 85.7Z" fill="url(#i75)"/><path d="M1296.6 383.6L1028.2 88.4L1047.1 72.2Z" fill="url(#i76)"/><path d="M1296.6 383.6L1044.0 74.8L1063.7 59.6Z" fill="url(#i77)"/><path d="M1296.6 383.6L1060.5 62.0L1081.0 47.9Z" fill="url(#i78)"/><path d="M1296.6 383.6L1077.6 50.0L1098.9 37.0Z" fill="url(#i79)"/><path d="M1296.6 383.6L1095.4 39.0L1117.3 27.2Z" fill="url(#i80)"/><path d="M1296.6 383.6L1113.7 29.0L1136.2 18.3Z" fill="url(#i81)"/><path d="M1296.6 383.6L1132.5 19.9L1155.5 10.4Z" fill="url(#i82)"/><path d="M1296.6 383.6L1151.8 11.8L1175.2 3.5Z" fill="url(#i83)"/><path d="M1296.6 383.6L1171.4 4.7L1195.3 -2.3Z" fill="url(#i84)"/><path d="M1296.6 383.6L1191.4 -1.3L1215.6 -7.1Z" fill="url(#i85)"/><path d="M1296.6 383.6L1211.7 -6.3L1236.2 -10.8Z" fill="url(#i86)"/><path d="M1296.6 383.6L1232.2 -10.2L1256.9 -13.4Z" fill="url(#i87)"/><path d="M1296.6 383.6L1252.9 -13.0L1277.7 -15.0Z" fill="url(#i88)"/><path d="M1296.6 383.6L1273.8 -14.8L1298.6 -15.4Z" fill="url(#i89)"/><path d="M1296.6 383.6L1294.6 -15.4L1319.5 -14.8Z" fill="url(#i90)"/><path d="M1296.6 383.6L1315.5 -15.0L1340.3 -13.0Z" fill="url(#i91)"/><path d="M1296.6 383.6L1336.3 -13.4L1361.0 -10.2Z" fill="url(#i92)"/><path d="M1296.6 383.6L1357.1 -10.8L1381.5 -6.3Z" fill="url(#i93)"/><path d="M1296.6 383.6L1377.6 -7.1L1401.8 -1.3Z" fill="url(#i94)"/><path d="M1296.6 383.6L1398.0 -2.3L1421.8 4.7Z" fill="url(#i95)"/><path d="M1296.6 383.6L1418.0 3.5L1441.5 11.8Z" fill="url(#i96)"/><path d="M1296.6 383.6L1437.7 10.4L1460.7 19.9Z" fill="url(#i97)"/><path d="M1296.6 383.6L1457.1 18.3L1479.5 29.0Z" fill="url(#i98)"/><path d="M1296.6 383.6L1476.0 27.2L1497.8 39.0Z" fill="url(#i99)"/><path d="M1296.6 383.6L1494.4 37.0L1515.6 50.0Z" fill="url(#i100)"/><path d="M1296.6 383.6L1512.3 47.9L1532.8 62.0Z" fill="url(#i101)"/><path d="M1296.6 383.6L1529.5 59.6L1549.3 74.8Z" fill="url(#i102)"/><path d="M1296.6 383.6L1546.2 72.2L1565.1 88.4Z" fill="url(#i103)"/><path d="M1296.6 383.6L1562.1 85.7L1580.2 102.9Z" fill="url(#i104)"/><path d="M1296.6 383.6L1577.3 100.0L1594.5 118.1Z" fill="url(#i105)"/><path d="M1296.6 383.6L1591.8 115.1L1608.0 134.0Z" fill="url(#i106)"/><path d="M1296.6 383.6L1605.4 130.9L1620.6 150.7Z" fill="url(#i107)"/><path d="M1296.6 383.6L1618.2 147.4L1632.3 167.9Z" fill="url(#i108)"/><path d="M1296.6 383.6L1630.2 164.6L1643.2 185.8Z" fill="url(#i109)"/><path d="M1296.6 383.6L1641.2 182.3L1653.0 204.2Z" fill="url(#i110)"/><path d="M1296.6 383.6L1651.2 200.7L1661.9 223.1Z" fill="url(#i111)"/><path d="M1296.6 383.6L1660.3 219.5L1669.8 242.4Z" fill="url(#i112)"/><path d="M1296.6 383.6L1668.4 238.7L1676.7 262.2Z" fill="url(#i113)"/><path d="M1296.6 383.6L1675.5 258.4L1682.5 282.2Z" fill="url(#i114)"/><path d="M1296.6 383.6L1681.5 278.4L1687.3 302.6Z" fill="url(#i115)"/><path d="M1296.6 383.6L1686.5 298.7L1691.0 323.1Z" fill="url(#i116)"/><path d="M1296.6 383.6L1690.4 319.2L1693.6 343.9Z" fill="url(#i117)"/><path d="M1296.6 383.6L1693.2 339.9L1695.2 364.7Z" fill="url(#i118)"/><path d="M1296.6 383.6L1695.0 360.7L1695.6 385.6Z" fill="url(#i119)"/></g></svg>
<canvas id="cie" width="653" height="500" style="position:absolute;left:1054px;top:79px"></canvas>
<svg width="1717" height="888"><rect x="1053.5" y="78.5" width="653.8" height="500.5" fill="none" stroke="#9a9a9a" stroke-width="1.5"/><line x1="1047.5" y1="579.00" x2="1053" y2="579.00" stroke="#e0e0e0" stroke-width="2"/><line x1="1053.50" y1="579" x2="1053.50" y2="585.5" stroke="#e0e0e0" stroke-width="2"/><line x1="1047.5" y1="519.60" x2="1053" y2="519.60" stroke="#e0e0e0" stroke-width="1.2"/><line x1="1131.25" y1="579" x2="1131.25" y2="585.5" stroke="#e0e0e0" stroke-width="1.2"/><line x1="1047.5" y1="460.20" x2="1053" y2="460.20" stroke="#e0e0e0" stroke-width="1.2"/><line x1="1209.00" y1="579" x2="1209.00" y2="585.5" stroke="#e0e0e0" stroke-width="1.2"/><line x1="1047.5" y1="400.80" x2="1053" y2="400.80" stroke="#e0e0e0" stroke-width="1.2"/><line x1="1286.75" y1="579" x2="1286.75" y2="585.5" stroke="#e0e0e0" stroke-width="1.2"/><line x1="1047.5" y1="341.40" x2="1053" y2="341.40" stroke="#e0e0e0" stroke-width="1.2"/><line x1="1364.50" y1="579" x2="1364.50" y2="585.5" stroke="#e0e0e0" stroke-width="1.2"/><line x1="1047.5" y1="282.00" x2="1053" y2="282.00" stroke="#e0e0e0" stroke-width="1.2"/><line x1="1442.25" y1="579" x2="1442.25" y2="585.5" stroke="#e0e0e0" stroke-width="1.2"/><line x1="1047.5" y1="222.60" x2="1053" y2="222.60" stroke="#e0e0e0" stroke-width="1.2"/><line x1="1520.00" y1="579" x2="1520.00" y2="585.5" stroke="#e0e0e0" stroke-width="1.2"/><line x1="1047.5" y1="163.20" x2="1053" y2="163.20" stroke="#e0e0e0" stroke-width="1.2"/><line x1="1597.75" y1="579" x2="1597.75" y2="585.5" stroke="#e0e0e0" stroke-width="1.2"/><line x1="1047.5" y1="103.80" x2="1053" y2="103.80" stroke="#e0e0e0" stroke-width="1.2"/><line x1="1675.50" y1="579" x2="1675.50" y2="585.5" stroke="#e0e0e0" stroke-width="1.2"/><rect x="1284.25" y="279.75" width="13" height="13" fill="none" stroke="#ffffff" stroke-width="1.9"/><rect x="1339.10" y="278.30" width="13" height="13" fill="none" stroke="#ffffff" stroke-width="1.9"/><rect x="1393.70" y="289.75" width="13" height="13" fill="none" stroke="#ffffff" stroke-width="1.9"/><rect x="1414.75" y="310.70" width="13" height="13" fill="none" stroke="#ffffff" stroke-width="1.9"/><rect x="1445.70" y="330.50" width="13" height="13" fill="none" stroke="#ffffff" stroke-width="1.9"/><rect x="1311.00" y="317.50" width="13" height="13" fill="none" stroke="#ffffff" stroke-width="1.9"/><rect x="1251.00" y="356.90" width="13" height="13" fill="none" stroke="#ffffff" stroke-width="1.9"/><rect x="1341.60" y="359.75" width="13" height="13" fill="none" stroke="#ffffff" stroke-width="1.9"/><rect x="1357.50" y="355.40" width="13" height="13" fill="none" stroke="#ffffff" stroke-width="1.9"/><rect x="1406.20" y="384.75" width="13" height="13" fill="none" stroke="#ffffff" stroke-width="1.9"/><rect x="1462.50" y="382.70" width="13" height="13" fill="none" stroke="#ffffff" stroke-width="1.9"/><rect x="1208.80" y="411.75" width="13" height="13" fill="none" stroke="#ffffff" stroke-width="1.9"/><rect x="1240.50" y="412.75" width="13" height="13" fill="none" stroke="#ffffff" stroke-width="1.9"/><rect x="1254.75" y="421.30" width="13" height="13" fill="none" stroke="#ffffff" stroke-width="1.9"/><rect x="1271.75" y="439.75" width="13" height="13" fill="none" stroke="#ffffff" stroke-width="1.9"/><rect x="1337.90" y="424.25" width="13" height="13" fill="none" stroke="#ffffff" stroke-width="1.9"/><rect x="1215.80" y="457.90" width="13" height="13" fill="none" stroke="#ffffff" stroke-width="1.9"/><rect x="1196.50" y="487.75" width="13" height="13" fill="none" stroke="#ffffff" stroke-width="1.9"/><rect x="1290" y="375" width="14" height="14" fill="none" stroke="#000" stroke-width="2.6"/><circle cx="1296" cy="382" r="5" fill="#ffffff" stroke="#000" stroke-width="1.5"/><circle cx="1297.5" cy="380" r="5" fill="#000" stroke="#000" stroke-width="1"/><circle cx="1298.5" cy="378.8" r="4.6" fill="#a2a2a2"/><circle cx="1360.75" cy="357.50" r="4.5" fill="#6a4a40" stroke="#000" stroke-width="1.3"/><circle cx="1337.20" cy="365.00" r="4.5" fill="#c4a090" stroke="#000" stroke-width="1.3"/><circle cx="1256.25" cy="414.50" r="4.5" fill="#000000" stroke="#000" stroke-width="1.3"/><circle cx="1254.70" cy="409.50" r="4.5" fill="#6a84a6" stroke="#000" stroke-width="1.3"/><circle cx="1328.75" cy="323.75" r="4.5" fill="#566a46" stroke="#000" stroke-width="1.3"/><circle cx="1266.00" cy="413.75" r="4.5" fill="#8a84b0" stroke="#000" stroke-width="1.3"/><circle cx="1271.50" cy="366.00" r="4.5" fill="#68b0a0" stroke="#000" stroke-width="1.3"/><circle cx="1433.00" cy="330.75" r="4.5" fill="#d8823a" stroke="#000" stroke-width="1.3"/><circle cx="1227.00" cy="445.75" r="4.5" fill="#4a5aa2" stroke="#000" stroke-width="1.3"/><circle cx="1385.00" cy="385.00" r="4.5" fill="#c05868" stroke="#000" stroke-width="1.3"/><circle cx="1270.00" cy="434.70" r="4.5" fill="#5c3c6c" stroke="#000" stroke-width="1.3"/><circle cx="1360.00" cy="293.25" r="4.5" fill="#9cb84c" stroke="#000" stroke-width="1.3"/><circle cx="1413.00" cy="316.00" r="4.5" fill="#e2a842" stroke="#000" stroke-width="1.3"/><circle cx="1205.75" cy="471.25" r="4.5" fill="#3c3c92" stroke="#000" stroke-width="1.3"/><circle cx="1313.75" cy="295.00" r="4.5" fill="#4c8c4c" stroke="#000" stroke-width="1.3"/><circle cx="1440.75" cy="378.75" r="4.5" fill="#b03444" stroke="#000" stroke-width="1.3"/><circle cx="1401.75" cy="300.20" r="4.5" fill="#e8c232" stroke="#000" stroke-width="1.3"/><circle cx="1320.75" cy="419.70" r="4.5" fill="#b05298" stroke="#000" stroke-width="1.3"/><circle cx="1231.75" cy="408.25" r="4.5" fill="#0a8aa2" stroke="#000" stroke-width="1.3"/><rect x="1507.8" y="83.2" width="196.7" height="154" fill="#303030"/></svg>
<svg width="1717" height="888"><defs><linearGradient id="il" x1="0" y1="0" x2="0" y2="1"><stop offset="0" stop-color="#007899"/><stop offset="1" stop-color="#005099"/></linearGradient><linearGradient id="ir" gradientUnits="userSpaceOnUse" x1="1600" y1="87" x2="1701" y2="234"><stop offset="0" stop-color="#00c8ff"/><stop offset="0.5" stop-color="#10a0ff"/><stop offset="1" stop-color="#3e7aff"/></linearGradient></defs><polygon points="1511,87 1633,87 1579,234 1511,234" fill="url(#il)"/><polygon points="1632,87 1701,87 1701,234 1578,234" fill="url(#ir)"/></svg>
<canvas id="ins" width="190" height="147" style="position:absolute;left:1511px;top:87px"></canvas>
<svg width="1717" height="888"><rect x="1510.3" y="86.2" width="190.9" height="147.6" fill="none" stroke="#a8a8a8" stroke-width="1.5"/><rect x="1597.5" y="151.5" width="15" height="15" fill="none" stroke="#fff" stroke-width="2.2"/><circle cx="1682" cy="112" r="4.8" fill="#0a8aa2" stroke="#000" stroke-width="1.5"/><rect x="1423.4" y="538.8" width="280.6" height="28" fill="#333333"/></svg>
<div class="t" style="left:1367.50px;top:61.42px;font-size:15px;line-height:15px;color:#dcdcdc;transform:translateX(-50%) scaleX(0.957);transform-origin:center 0;">CIE 1931 xy</div>
<div class="t" style="left:1563.75px;top:542.84px;font-size:21px;line-height:21px;color:#f0f0f0;transform:translateX(-50%) scaleX(0.97);transform-origin:center 0;">RGB Triplet: 0, 133, 163</div>
<div class="t" style="left:1048.30px;top:571.67px;font-size:15px;line-height:15px;color:#dcdcdc;transform:translateX(-100%) ;transform-origin:right 0;">0</div>
<div class="t" style="left:1053.50px;top:588.17px;font-size:15px;line-height:15px;color:#dcdcdc;transform:translateX(-50%) ;transform-origin:center 0;">0</div>
<div class="t" style="left:1048.30px;top:512.27px;font-size:15px;line-height:15px;color:#dcdcdc;transform:translateX(-100%) ;transform-origin:right 0;">0,1</div>
<div class="t" style="left:1131.25px;top:588.17px;font-size:15px;line-height:15px;color:#dcdcdc;transform:translateX(-50%) ;transform-origin:center 0;">0,1</div>
<div class="t" style="left:1048.30px;top:452.88px;font-size:15px;line-height:15px;color:#dcdcdc;transform:translateX(-100%) ;transform-origin:right 0;">0,2</div>
<div class="t" style="left:1209.00px;top:588.17px;font-size:15px;line-height:15px;color:#dcdcdc;transform:translateX(-50%) ;transform-origin:center 0;">0,2</div>
<div class="t" style="left:1048.30px;top:393.48px;font-size:15px;line-height:15px;color:#dcdcdc;transform:translateX(-100%) ;transform-origin:right 0;">0,3</div>
<div class="t" style="left:1286.75px;top:588.17px;font-size:15px;line-height:15px;color:#dcdcdc;transform:translateX(-50%) ;transform-origin:center 0;">0,3</div>
<div class="t" style="left:1048.30px;top:334.07px;font-size:15px;line-height:15px;color:#dcdcdc;transform:translateX(-100%) ;transform-origin:right 0;">0,4</div>
<div class="t" style="left:1364.50px;top:588.17px;font-size:15px;line-height:15px;color:#dcdcdc;transform:translateX(-50%) ;transform-origin:center 0;">0,4</div>
<div class="t" style="left:1048.30px;top:274.68px;font-size:15px;line-height:15px;color:#dcdcdc;transform:translateX(-100%) ;transform-origin:right 0;">0,5</div>
<div class="t" style="left:1442.25px;top:588.17px;font-size:15px;line-height:15px;color:#dcdcdc;transform:translateX(-50%) ;transform-origin:center 0;">0,5</div>
<div class="t" style="left:1048.30px;top:215.28px;font-size:15px;line-height:15px;color:#dcdcdc;transform:translateX(-100%) ;transform-origin:right 0;">0,6</div>
<div class="t" style="left:1520.00px;top:588.17px;font-size:15px;line-height:15px;color:#dcdcdc;transform:translateX(-50%) ;transform-origin:center 0;">0,6</div>
<div class="t" style="left:1048.30px;top:155.88px;font-size:15px;line-height:15px;color:#dcdcdc;transform:translateX(-100%) ;transform-origin:right 0;">0,7</div>
<div class="t" style="left:1597.75px;top:588.17px;font-size:15px;line-height:15px;color:#dcdcdc;transform:translateX(-50%) ;transform-origin:center 0;">0,7</div>
<div class="t" style="left:1048.30px;top:96.48px;font-size:15px;line-height:15px;color:#dcdcdc;transform:translateX(-100%) ;transform-origin:right 0;">0,8</div>
<div class="t" style="left:1675.50px;top:588.17px;font-size:15px;line-height:15px;color:#dcdcdc;transform:translateX(-50%) ;transform-origin:center 0;">0,8</div>
<script>
(function(){
function col(x,y,d,k,a){if(y<1e-4)y=1e-4;var X=x/y,Z=(1-x-y)/y;
var r=3.2406*X-1.5372-0.4986*Z,gg=-0.9689*X+1.8758+0.0415*Z,b=0.0557*X-0.2040+1.0570*Z;
var o=(r<0||gg<0||b<0);if(r<0)r=0;if(gg<0)gg=0;if(b<0)b=0;
var m=Math.max(r,gg,b);if(m<=0)m=1;var f=(o?0.6:1)*255/m;
d[k]=r*f;d[k+1]=gg*f;d[k+2]=b*f;d[k+3]=a;}
var c=document.getElementById('cie');var g=c.getContext('2d');
var W=653,H=500;var P=[134.9,497.0,134.9,497.0,134.8,497.0,134.8,497.0,134.8,497.0,134.8,497.0,134.7,497.1,134.7,497.1,134.6,497.1,134.6,497.1,134.6,497.1,134.5,497.1,134.5,497.1,134.4,497.1,134.4,497.1,134.3,497.1,134.2,497.1,134.2,497.2,134.1,497.2,134.1,497.2,134.0,497.1,133.9,497.1,133.9,497.1,133.8,497.1,133.7,497.1,133.6,497.2,133.5,497.2,133.4,497.2,133.3,497.1,133.2,497.1,133.1,497.1,132.9,497.0,132.8,497.0,132.6,496.9,132.4,496.8,132.1,496.7,131.9,496.6,131.7,496.4,131.4,496.3,131.1,496.1,130.8,495.9,130.5,495.7,130.1,495.4,129.7,495.2,129.3,494.9,128.8,494.6,128.4,494.3,127.9,493.9,127.3,493.5,126.7,493.1,126.1,492.7,125.5,492.3,124.8,491.8,124.0,491.3,123.1,490.7,122.2,490.1,121.3,489.5,120.3,488.8,119.2,488.1,118.1,487.4,116.9,486.5,115.6,485.6,114.3,484.6,112.9,483.6,111.5,482.4,109.9,481.1,108.4,479.7,106.7,478.2,104.9,476.3,102.9,474.1,100.7,471.7,98.4,468.9,96.0,465.7,93.4,462.1,90.7,458.1,87.8,453.6,84.7,448.4,81.4,442.6,78.0,436.3,74.3,429.2,70.5,421.2,66.3,412.4,61.9,402.8,57.4,392.3,52.9,380.8,48.4,368.2,43.8,354.6,39.3,340.1,34.8,324.8,30.3,308.4,25.9,291.0,21.6,273.0,17.8,254.9,14.2,236.4,11.0,217.5,8.1,198.6,5.9,180.2,4.2,162.2,3.0,144.5,2.4,127.3,2.5,111.0,3.4,95.5,5.0,80.7,7.3,66.9,10.3,54.4,14.2,43.2,18.8,33.3,24.0,24.7,29.7,17.7,36.0,12.4,42.8,8.6,50.0,6.2,57.3,4.7,64.8,4.4,72.5,5.4,80.4,7.2,88.3,9.2,96.2,11.7,104.1,14.6,112.0,17.9,119.8,21.3,127.4,24.7,134.8,28.3,142.2,31.9,149.5,35.7,156.7,39.6,163.8,43.6,170.9,47.7,178.0,51.9,185.1,56.3,192.1,60.7,199.2,65.2,206.2,69.8,213.1,74.4,220.1,79.1,227.0,83.9,234.0,88.8,240.9,93.7,247.9,98.6,254.8,103.6,261.8,108.6,268.7,113.7,275.7,118.8,282.6,123.9,289.6,129.0,296.5,134.2,303.4,139.4,310.4,144.6,317.3,149.8,324.2,155.0,331.1,160.2,337.9,165.3,344.8,170.5,351.6,175.7,358.4,180.8,365.1,185.9,371.8,191.0,378.4,196.0,385.0,201.1,391.5,206.0,398.0,211.0,404.4,215.8,410.7,220.6,416.9,225.4,423.1,230.1,429.1,234.7,435.1,239.2,441.0,243.7,446.7,248.0,452.3,252.3,457.8,256.5,463.1,260.6,468.3,264.5,473.2,268.2,477.9,271.9,482.5,275.3,487.0,278.7,491.3,282.0,495.5,285.2,499.6,288.3,503.5,291.3,507.2,294.0,510.7,296.7,514.0,299.2,517.2,301.6,520.2,303.9,523.0,306.1,525.7,308.1,528.3,310.1,530.7,311.9,533.0,313.7,535.1,315.3,537.1,316.9,539.1,318.3,540.9,319.7,542.6,321.0,544.2,322.2,545.8,323.4,547.2,324.5,548.6,325.5,549.9,326.6,551.2,327.5,552.4,328.4,553.5,329.3,554.6,330.2,555.7,331.0,556.7,331.7,557.6,332.5,558.5,333.1,559.4,333.8,560.2,334.4,560.9,334.9,561.6,335.5,562.3,335.9,562.8,336.3,563.3,336.8,564.0,337.2,564.7,337.8,565.5,338.4,566.3,339.0,567.1,339.6,567.8,340.2,568.5,340.7,569.2,341.2,569.7,341.6,570.1,341.9,570.4,342.2,570.6,342.3,570.7,342.4];
var im=g.createImageData(W,H);var d=im.data;
var mk=document.createElement('canvas');mk.width=W;mk.height=H;var mg=mk.getContext('2d');
mg.beginPath();mg.moveTo(P[0],P[1]);for(var i=2;i<P.length;i+=2)mg.lineTo(P[i],P[i+1]);mg.closePath();mg.fillStyle='#fff';mg.fill();
var md=mg.getImageData(0,0,W,H).data;
for(var py=0;py<H;py++){for(var px=0;px<W;px++){
var k=(py*W+px)*4;var a=md[k+3];if(a==0)continue;
col((px+1054+0.5-1053.5)/777.5,(579-(py+79+0.5))/594,d,k,a);}}
g.putImageData(im,0,0);
var c2=document.getElementById('ins');if(c2){var g2=c2.getContext('2d');var W2=190,H2=147;var im2=g2.createImageData(W2,H2);var d2=im2.data;
for(var py=0;py<H2;py++){for(var px=0;px<W2;px++){var k=(py*W2+px)*4;
col(0.2079+(px+1511+0.5-1605)/(775*4.6),0.2694-(py+87+0.5-159)/(594*4.6),d2,k,255);}}
g2.putImageData(im2,0,0);}
})();
</script>
</body></html>
